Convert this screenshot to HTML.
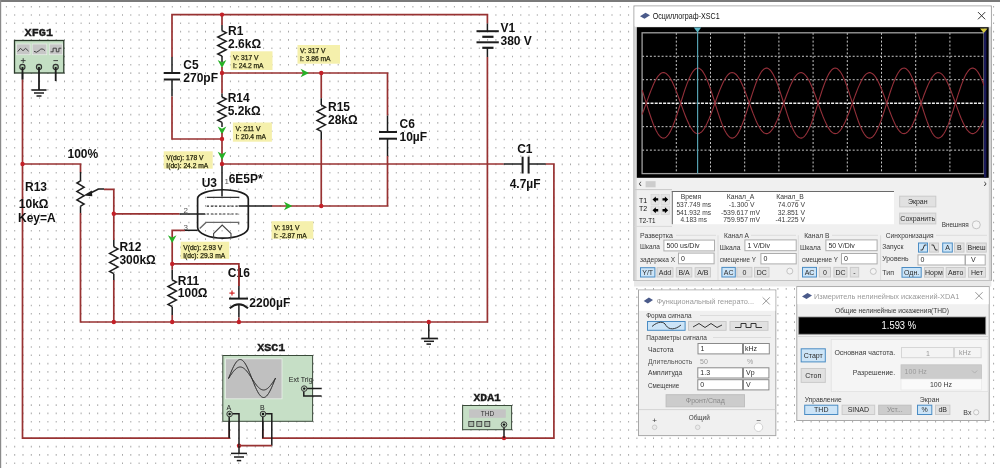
<!DOCTYPE html>
<html><head><meta charset="utf-8"><style>
html,body{margin:0;padding:0;background:#fff;overflow:hidden}
svg{display:block;will-change:transform}
</style></head><body>
<svg width="1000" height="468" viewBox="0 0 1000 468">
<rect x="0" y="0" width="1000" height="468" fill="#ffffff"/>
<path d="M5.9 5.9h1v1.6h-1zM5.9 14.2h1v1.6h-1zM5.9 22.5h1v1.6h-1zM5.9 30.8h1v1.6h-1zM5.9 39.1h1v1.6h-1zM5.9 47.4h1v1.6h-1zM5.9 55.7h1v1.6h-1zM5.9 64.0h1v1.6h-1zM5.9 72.3h1v1.6h-1zM5.9 80.6h1v1.6h-1zM5.9 88.9h1v1.6h-1zM5.9 97.2h1v1.6h-1zM5.9 105.5h1v1.6h-1zM5.9 113.8h1v1.6h-1zM5.9 122.1h1v1.6h-1zM5.9 130.4h1v1.6h-1zM5.9 138.7h1v1.6h-1zM5.9 147.0h1v1.6h-1zM5.9 155.3h1v1.6h-1zM5.9 163.6h1v1.6h-1zM5.9 171.9h1v1.6h-1zM5.9 180.2h1v1.6h-1zM5.9 188.5h1v1.6h-1zM5.9 196.8h1v1.6h-1zM5.9 205.1h1v1.6h-1zM5.9 213.4h1v1.6h-1zM5.9 221.7h1v1.6h-1zM5.9 230.0h1v1.6h-1zM5.9 238.3h1v1.6h-1zM5.9 246.6h1v1.6h-1zM5.9 254.9h1v1.6h-1zM5.9 263.2h1v1.6h-1zM5.9 271.5h1v1.6h-1zM5.9 279.8h1v1.6h-1zM5.9 288.1h1v1.6h-1zM5.9 296.4h1v1.6h-1zM5.9 304.7h1v1.6h-1zM5.9 313.0h1v1.6h-1zM5.9 321.3h1v1.6h-1zM5.9 329.6h1v1.6h-1zM5.9 337.9h1v1.6h-1zM5.9 346.2h1v1.6h-1zM5.9 354.5h1v1.6h-1zM5.9 362.8h1v1.6h-1zM5.9 371.1h1v1.6h-1zM5.9 379.4h1v1.6h-1zM5.9 387.7h1v1.6h-1zM5.9 396.0h1v1.6h-1zM5.9 404.3h1v1.6h-1zM5.9 412.6h1v1.6h-1zM5.9 420.9h1v1.6h-1zM5.9 429.2h1v1.6h-1zM5.9 437.5h1v1.6h-1zM5.9 445.8h1v1.6h-1zM5.9 454.1h1v1.6h-1zM5.9 462.4h1v1.6h-1zM14.2 5.9h1v1.6h-1zM14.2 14.2h1v1.6h-1zM14.2 22.5h1v1.6h-1zM14.2 30.8h1v1.6h-1zM14.2 39.1h1v1.6h-1zM14.2 47.4h1v1.6h-1zM14.2 55.7h1v1.6h-1zM14.2 64.0h1v1.6h-1zM14.2 72.3h1v1.6h-1zM14.2 80.6h1v1.6h-1zM14.2 88.9h1v1.6h-1zM14.2 97.2h1v1.6h-1zM14.2 105.5h1v1.6h-1zM14.2 113.8h1v1.6h-1zM14.2 122.1h1v1.6h-1zM14.2 130.4h1v1.6h-1zM14.2 138.7h1v1.6h-1zM14.2 147.0h1v1.6h-1zM14.2 155.3h1v1.6h-1zM14.2 163.6h1v1.6h-1zM14.2 171.9h1v1.6h-1zM14.2 180.2h1v1.6h-1zM14.2 188.5h1v1.6h-1zM14.2 196.8h1v1.6h-1zM14.2 205.1h1v1.6h-1zM14.2 213.4h1v1.6h-1zM14.2 221.7h1v1.6h-1zM14.2 230.0h1v1.6h-1zM14.2 238.3h1v1.6h-1zM14.2 246.6h1v1.6h-1zM14.2 254.9h1v1.6h-1zM14.2 263.2h1v1.6h-1zM14.2 271.5h1v1.6h-1zM14.2 279.8h1v1.6h-1zM14.2 288.1h1v1.6h-1zM14.2 296.4h1v1.6h-1zM14.2 304.7h1v1.6h-1zM14.2 313.0h1v1.6h-1zM14.2 321.3h1v1.6h-1zM14.2 329.6h1v1.6h-1zM14.2 337.9h1v1.6h-1zM14.2 346.2h1v1.6h-1zM14.2 354.5h1v1.6h-1zM14.2 362.8h1v1.6h-1zM14.2 371.1h1v1.6h-1zM14.2 379.4h1v1.6h-1zM14.2 387.7h1v1.6h-1zM14.2 396.0h1v1.6h-1zM14.2 404.3h1v1.6h-1zM14.2 412.6h1v1.6h-1zM14.2 420.9h1v1.6h-1zM14.2 429.2h1v1.6h-1zM14.2 437.5h1v1.6h-1zM14.2 445.8h1v1.6h-1zM14.2 454.1h1v1.6h-1zM14.2 462.4h1v1.6h-1zM22.5 5.9h1v1.6h-1zM22.5 14.2h1v1.6h-1zM22.5 22.5h1v1.6h-1zM22.5 30.8h1v1.6h-1zM22.5 39.1h1v1.6h-1zM22.5 47.4h1v1.6h-1zM22.5 55.7h1v1.6h-1zM22.5 64.0h1v1.6h-1zM22.5 72.3h1v1.6h-1zM22.5 80.6h1v1.6h-1zM22.5 88.9h1v1.6h-1zM22.5 97.2h1v1.6h-1zM22.5 105.5h1v1.6h-1zM22.5 113.8h1v1.6h-1zM22.5 122.1h1v1.6h-1zM22.5 130.4h1v1.6h-1zM22.5 138.7h1v1.6h-1zM22.5 147.0h1v1.6h-1zM22.5 155.3h1v1.6h-1zM22.5 163.6h1v1.6h-1zM22.5 171.9h1v1.6h-1zM22.5 180.2h1v1.6h-1zM22.5 188.5h1v1.6h-1zM22.5 196.8h1v1.6h-1zM22.5 205.1h1v1.6h-1zM22.5 213.4h1v1.6h-1zM22.5 221.7h1v1.6h-1zM22.5 230.0h1v1.6h-1zM22.5 238.3h1v1.6h-1zM22.5 246.6h1v1.6h-1zM22.5 254.9h1v1.6h-1zM22.5 263.2h1v1.6h-1zM22.5 271.5h1v1.6h-1zM22.5 279.8h1v1.6h-1zM22.5 288.1h1v1.6h-1zM22.5 296.4h1v1.6h-1zM22.5 304.7h1v1.6h-1zM22.5 313.0h1v1.6h-1zM22.5 321.3h1v1.6h-1zM22.5 329.6h1v1.6h-1zM22.5 337.9h1v1.6h-1zM22.5 346.2h1v1.6h-1zM22.5 354.5h1v1.6h-1zM22.5 362.8h1v1.6h-1zM22.5 371.1h1v1.6h-1zM22.5 379.4h1v1.6h-1zM22.5 387.7h1v1.6h-1zM22.5 396.0h1v1.6h-1zM22.5 404.3h1v1.6h-1zM22.5 412.6h1v1.6h-1zM22.5 420.9h1v1.6h-1zM22.5 429.2h1v1.6h-1zM22.5 437.5h1v1.6h-1zM22.5 445.8h1v1.6h-1zM22.5 454.1h1v1.6h-1zM22.5 462.4h1v1.6h-1zM30.8 5.9h1v1.6h-1zM30.8 14.2h1v1.6h-1zM30.8 22.5h1v1.6h-1zM30.8 30.8h1v1.6h-1zM30.8 39.1h1v1.6h-1zM30.8 47.4h1v1.6h-1zM30.8 55.7h1v1.6h-1zM30.8 64.0h1v1.6h-1zM30.8 72.3h1v1.6h-1zM30.8 80.6h1v1.6h-1zM30.8 88.9h1v1.6h-1zM30.8 97.2h1v1.6h-1zM30.8 105.5h1v1.6h-1zM30.8 113.8h1v1.6h-1zM30.8 122.1h1v1.6h-1zM30.8 130.4h1v1.6h-1zM30.8 138.7h1v1.6h-1zM30.8 147.0h1v1.6h-1zM30.8 155.3h1v1.6h-1zM30.8 163.6h1v1.6h-1zM30.8 171.9h1v1.6h-1zM30.8 180.2h1v1.6h-1zM30.8 188.5h1v1.6h-1zM30.8 196.8h1v1.6h-1zM30.8 205.1h1v1.6h-1zM30.8 213.4h1v1.6h-1zM30.8 221.7h1v1.6h-1zM30.8 230.0h1v1.6h-1zM30.8 238.3h1v1.6h-1zM30.8 246.6h1v1.6h-1zM30.8 254.9h1v1.6h-1zM30.8 263.2h1v1.6h-1zM30.8 271.5h1v1.6h-1zM30.8 279.8h1v1.6h-1zM30.8 288.1h1v1.6h-1zM30.8 296.4h1v1.6h-1zM30.8 304.7h1v1.6h-1zM30.8 313.0h1v1.6h-1zM30.8 321.3h1v1.6h-1zM30.8 329.6h1v1.6h-1zM30.8 337.9h1v1.6h-1zM30.8 346.2h1v1.6h-1zM30.8 354.5h1v1.6h-1zM30.8 362.8h1v1.6h-1zM30.8 371.1h1v1.6h-1zM30.8 379.4h1v1.6h-1zM30.8 387.7h1v1.6h-1zM30.8 396.0h1v1.6h-1zM30.8 404.3h1v1.6h-1zM30.8 412.6h1v1.6h-1zM30.8 420.9h1v1.6h-1zM30.8 429.2h1v1.6h-1zM30.8 437.5h1v1.6h-1zM30.8 445.8h1v1.6h-1zM30.8 454.1h1v1.6h-1zM30.8 462.4h1v1.6h-1zM39.1 5.9h1v1.6h-1zM39.1 14.2h1v1.6h-1zM39.1 22.5h1v1.6h-1zM39.1 30.8h1v1.6h-1zM39.1 39.1h1v1.6h-1zM39.1 47.4h1v1.6h-1zM39.1 55.7h1v1.6h-1zM39.1 64.0h1v1.6h-1zM39.1 72.3h1v1.6h-1zM39.1 80.6h1v1.6h-1zM39.1 88.9h1v1.6h-1zM39.1 97.2h1v1.6h-1zM39.1 105.5h1v1.6h-1zM39.1 113.8h1v1.6h-1zM39.1 122.1h1v1.6h-1zM39.1 130.4h1v1.6h-1zM39.1 138.7h1v1.6h-1zM39.1 147.0h1v1.6h-1zM39.1 155.3h1v1.6h-1zM39.1 163.6h1v1.6h-1zM39.1 171.9h1v1.6h-1zM39.1 180.2h1v1.6h-1zM39.1 188.5h1v1.6h-1zM39.1 196.8h1v1.6h-1zM39.1 205.1h1v1.6h-1zM39.1 213.4h1v1.6h-1zM39.1 221.7h1v1.6h-1zM39.1 230.0h1v1.6h-1zM39.1 238.3h1v1.6h-1zM39.1 246.6h1v1.6h-1zM39.1 254.9h1v1.6h-1zM39.1 263.2h1v1.6h-1zM39.1 271.5h1v1.6h-1zM39.1 279.8h1v1.6h-1zM39.1 288.1h1v1.6h-1zM39.1 296.4h1v1.6h-1zM39.1 304.7h1v1.6h-1zM39.1 313.0h1v1.6h-1zM39.1 321.3h1v1.6h-1zM39.1 329.6h1v1.6h-1zM39.1 337.9h1v1.6h-1zM39.1 346.2h1v1.6h-1zM39.1 354.5h1v1.6h-1zM39.1 362.8h1v1.6h-1zM39.1 371.1h1v1.6h-1zM39.1 379.4h1v1.6h-1zM39.1 387.7h1v1.6h-1zM39.1 396.0h1v1.6h-1zM39.1 404.3h1v1.6h-1zM39.1 412.6h1v1.6h-1zM39.1 420.9h1v1.6h-1zM39.1 429.2h1v1.6h-1zM39.1 437.5h1v1.6h-1zM39.1 445.8h1v1.6h-1zM39.1 454.1h1v1.6h-1zM39.1 462.4h1v1.6h-1zM47.4 5.9h1v1.6h-1zM47.4 14.2h1v1.6h-1zM47.4 22.5h1v1.6h-1zM47.4 30.8h1v1.6h-1zM47.4 39.1h1v1.6h-1zM47.4 47.4h1v1.6h-1zM47.4 55.7h1v1.6h-1zM47.4 64.0h1v1.6h-1zM47.4 72.3h1v1.6h-1zM47.4 80.6h1v1.6h-1zM47.4 88.9h1v1.6h-1zM47.4 97.2h1v1.6h-1zM47.4 105.5h1v1.6h-1zM47.4 113.8h1v1.6h-1zM47.4 122.1h1v1.6h-1zM47.4 130.4h1v1.6h-1zM47.4 138.7h1v1.6h-1zM47.4 147.0h1v1.6h-1zM47.4 155.3h1v1.6h-1zM47.4 163.6h1v1.6h-1zM47.4 171.9h1v1.6h-1zM47.4 180.2h1v1.6h-1zM47.4 188.5h1v1.6h-1zM47.4 196.8h1v1.6h-1zM47.4 205.1h1v1.6h-1zM47.4 213.4h1v1.6h-1zM47.4 221.7h1v1.6h-1zM47.4 230.0h1v1.6h-1zM47.4 238.3h1v1.6h-1zM47.4 246.6h1v1.6h-1zM47.4 254.9h1v1.6h-1zM47.4 263.2h1v1.6h-1zM47.4 271.5h1v1.6h-1zM47.4 279.8h1v1.6h-1zM47.4 288.1h1v1.6h-1zM47.4 296.4h1v1.6h-1zM47.4 304.7h1v1.6h-1zM47.4 313.0h1v1.6h-1zM47.4 321.3h1v1.6h-1zM47.4 329.6h1v1.6h-1zM47.4 337.9h1v1.6h-1zM47.4 346.2h1v1.6h-1zM47.4 354.5h1v1.6h-1zM47.4 362.8h1v1.6h-1zM47.4 371.1h1v1.6h-1zM47.4 379.4h1v1.6h-1zM47.4 387.7h1v1.6h-1zM47.4 396.0h1v1.6h-1zM47.4 404.3h1v1.6h-1zM47.4 412.6h1v1.6h-1zM47.4 420.9h1v1.6h-1zM47.4 429.2h1v1.6h-1zM47.4 437.5h1v1.6h-1zM47.4 445.8h1v1.6h-1zM47.4 454.1h1v1.6h-1zM47.4 462.4h1v1.6h-1zM55.7 5.9h1v1.6h-1zM55.7 14.2h1v1.6h-1zM55.7 22.5h1v1.6h-1zM55.7 30.8h1v1.6h-1zM55.7 39.1h1v1.6h-1zM55.7 47.4h1v1.6h-1zM55.7 55.7h1v1.6h-1zM55.7 64.0h1v1.6h-1zM55.7 72.3h1v1.6h-1zM55.7 80.6h1v1.6h-1zM55.7 88.9h1v1.6h-1zM55.7 97.2h1v1.6h-1zM55.7 105.5h1v1.6h-1zM55.7 113.8h1v1.6h-1zM55.7 122.1h1v1.6h-1zM55.7 130.4h1v1.6h-1zM55.7 138.7h1v1.6h-1zM55.7 147.0h1v1.6h-1zM55.7 155.3h1v1.6h-1zM55.7 163.6h1v1.6h-1zM55.7 171.9h1v1.6h-1zM55.7 180.2h1v1.6h-1zM55.7 188.5h1v1.6h-1zM55.7 196.8h1v1.6h-1zM55.7 205.1h1v1.6h-1zM55.7 213.4h1v1.6h-1zM55.7 221.7h1v1.6h-1zM55.7 230.0h1v1.6h-1zM55.7 238.3h1v1.6h-1zM55.7 246.6h1v1.6h-1zM55.7 254.9h1v1.6h-1zM55.7 263.2h1v1.6h-1zM55.7 271.5h1v1.6h-1zM55.7 279.8h1v1.6h-1zM55.7 288.1h1v1.6h-1zM55.7 296.4h1v1.6h-1zM55.7 304.7h1v1.6h-1zM55.7 313.0h1v1.6h-1zM55.7 321.3h1v1.6h-1zM55.7 329.6h1v1.6h-1zM55.7 337.9h1v1.6h-1zM55.7 346.2h1v1.6h-1zM55.7 354.5h1v1.6h-1zM55.7 362.8h1v1.6h-1zM55.7 371.1h1v1.6h-1zM55.7 379.4h1v1.6h-1zM55.7 387.7h1v1.6h-1zM55.7 396.0h1v1.6h-1zM55.7 404.3h1v1.6h-1zM55.7 412.6h1v1.6h-1zM55.7 420.9h1v1.6h-1zM55.7 429.2h1v1.6h-1zM55.7 437.5h1v1.6h-1zM55.7 445.8h1v1.6h-1zM55.7 454.1h1v1.6h-1zM55.7 462.4h1v1.6h-1zM64.0 5.9h1v1.6h-1zM64.0 14.2h1v1.6h-1zM64.0 22.5h1v1.6h-1zM64.0 30.8h1v1.6h-1zM64.0 39.1h1v1.6h-1zM64.0 47.4h1v1.6h-1zM64.0 55.7h1v1.6h-1zM64.0 64.0h1v1.6h-1zM64.0 72.3h1v1.6h-1zM64.0 80.6h1v1.6h-1zM64.0 88.9h1v1.6h-1zM64.0 97.2h1v1.6h-1zM64.0 105.5h1v1.6h-1zM64.0 113.8h1v1.6h-1zM64.0 122.1h1v1.6h-1zM64.0 130.4h1v1.6h-1zM64.0 138.7h1v1.6h-1zM64.0 147.0h1v1.6h-1zM64.0 155.3h1v1.6h-1zM64.0 163.6h1v1.6h-1zM64.0 171.9h1v1.6h-1zM64.0 180.2h1v1.6h-1zM64.0 188.5h1v1.6h-1zM64.0 196.8h1v1.6h-1zM64.0 205.1h1v1.6h-1zM64.0 213.4h1v1.6h-1zM64.0 221.7h1v1.6h-1zM64.0 230.0h1v1.6h-1zM64.0 238.3h1v1.6h-1zM64.0 246.6h1v1.6h-1zM64.0 254.9h1v1.6h-1zM64.0 263.2h1v1.6h-1zM64.0 271.5h1v1.6h-1zM64.0 279.8h1v1.6h-1zM64.0 288.1h1v1.6h-1zM64.0 296.4h1v1.6h-1zM64.0 304.7h1v1.6h-1zM64.0 313.0h1v1.6h-1zM64.0 321.3h1v1.6h-1zM64.0 329.6h1v1.6h-1zM64.0 337.9h1v1.6h-1zM64.0 346.2h1v1.6h-1zM64.0 354.5h1v1.6h-1zM64.0 362.8h1v1.6h-1zM64.0 371.1h1v1.6h-1zM64.0 379.4h1v1.6h-1zM64.0 387.7h1v1.6h-1zM64.0 396.0h1v1.6h-1zM64.0 404.3h1v1.6h-1zM64.0 412.6h1v1.6h-1zM64.0 420.9h1v1.6h-1zM64.0 429.2h1v1.6h-1zM64.0 437.5h1v1.6h-1zM64.0 445.8h1v1.6h-1zM64.0 454.1h1v1.6h-1zM64.0 462.4h1v1.6h-1zM72.3 5.9h1v1.6h-1zM72.3 14.2h1v1.6h-1zM72.3 22.5h1v1.6h-1zM72.3 30.8h1v1.6h-1zM72.3 39.1h1v1.6h-1zM72.3 47.4h1v1.6h-1zM72.3 55.7h1v1.6h-1zM72.3 64.0h1v1.6h-1zM72.3 72.3h1v1.6h-1zM72.3 80.6h1v1.6h-1zM72.3 88.9h1v1.6h-1zM72.3 97.2h1v1.6h-1zM72.3 105.5h1v1.6h-1zM72.3 113.8h1v1.6h-1zM72.3 122.1h1v1.6h-1zM72.3 130.4h1v1.6h-1zM72.3 138.7h1v1.6h-1zM72.3 147.0h1v1.6h-1zM72.3 155.3h1v1.6h-1zM72.3 163.6h1v1.6h-1zM72.3 171.9h1v1.6h-1zM72.3 180.2h1v1.6h-1zM72.3 188.5h1v1.6h-1zM72.3 196.8h1v1.6h-1zM72.3 205.1h1v1.6h-1zM72.3 213.4h1v1.6h-1zM72.3 221.7h1v1.6h-1zM72.3 230.0h1v1.6h-1zM72.3 238.3h1v1.6h-1zM72.3 246.6h1v1.6h-1zM72.3 254.9h1v1.6h-1zM72.3 263.2h1v1.6h-1zM72.3 271.5h1v1.6h-1zM72.3 279.8h1v1.6h-1zM72.3 288.1h1v1.6h-1zM72.3 296.4h1v1.6h-1zM72.3 304.7h1v1.6h-1zM72.3 313.0h1v1.6h-1zM72.3 321.3h1v1.6h-1zM72.3 329.6h1v1.6h-1zM72.3 337.9h1v1.6h-1zM72.3 346.2h1v1.6h-1zM72.3 354.5h1v1.6h-1zM72.3 362.8h1v1.6h-1zM72.3 371.1h1v1.6h-1zM72.3 379.4h1v1.6h-1zM72.3 387.7h1v1.6h-1zM72.3 396.0h1v1.6h-1zM72.3 404.3h1v1.6h-1zM72.3 412.6h1v1.6h-1zM72.3 420.9h1v1.6h-1zM72.3 429.2h1v1.6h-1zM72.3 437.5h1v1.6h-1zM72.3 445.8h1v1.6h-1zM72.3 454.1h1v1.6h-1zM72.3 462.4h1v1.6h-1zM80.6 5.9h1v1.6h-1zM80.6 14.2h1v1.6h-1zM80.6 22.5h1v1.6h-1zM80.6 30.8h1v1.6h-1zM80.6 39.1h1v1.6h-1zM80.6 47.4h1v1.6h-1zM80.6 55.7h1v1.6h-1zM80.6 64.0h1v1.6h-1zM80.6 72.3h1v1.6h-1zM80.6 80.6h1v1.6h-1zM80.6 88.9h1v1.6h-1zM80.6 97.2h1v1.6h-1zM80.6 105.5h1v1.6h-1zM80.6 113.8h1v1.6h-1zM80.6 122.1h1v1.6h-1zM80.6 130.4h1v1.6h-1zM80.6 138.7h1v1.6h-1zM80.6 147.0h1v1.6h-1zM80.6 155.3h1v1.6h-1zM80.6 163.6h1v1.6h-1zM80.6 171.9h1v1.6h-1zM80.6 180.2h1v1.6h-1zM80.6 188.5h1v1.6h-1zM80.6 196.8h1v1.6h-1zM80.6 205.1h1v1.6h-1zM80.6 213.4h1v1.6h-1zM80.6 221.7h1v1.6h-1zM80.6 230.0h1v1.6h-1zM80.6 238.3h1v1.6h-1zM80.6 246.6h1v1.6h-1zM80.6 254.9h1v1.6h-1zM80.6 263.2h1v1.6h-1zM80.6 271.5h1v1.6h-1zM80.6 279.8h1v1.6h-1zM80.6 288.1h1v1.6h-1zM80.6 296.4h1v1.6h-1zM80.6 304.7h1v1.6h-1zM80.6 313.0h1v1.6h-1zM80.6 321.3h1v1.6h-1zM80.6 329.6h1v1.6h-1zM80.6 337.9h1v1.6h-1zM80.6 346.2h1v1.6h-1zM80.6 354.5h1v1.6h-1zM80.6 362.8h1v1.6h-1zM80.6 371.1h1v1.6h-1zM80.6 379.4h1v1.6h-1zM80.6 387.7h1v1.6h-1zM80.6 396.0h1v1.6h-1zM80.6 404.3h1v1.6h-1zM80.6 412.6h1v1.6h-1zM80.6 420.9h1v1.6h-1zM80.6 429.2h1v1.6h-1zM80.6 437.5h1v1.6h-1zM80.6 445.8h1v1.6h-1zM80.6 454.1h1v1.6h-1zM80.6 462.4h1v1.6h-1zM88.9 5.9h1v1.6h-1zM88.9 14.2h1v1.6h-1zM88.9 22.5h1v1.6h-1zM88.9 30.8h1v1.6h-1zM88.9 39.1h1v1.6h-1zM88.9 47.4h1v1.6h-1zM88.9 55.7h1v1.6h-1zM88.9 64.0h1v1.6h-1zM88.9 72.3h1v1.6h-1zM88.9 80.6h1v1.6h-1zM88.9 88.9h1v1.6h-1zM88.9 97.2h1v1.6h-1zM88.9 105.5h1v1.6h-1zM88.9 113.8h1v1.6h-1zM88.9 122.1h1v1.6h-1zM88.9 130.4h1v1.6h-1zM88.9 138.7h1v1.6h-1zM88.9 147.0h1v1.6h-1zM88.9 155.3h1v1.6h-1zM88.9 163.6h1v1.6h-1zM88.9 171.9h1v1.6h-1zM88.9 180.2h1v1.6h-1zM88.9 188.5h1v1.6h-1zM88.9 196.8h1v1.6h-1zM88.9 205.1h1v1.6h-1zM88.9 213.4h1v1.6h-1zM88.9 221.7h1v1.6h-1zM88.9 230.0h1v1.6h-1zM88.9 238.3h1v1.6h-1zM88.9 246.6h1v1.6h-1zM88.9 254.9h1v1.6h-1zM88.9 263.2h1v1.6h-1zM88.9 271.5h1v1.6h-1zM88.9 279.8h1v1.6h-1zM88.9 288.1h1v1.6h-1zM88.9 296.4h1v1.6h-1zM88.9 304.7h1v1.6h-1zM88.9 313.0h1v1.6h-1zM88.9 321.3h1v1.6h-1zM88.9 329.6h1v1.6h-1zM88.9 337.9h1v1.6h-1zM88.9 346.2h1v1.6h-1zM88.9 354.5h1v1.6h-1zM88.9 362.8h1v1.6h-1zM88.9 371.1h1v1.6h-1zM88.9 379.4h1v1.6h-1zM88.9 387.7h1v1.6h-1zM88.9 396.0h1v1.6h-1zM88.9 404.3h1v1.6h-1zM88.9 412.6h1v1.6h-1zM88.9 420.9h1v1.6h-1zM88.9 429.2h1v1.6h-1zM88.9 437.5h1v1.6h-1zM88.9 445.8h1v1.6h-1zM88.9 454.1h1v1.6h-1zM88.9 462.4h1v1.6h-1zM97.2 5.9h1v1.6h-1zM97.2 14.2h1v1.6h-1zM97.2 22.5h1v1.6h-1zM97.2 30.8h1v1.6h-1zM97.2 39.1h1v1.6h-1zM97.2 47.4h1v1.6h-1zM97.2 55.7h1v1.6h-1zM97.2 64.0h1v1.6h-1zM97.2 72.3h1v1.6h-1zM97.2 80.6h1v1.6h-1zM97.2 88.9h1v1.6h-1zM97.2 97.2h1v1.6h-1zM97.2 105.5h1v1.6h-1zM97.2 113.8h1v1.6h-1zM97.2 122.1h1v1.6h-1zM97.2 130.4h1v1.6h-1zM97.2 138.7h1v1.6h-1zM97.2 147.0h1v1.6h-1zM97.2 155.3h1v1.6h-1zM97.2 163.6h1v1.6h-1zM97.2 171.9h1v1.6h-1zM97.2 180.2h1v1.6h-1zM97.2 188.5h1v1.6h-1zM97.2 196.8h1v1.6h-1zM97.2 205.1h1v1.6h-1zM97.2 213.4h1v1.6h-1zM97.2 221.7h1v1.6h-1zM97.2 230.0h1v1.6h-1zM97.2 238.3h1v1.6h-1zM97.2 246.6h1v1.6h-1zM97.2 254.9h1v1.6h-1zM97.2 263.2h1v1.6h-1zM97.2 271.5h1v1.6h-1zM97.2 279.8h1v1.6h-1zM97.2 288.1h1v1.6h-1zM97.2 296.4h1v1.6h-1zM97.2 304.7h1v1.6h-1zM97.2 313.0h1v1.6h-1zM97.2 321.3h1v1.6h-1zM97.2 329.6h1v1.6h-1zM97.2 337.9h1v1.6h-1zM97.2 346.2h1v1.6h-1zM97.2 354.5h1v1.6h-1zM97.2 362.8h1v1.6h-1zM97.2 371.1h1v1.6h-1zM97.2 379.4h1v1.6h-1zM97.2 387.7h1v1.6h-1zM97.2 396.0h1v1.6h-1zM97.2 404.3h1v1.6h-1zM97.2 412.6h1v1.6h-1zM97.2 420.9h1v1.6h-1zM97.2 429.2h1v1.6h-1zM97.2 437.5h1v1.6h-1zM97.2 445.8h1v1.6h-1zM97.2 454.1h1v1.6h-1zM97.2 462.4h1v1.6h-1zM105.5 5.9h1v1.6h-1zM105.5 14.2h1v1.6h-1zM105.5 22.5h1v1.6h-1zM105.5 30.8h1v1.6h-1zM105.5 39.1h1v1.6h-1zM105.5 47.4h1v1.6h-1zM105.5 55.7h1v1.6h-1zM105.5 64.0h1v1.6h-1zM105.5 72.3h1v1.6h-1zM105.5 80.6h1v1.6h-1zM105.5 88.9h1v1.6h-1zM105.5 97.2h1v1.6h-1zM105.5 105.5h1v1.6h-1zM105.5 113.8h1v1.6h-1zM105.5 122.1h1v1.6h-1zM105.5 130.4h1v1.6h-1zM105.5 138.7h1v1.6h-1zM105.5 147.0h1v1.6h-1zM105.5 155.3h1v1.6h-1zM105.5 163.6h1v1.6h-1zM105.5 171.9h1v1.6h-1zM105.5 180.2h1v1.6h-1zM105.5 188.5h1v1.6h-1zM105.5 196.8h1v1.6h-1zM105.5 205.1h1v1.6h-1zM105.5 213.4h1v1.6h-1zM105.5 221.7h1v1.6h-1zM105.5 230.0h1v1.6h-1zM105.5 238.3h1v1.6h-1zM105.5 246.6h1v1.6h-1zM105.5 254.9h1v1.6h-1zM105.5 263.2h1v1.6h-1zM105.5 271.5h1v1.6h-1zM105.5 279.8h1v1.6h-1zM105.5 288.1h1v1.6h-1zM105.5 296.4h1v1.6h-1zM105.5 304.7h1v1.6h-1zM105.5 313.0h1v1.6h-1zM105.5 321.3h1v1.6h-1zM105.5 329.6h1v1.6h-1zM105.5 337.9h1v1.6h-1zM105.5 346.2h1v1.6h-1zM105.5 354.5h1v1.6h-1zM105.5 362.8h1v1.6h-1zM105.5 371.1h1v1.6h-1zM105.5 379.4h1v1.6h-1zM105.5 387.7h1v1.6h-1zM105.5 396.0h1v1.6h-1zM105.5 404.3h1v1.6h-1zM105.5 412.6h1v1.6h-1zM105.5 420.9h1v1.6h-1zM105.5 429.2h1v1.6h-1zM105.5 437.5h1v1.6h-1zM105.5 445.8h1v1.6h-1zM105.5 454.1h1v1.6h-1zM105.5 462.4h1v1.6h-1zM113.7 5.9h1v1.6h-1zM113.7 14.2h1v1.6h-1zM113.7 22.5h1v1.6h-1zM113.7 30.8h1v1.6h-1zM113.7 39.1h1v1.6h-1zM113.7 47.4h1v1.6h-1zM113.7 55.7h1v1.6h-1zM113.7 64.0h1v1.6h-1zM113.7 72.3h1v1.6h-1zM113.7 80.6h1v1.6h-1zM113.7 88.9h1v1.6h-1zM113.7 97.2h1v1.6h-1zM113.7 105.5h1v1.6h-1zM113.7 113.8h1v1.6h-1zM113.7 122.1h1v1.6h-1zM113.7 130.4h1v1.6h-1zM113.7 138.7h1v1.6h-1zM113.7 147.0h1v1.6h-1zM113.7 155.3h1v1.6h-1zM113.7 163.6h1v1.6h-1zM113.7 171.9h1v1.6h-1zM113.7 180.2h1v1.6h-1zM113.7 188.5h1v1.6h-1zM113.7 196.8h1v1.6h-1zM113.7 205.1h1v1.6h-1zM113.7 213.4h1v1.6h-1zM113.7 221.7h1v1.6h-1zM113.7 230.0h1v1.6h-1zM113.7 238.3h1v1.6h-1zM113.7 246.6h1v1.6h-1zM113.7 254.9h1v1.6h-1zM113.7 263.2h1v1.6h-1zM113.7 271.5h1v1.6h-1zM113.7 279.8h1v1.6h-1zM113.7 288.1h1v1.6h-1zM113.7 296.4h1v1.6h-1zM113.7 304.7h1v1.6h-1zM113.7 313.0h1v1.6h-1zM113.7 321.3h1v1.6h-1zM113.7 329.6h1v1.6h-1zM113.7 337.9h1v1.6h-1zM113.7 346.2h1v1.6h-1zM113.7 354.5h1v1.6h-1zM113.7 362.8h1v1.6h-1zM113.7 371.1h1v1.6h-1zM113.7 379.4h1v1.6h-1zM113.7 387.7h1v1.6h-1zM113.7 396.0h1v1.6h-1zM113.7 404.3h1v1.6h-1zM113.7 412.6h1v1.6h-1zM113.7 420.9h1v1.6h-1zM113.7 429.2h1v1.6h-1zM113.7 437.5h1v1.6h-1zM113.7 445.8h1v1.6h-1zM113.7 454.1h1v1.6h-1zM113.7 462.4h1v1.6h-1zM122.0 5.9h1v1.6h-1zM122.0 14.2h1v1.6h-1zM122.0 22.5h1v1.6h-1zM122.0 30.8h1v1.6h-1zM122.0 39.1h1v1.6h-1zM122.0 47.4h1v1.6h-1zM122.0 55.7h1v1.6h-1zM122.0 64.0h1v1.6h-1zM122.0 72.3h1v1.6h-1zM122.0 80.6h1v1.6h-1zM122.0 88.9h1v1.6h-1zM122.0 97.2h1v1.6h-1zM122.0 105.5h1v1.6h-1zM122.0 113.8h1v1.6h-1zM122.0 122.1h1v1.6h-1zM122.0 130.4h1v1.6h-1zM122.0 138.7h1v1.6h-1zM122.0 147.0h1v1.6h-1zM122.0 155.3h1v1.6h-1zM122.0 163.6h1v1.6h-1zM122.0 171.9h1v1.6h-1zM122.0 180.2h1v1.6h-1zM122.0 188.5h1v1.6h-1zM122.0 196.8h1v1.6h-1zM122.0 205.1h1v1.6h-1zM122.0 213.4h1v1.6h-1zM122.0 221.7h1v1.6h-1zM122.0 230.0h1v1.6h-1zM122.0 238.3h1v1.6h-1zM122.0 246.6h1v1.6h-1zM122.0 254.9h1v1.6h-1zM122.0 263.2h1v1.6h-1zM122.0 271.5h1v1.6h-1zM122.0 279.8h1v1.6h-1zM122.0 288.1h1v1.6h-1zM122.0 296.4h1v1.6h-1zM122.0 304.7h1v1.6h-1zM122.0 313.0h1v1.6h-1zM122.0 321.3h1v1.6h-1zM122.0 329.6h1v1.6h-1zM122.0 337.9h1v1.6h-1zM122.0 346.2h1v1.6h-1zM122.0 354.5h1v1.6h-1zM122.0 362.8h1v1.6h-1zM122.0 371.1h1v1.6h-1zM122.0 379.4h1v1.6h-1zM122.0 387.7h1v1.6h-1zM122.0 396.0h1v1.6h-1zM122.0 404.3h1v1.6h-1zM122.0 412.6h1v1.6h-1zM122.0 420.9h1v1.6h-1zM122.0 429.2h1v1.6h-1zM122.0 437.5h1v1.6h-1zM122.0 445.8h1v1.6h-1zM122.0 454.1h1v1.6h-1zM122.0 462.4h1v1.6h-1zM130.3 5.9h1v1.6h-1zM130.3 14.2h1v1.6h-1zM130.3 22.5h1v1.6h-1zM130.3 30.8h1v1.6h-1zM130.3 39.1h1v1.6h-1zM130.3 47.4h1v1.6h-1zM130.3 55.7h1v1.6h-1zM130.3 64.0h1v1.6h-1zM130.3 72.3h1v1.6h-1zM130.3 80.6h1v1.6h-1zM130.3 88.9h1v1.6h-1zM130.3 97.2h1v1.6h-1zM130.3 105.5h1v1.6h-1zM130.3 113.8h1v1.6h-1zM130.3 122.1h1v1.6h-1zM130.3 130.4h1v1.6h-1zM130.3 138.7h1v1.6h-1zM130.3 147.0h1v1.6h-1zM130.3 155.3h1v1.6h-1zM130.3 163.6h1v1.6h-1zM130.3 171.9h1v1.6h-1zM130.3 180.2h1v1.6h-1zM130.3 188.5h1v1.6h-1zM130.3 196.8h1v1.6h-1zM130.3 205.1h1v1.6h-1zM130.3 213.4h1v1.6h-1zM130.3 221.7h1v1.6h-1zM130.3 230.0h1v1.6h-1zM130.3 238.3h1v1.6h-1zM130.3 246.6h1v1.6h-1zM130.3 254.9h1v1.6h-1zM130.3 263.2h1v1.6h-1zM130.3 271.5h1v1.6h-1zM130.3 279.8h1v1.6h-1zM130.3 288.1h1v1.6h-1zM130.3 296.4h1v1.6h-1zM130.3 304.7h1v1.6h-1zM130.3 313.0h1v1.6h-1zM130.3 321.3h1v1.6h-1zM130.3 329.6h1v1.6h-1zM130.3 337.9h1v1.6h-1zM130.3 346.2h1v1.6h-1zM130.3 354.5h1v1.6h-1zM130.3 362.8h1v1.6h-1zM130.3 371.1h1v1.6h-1zM130.3 379.4h1v1.6h-1zM130.3 387.7h1v1.6h-1zM130.3 396.0h1v1.6h-1zM130.3 404.3h1v1.6h-1zM130.3 412.6h1v1.6h-1zM130.3 420.9h1v1.6h-1zM130.3 429.2h1v1.6h-1zM130.3 437.5h1v1.6h-1zM130.3 445.8h1v1.6h-1zM130.3 454.1h1v1.6h-1zM130.3 462.4h1v1.6h-1zM138.6 5.9h1v1.6h-1zM138.6 14.2h1v1.6h-1zM138.6 22.5h1v1.6h-1zM138.6 30.8h1v1.6h-1zM138.6 39.1h1v1.6h-1zM138.6 47.4h1v1.6h-1zM138.6 55.7h1v1.6h-1zM138.6 64.0h1v1.6h-1zM138.6 72.3h1v1.6h-1zM138.6 80.6h1v1.6h-1zM138.6 88.9h1v1.6h-1zM138.6 97.2h1v1.6h-1zM138.6 105.5h1v1.6h-1zM138.6 113.8h1v1.6h-1zM138.6 122.1h1v1.6h-1zM138.6 130.4h1v1.6h-1zM138.6 138.7h1v1.6h-1zM138.6 147.0h1v1.6h-1zM138.6 155.3h1v1.6h-1zM138.6 163.6h1v1.6h-1zM138.6 171.9h1v1.6h-1zM138.6 180.2h1v1.6h-1zM138.6 188.5h1v1.6h-1zM138.6 196.8h1v1.6h-1zM138.6 205.1h1v1.6h-1zM138.6 213.4h1v1.6h-1zM138.6 221.7h1v1.6h-1zM138.6 230.0h1v1.6h-1zM138.6 238.3h1v1.6h-1zM138.6 246.6h1v1.6h-1zM138.6 254.9h1v1.6h-1zM138.6 263.2h1v1.6h-1zM138.6 271.5h1v1.6h-1zM138.6 279.8h1v1.6h-1zM138.6 288.1h1v1.6h-1zM138.6 296.4h1v1.6h-1zM138.6 304.7h1v1.6h-1zM138.6 313.0h1v1.6h-1zM138.6 321.3h1v1.6h-1zM138.6 329.6h1v1.6h-1zM138.6 337.9h1v1.6h-1zM138.6 346.2h1v1.6h-1zM138.6 354.5h1v1.6h-1zM138.6 362.8h1v1.6h-1zM138.6 371.1h1v1.6h-1zM138.6 379.4h1v1.6h-1zM138.6 387.7h1v1.6h-1zM138.6 396.0h1v1.6h-1zM138.6 404.3h1v1.6h-1zM138.6 412.6h1v1.6h-1zM138.6 420.9h1v1.6h-1zM138.6 429.2h1v1.6h-1zM138.6 437.5h1v1.6h-1zM138.6 445.8h1v1.6h-1zM138.6 454.1h1v1.6h-1zM138.6 462.4h1v1.6h-1zM146.9 5.9h1v1.6h-1zM146.9 14.2h1v1.6h-1zM146.9 22.5h1v1.6h-1zM146.9 30.8h1v1.6h-1zM146.9 39.1h1v1.6h-1zM146.9 47.4h1v1.6h-1zM146.9 55.7h1v1.6h-1zM146.9 64.0h1v1.6h-1zM146.9 72.3h1v1.6h-1zM146.9 80.6h1v1.6h-1zM146.9 88.9h1v1.6h-1zM146.9 97.2h1v1.6h-1zM146.9 105.5h1v1.6h-1zM146.9 113.8h1v1.6h-1zM146.9 122.1h1v1.6h-1zM146.9 130.4h1v1.6h-1zM146.9 138.7h1v1.6h-1zM146.9 147.0h1v1.6h-1zM146.9 155.3h1v1.6h-1zM146.9 163.6h1v1.6h-1zM146.9 171.9h1v1.6h-1zM146.9 180.2h1v1.6h-1zM146.9 188.5h1v1.6h-1zM146.9 196.8h1v1.6h-1zM146.9 205.1h1v1.6h-1zM146.9 213.4h1v1.6h-1zM146.9 221.7h1v1.6h-1zM146.9 230.0h1v1.6h-1zM146.9 238.3h1v1.6h-1zM146.9 246.6h1v1.6h-1zM146.9 254.9h1v1.6h-1zM146.9 263.2h1v1.6h-1zM146.9 271.5h1v1.6h-1zM146.9 279.8h1v1.6h-1zM146.9 288.1h1v1.6h-1zM146.9 296.4h1v1.6h-1zM146.9 304.7h1v1.6h-1zM146.9 313.0h1v1.6h-1zM146.9 321.3h1v1.6h-1zM146.9 329.6h1v1.6h-1zM146.9 337.9h1v1.6h-1zM146.9 346.2h1v1.6h-1zM146.9 354.5h1v1.6h-1zM146.9 362.8h1v1.6h-1zM146.9 371.1h1v1.6h-1zM146.9 379.4h1v1.6h-1zM146.9 387.7h1v1.6h-1zM146.9 396.0h1v1.6h-1zM146.9 404.3h1v1.6h-1zM146.9 412.6h1v1.6h-1zM146.9 420.9h1v1.6h-1zM146.9 429.2h1v1.6h-1zM146.9 437.5h1v1.6h-1zM146.9 445.8h1v1.6h-1zM146.9 454.1h1v1.6h-1zM146.9 462.4h1v1.6h-1zM155.2 5.9h1v1.6h-1zM155.2 14.2h1v1.6h-1zM155.2 22.5h1v1.6h-1zM155.2 30.8h1v1.6h-1zM155.2 39.1h1v1.6h-1zM155.2 47.4h1v1.6h-1zM155.2 55.7h1v1.6h-1zM155.2 64.0h1v1.6h-1zM155.2 72.3h1v1.6h-1zM155.2 80.6h1v1.6h-1zM155.2 88.9h1v1.6h-1zM155.2 97.2h1v1.6h-1zM155.2 105.5h1v1.6h-1zM155.2 113.8h1v1.6h-1zM155.2 122.1h1v1.6h-1zM155.2 130.4h1v1.6h-1zM155.2 138.7h1v1.6h-1zM155.2 147.0h1v1.6h-1zM155.2 155.3h1v1.6h-1zM155.2 163.6h1v1.6h-1zM155.2 171.9h1v1.6h-1zM155.2 180.2h1v1.6h-1zM155.2 188.5h1v1.6h-1zM155.2 196.8h1v1.6h-1zM155.2 205.1h1v1.6h-1zM155.2 213.4h1v1.6h-1zM155.2 221.7h1v1.6h-1zM155.2 230.0h1v1.6h-1zM155.2 238.3h1v1.6h-1zM155.2 246.6h1v1.6h-1zM155.2 254.9h1v1.6h-1zM155.2 263.2h1v1.6h-1zM155.2 271.5h1v1.6h-1zM155.2 279.8h1v1.6h-1zM155.2 288.1h1v1.6h-1zM155.2 296.4h1v1.6h-1zM155.2 304.7h1v1.6h-1zM155.2 313.0h1v1.6h-1zM155.2 321.3h1v1.6h-1zM155.2 329.6h1v1.6h-1zM155.2 337.9h1v1.6h-1zM155.2 346.2h1v1.6h-1zM155.2 354.5h1v1.6h-1zM155.2 362.8h1v1.6h-1zM155.2 371.1h1v1.6h-1zM155.2 379.4h1v1.6h-1zM155.2 387.7h1v1.6h-1zM155.2 396.0h1v1.6h-1zM155.2 404.3h1v1.6h-1zM155.2 412.6h1v1.6h-1zM155.2 420.9h1v1.6h-1zM155.2 429.2h1v1.6h-1zM155.2 437.5h1v1.6h-1zM155.2 445.8h1v1.6h-1zM155.2 454.1h1v1.6h-1zM155.2 462.4h1v1.6h-1zM163.5 5.9h1v1.6h-1zM163.5 14.2h1v1.6h-1zM163.5 22.5h1v1.6h-1zM163.5 30.8h1v1.6h-1zM163.5 39.1h1v1.6h-1zM163.5 47.4h1v1.6h-1zM163.5 55.7h1v1.6h-1zM163.5 64.0h1v1.6h-1zM163.5 72.3h1v1.6h-1zM163.5 80.6h1v1.6h-1zM163.5 88.9h1v1.6h-1zM163.5 97.2h1v1.6h-1zM163.5 105.5h1v1.6h-1zM163.5 113.8h1v1.6h-1zM163.5 122.1h1v1.6h-1zM163.5 130.4h1v1.6h-1zM163.5 138.7h1v1.6h-1zM163.5 147.0h1v1.6h-1zM163.5 155.3h1v1.6h-1zM163.5 163.6h1v1.6h-1zM163.5 171.9h1v1.6h-1zM163.5 180.2h1v1.6h-1zM163.5 188.5h1v1.6h-1zM163.5 196.8h1v1.6h-1zM163.5 205.1h1v1.6h-1zM163.5 213.4h1v1.6h-1zM163.5 221.7h1v1.6h-1zM163.5 230.0h1v1.6h-1zM163.5 238.3h1v1.6h-1zM163.5 246.6h1v1.6h-1zM163.5 254.9h1v1.6h-1zM163.5 263.2h1v1.6h-1zM163.5 271.5h1v1.6h-1zM163.5 279.8h1v1.6h-1zM163.5 288.1h1v1.6h-1zM163.5 296.4h1v1.6h-1zM163.5 304.7h1v1.6h-1zM163.5 313.0h1v1.6h-1zM163.5 321.3h1v1.6h-1zM163.5 329.6h1v1.6h-1zM163.5 337.9h1v1.6h-1zM163.5 346.2h1v1.6h-1zM163.5 354.5h1v1.6h-1zM163.5 362.8h1v1.6h-1zM163.5 371.1h1v1.6h-1zM163.5 379.4h1v1.6h-1zM163.5 387.7h1v1.6h-1zM163.5 396.0h1v1.6h-1zM163.5 404.3h1v1.6h-1zM163.5 412.6h1v1.6h-1zM163.5 420.9h1v1.6h-1zM163.5 429.2h1v1.6h-1zM163.5 437.5h1v1.6h-1zM163.5 445.8h1v1.6h-1zM163.5 454.1h1v1.6h-1zM163.5 462.4h1v1.6h-1zM171.8 5.9h1v1.6h-1zM171.8 14.2h1v1.6h-1zM171.8 22.5h1v1.6h-1zM171.8 30.8h1v1.6h-1zM171.8 39.1h1v1.6h-1zM171.8 47.4h1v1.6h-1zM171.8 55.7h1v1.6h-1zM171.8 64.0h1v1.6h-1zM171.8 72.3h1v1.6h-1zM171.8 80.6h1v1.6h-1zM171.8 88.9h1v1.6h-1zM171.8 97.2h1v1.6h-1zM171.8 105.5h1v1.6h-1zM171.8 113.8h1v1.6h-1zM171.8 122.1h1v1.6h-1zM171.8 130.4h1v1.6h-1zM171.8 138.7h1v1.6h-1zM171.8 147.0h1v1.6h-1zM171.8 155.3h1v1.6h-1zM171.8 163.6h1v1.6h-1zM171.8 171.9h1v1.6h-1zM171.8 180.2h1v1.6h-1zM171.8 188.5h1v1.6h-1zM171.8 196.8h1v1.6h-1zM171.8 205.1h1v1.6h-1zM171.8 213.4h1v1.6h-1zM171.8 221.7h1v1.6h-1zM171.8 230.0h1v1.6h-1zM171.8 238.3h1v1.6h-1zM171.8 246.6h1v1.6h-1zM171.8 254.9h1v1.6h-1zM171.8 263.2h1v1.6h-1zM171.8 271.5h1v1.6h-1zM171.8 279.8h1v1.6h-1zM171.8 288.1h1v1.6h-1zM171.8 296.4h1v1.6h-1zM171.8 304.7h1v1.6h-1zM171.8 313.0h1v1.6h-1zM171.8 321.3h1v1.6h-1zM171.8 329.6h1v1.6h-1zM171.8 337.9h1v1.6h-1zM171.8 346.2h1v1.6h-1zM171.8 354.5h1v1.6h-1zM171.8 362.8h1v1.6h-1zM171.8 371.1h1v1.6h-1zM171.8 379.4h1v1.6h-1zM171.8 387.7h1v1.6h-1zM171.8 396.0h1v1.6h-1zM171.8 404.3h1v1.6h-1zM171.8 412.6h1v1.6h-1zM171.8 420.9h1v1.6h-1zM171.8 429.2h1v1.6h-1zM171.8 437.5h1v1.6h-1zM171.8 445.8h1v1.6h-1zM171.8 454.1h1v1.6h-1zM171.8 462.4h1v1.6h-1zM180.1 5.9h1v1.6h-1zM180.1 14.2h1v1.6h-1zM180.1 22.5h1v1.6h-1zM180.1 30.8h1v1.6h-1zM180.1 39.1h1v1.6h-1zM180.1 47.4h1v1.6h-1zM180.1 55.7h1v1.6h-1zM180.1 64.0h1v1.6h-1zM180.1 72.3h1v1.6h-1zM180.1 80.6h1v1.6h-1zM180.1 88.9h1v1.6h-1zM180.1 97.2h1v1.6h-1zM180.1 105.5h1v1.6h-1zM180.1 113.8h1v1.6h-1zM180.1 122.1h1v1.6h-1zM180.1 130.4h1v1.6h-1zM180.1 138.7h1v1.6h-1zM180.1 147.0h1v1.6h-1zM180.1 155.3h1v1.6h-1zM180.1 163.6h1v1.6h-1zM180.1 171.9h1v1.6h-1zM180.1 180.2h1v1.6h-1zM180.1 188.5h1v1.6h-1zM180.1 196.8h1v1.6h-1zM180.1 205.1h1v1.6h-1zM180.1 213.4h1v1.6h-1zM180.1 221.7h1v1.6h-1zM180.1 230.0h1v1.6h-1zM180.1 238.3h1v1.6h-1zM180.1 246.6h1v1.6h-1zM180.1 254.9h1v1.6h-1zM180.1 263.2h1v1.6h-1zM180.1 271.5h1v1.6h-1zM180.1 279.8h1v1.6h-1zM180.1 288.1h1v1.6h-1zM180.1 296.4h1v1.6h-1zM180.1 304.7h1v1.6h-1zM180.1 313.0h1v1.6h-1zM180.1 321.3h1v1.6h-1zM180.1 329.6h1v1.6h-1zM180.1 337.9h1v1.6h-1zM180.1 346.2h1v1.6h-1zM180.1 354.5h1v1.6h-1zM180.1 362.8h1v1.6h-1zM180.1 371.1h1v1.6h-1zM180.1 379.4h1v1.6h-1zM180.1 387.7h1v1.6h-1zM180.1 396.0h1v1.6h-1zM180.1 404.3h1v1.6h-1zM180.1 412.6h1v1.6h-1zM180.1 420.9h1v1.6h-1zM180.1 429.2h1v1.6h-1zM180.1 437.5h1v1.6h-1zM180.1 445.8h1v1.6h-1zM180.1 454.1h1v1.6h-1zM180.1 462.4h1v1.6h-1zM188.4 5.9h1v1.6h-1zM188.4 14.2h1v1.6h-1zM188.4 22.5h1v1.6h-1zM188.4 30.8h1v1.6h-1zM188.4 39.1h1v1.6h-1zM188.4 47.4h1v1.6h-1zM188.4 55.7h1v1.6h-1zM188.4 64.0h1v1.6h-1zM188.4 72.3h1v1.6h-1zM188.4 80.6h1v1.6h-1zM188.4 88.9h1v1.6h-1zM188.4 97.2h1v1.6h-1zM188.4 105.5h1v1.6h-1zM188.4 113.8h1v1.6h-1zM188.4 122.1h1v1.6h-1zM188.4 130.4h1v1.6h-1zM188.4 138.7h1v1.6h-1zM188.4 147.0h1v1.6h-1zM188.4 155.3h1v1.6h-1zM188.4 163.6h1v1.6h-1zM188.4 171.9h1v1.6h-1zM188.4 180.2h1v1.6h-1zM188.4 188.5h1v1.6h-1zM188.4 196.8h1v1.6h-1zM188.4 205.1h1v1.6h-1zM188.4 213.4h1v1.6h-1zM188.4 221.7h1v1.6h-1zM188.4 230.0h1v1.6h-1zM188.4 238.3h1v1.6h-1zM188.4 246.6h1v1.6h-1zM188.4 254.9h1v1.6h-1zM188.4 263.2h1v1.6h-1zM188.4 271.5h1v1.6h-1zM188.4 279.8h1v1.6h-1zM188.4 288.1h1v1.6h-1zM188.4 296.4h1v1.6h-1zM188.4 304.7h1v1.6h-1zM188.4 313.0h1v1.6h-1zM188.4 321.3h1v1.6h-1zM188.4 329.6h1v1.6h-1zM188.4 337.9h1v1.6h-1zM188.4 346.2h1v1.6h-1zM188.4 354.5h1v1.6h-1zM188.4 362.8h1v1.6h-1zM188.4 371.1h1v1.6h-1zM188.4 379.4h1v1.6h-1zM188.4 387.7h1v1.6h-1zM188.4 396.0h1v1.6h-1zM188.4 404.3h1v1.6h-1zM188.4 412.6h1v1.6h-1zM188.4 420.9h1v1.6h-1zM188.4 429.2h1v1.6h-1zM188.4 437.5h1v1.6h-1zM188.4 445.8h1v1.6h-1zM188.4 454.1h1v1.6h-1zM188.4 462.4h1v1.6h-1zM196.7 5.9h1v1.6h-1zM196.7 14.2h1v1.6h-1zM196.7 22.5h1v1.6h-1zM196.7 30.8h1v1.6h-1zM196.7 39.1h1v1.6h-1zM196.7 47.4h1v1.6h-1zM196.7 55.7h1v1.6h-1zM196.7 64.0h1v1.6h-1zM196.7 72.3h1v1.6h-1zM196.7 80.6h1v1.6h-1zM196.7 88.9h1v1.6h-1zM196.7 97.2h1v1.6h-1zM196.7 105.5h1v1.6h-1zM196.7 113.8h1v1.6h-1zM196.7 122.1h1v1.6h-1zM196.7 130.4h1v1.6h-1zM196.7 138.7h1v1.6h-1zM196.7 147.0h1v1.6h-1zM196.7 155.3h1v1.6h-1zM196.7 163.6h1v1.6h-1zM196.7 171.9h1v1.6h-1zM196.7 180.2h1v1.6h-1zM196.7 188.5h1v1.6h-1zM196.7 196.8h1v1.6h-1zM196.7 205.1h1v1.6h-1zM196.7 213.4h1v1.6h-1zM196.7 221.7h1v1.6h-1zM196.7 230.0h1v1.6h-1zM196.7 238.3h1v1.6h-1zM196.7 246.6h1v1.6h-1zM196.7 254.9h1v1.6h-1zM196.7 263.2h1v1.6h-1zM196.7 271.5h1v1.6h-1zM196.7 279.8h1v1.6h-1zM196.7 288.1h1v1.6h-1zM196.7 296.4h1v1.6h-1zM196.7 304.7h1v1.6h-1zM196.7 313.0h1v1.6h-1zM196.7 321.3h1v1.6h-1zM196.7 329.6h1v1.6h-1zM196.7 337.9h1v1.6h-1zM196.7 346.2h1v1.6h-1zM196.7 354.5h1v1.6h-1zM196.7 362.8h1v1.6h-1zM196.7 371.1h1v1.6h-1zM196.7 379.4h1v1.6h-1zM196.7 387.7h1v1.6h-1zM196.7 396.0h1v1.6h-1zM196.7 404.3h1v1.6h-1zM196.7 412.6h1v1.6h-1zM196.7 420.9h1v1.6h-1zM196.7 429.2h1v1.6h-1zM196.7 437.5h1v1.6h-1zM196.7 445.8h1v1.6h-1zM196.7 454.1h1v1.6h-1zM196.7 462.4h1v1.6h-1zM205.0 5.9h1v1.6h-1zM205.0 14.2h1v1.6h-1zM205.0 22.5h1v1.6h-1zM205.0 30.8h1v1.6h-1zM205.0 39.1h1v1.6h-1zM205.0 47.4h1v1.6h-1zM205.0 55.7h1v1.6h-1zM205.0 64.0h1v1.6h-1zM205.0 72.3h1v1.6h-1zM205.0 80.6h1v1.6h-1zM205.0 88.9h1v1.6h-1zM205.0 97.2h1v1.6h-1zM205.0 105.5h1v1.6h-1zM205.0 113.8h1v1.6h-1zM205.0 122.1h1v1.6h-1zM205.0 130.4h1v1.6h-1zM205.0 138.7h1v1.6h-1zM205.0 147.0h1v1.6h-1zM205.0 155.3h1v1.6h-1zM205.0 163.6h1v1.6h-1zM205.0 171.9h1v1.6h-1zM205.0 180.2h1v1.6h-1zM205.0 188.5h1v1.6h-1zM205.0 196.8h1v1.6h-1zM205.0 205.1h1v1.6h-1zM205.0 213.4h1v1.6h-1zM205.0 221.7h1v1.6h-1zM205.0 230.0h1v1.6h-1zM205.0 238.3h1v1.6h-1zM205.0 246.6h1v1.6h-1zM205.0 254.9h1v1.6h-1zM205.0 263.2h1v1.6h-1zM205.0 271.5h1v1.6h-1zM205.0 279.8h1v1.6h-1zM205.0 288.1h1v1.6h-1zM205.0 296.4h1v1.6h-1zM205.0 304.7h1v1.6h-1zM205.0 313.0h1v1.6h-1zM205.0 321.3h1v1.6h-1zM205.0 329.6h1v1.6h-1zM205.0 337.9h1v1.6h-1zM205.0 346.2h1v1.6h-1zM205.0 354.5h1v1.6h-1zM205.0 362.8h1v1.6h-1zM205.0 371.1h1v1.6h-1zM205.0 379.4h1v1.6h-1zM205.0 387.7h1v1.6h-1zM205.0 396.0h1v1.6h-1zM205.0 404.3h1v1.6h-1zM205.0 412.6h1v1.6h-1zM205.0 420.9h1v1.6h-1zM205.0 429.2h1v1.6h-1zM205.0 437.5h1v1.6h-1zM205.0 445.8h1v1.6h-1zM205.0 454.1h1v1.6h-1zM205.0 462.4h1v1.6h-1zM213.3 5.9h1v1.6h-1zM213.3 14.2h1v1.6h-1zM213.3 22.5h1v1.6h-1zM213.3 30.8h1v1.6h-1zM213.3 39.1h1v1.6h-1zM213.3 47.4h1v1.6h-1zM213.3 55.7h1v1.6h-1zM213.3 64.0h1v1.6h-1zM213.3 72.3h1v1.6h-1zM213.3 80.6h1v1.6h-1zM213.3 88.9h1v1.6h-1zM213.3 97.2h1v1.6h-1zM213.3 105.5h1v1.6h-1zM213.3 113.8h1v1.6h-1zM213.3 122.1h1v1.6h-1zM213.3 130.4h1v1.6h-1zM213.3 138.7h1v1.6h-1zM213.3 147.0h1v1.6h-1zM213.3 155.3h1v1.6h-1zM213.3 163.6h1v1.6h-1zM213.3 171.9h1v1.6h-1zM213.3 180.2h1v1.6h-1zM213.3 188.5h1v1.6h-1zM213.3 196.8h1v1.6h-1zM213.3 205.1h1v1.6h-1zM213.3 213.4h1v1.6h-1zM213.3 221.7h1v1.6h-1zM213.3 230.0h1v1.6h-1zM213.3 238.3h1v1.6h-1zM213.3 246.6h1v1.6h-1zM213.3 254.9h1v1.6h-1zM213.3 263.2h1v1.6h-1zM213.3 271.5h1v1.6h-1zM213.3 279.8h1v1.6h-1zM213.3 288.1h1v1.6h-1zM213.3 296.4h1v1.6h-1zM213.3 304.7h1v1.6h-1zM213.3 313.0h1v1.6h-1zM213.3 321.3h1v1.6h-1zM213.3 329.6h1v1.6h-1zM213.3 337.9h1v1.6h-1zM213.3 346.2h1v1.6h-1zM213.3 354.5h1v1.6h-1zM213.3 362.8h1v1.6h-1zM213.3 371.1h1v1.6h-1zM213.3 379.4h1v1.6h-1zM213.3 387.7h1v1.6h-1zM213.3 396.0h1v1.6h-1zM213.3 404.3h1v1.6h-1zM213.3 412.6h1v1.6h-1zM213.3 420.9h1v1.6h-1zM213.3 429.2h1v1.6h-1zM213.3 437.5h1v1.6h-1zM213.3 445.8h1v1.6h-1zM213.3 454.1h1v1.6h-1zM213.3 462.4h1v1.6h-1zM221.6 5.9h1v1.6h-1zM221.6 14.2h1v1.6h-1zM221.6 22.5h1v1.6h-1zM221.6 30.8h1v1.6h-1zM221.6 39.1h1v1.6h-1zM221.6 47.4h1v1.6h-1zM221.6 55.7h1v1.6h-1zM221.6 64.0h1v1.6h-1zM221.6 72.3h1v1.6h-1zM221.6 80.6h1v1.6h-1zM221.6 88.9h1v1.6h-1zM221.6 97.2h1v1.6h-1zM221.6 105.5h1v1.6h-1zM221.6 113.8h1v1.6h-1zM221.6 122.1h1v1.6h-1zM221.6 130.4h1v1.6h-1zM221.6 138.7h1v1.6h-1zM221.6 147.0h1v1.6h-1zM221.6 155.3h1v1.6h-1zM221.6 163.6h1v1.6h-1zM221.6 171.9h1v1.6h-1zM221.6 180.2h1v1.6h-1zM221.6 188.5h1v1.6h-1zM221.6 196.8h1v1.6h-1zM221.6 205.1h1v1.6h-1zM221.6 213.4h1v1.6h-1zM221.6 221.7h1v1.6h-1zM221.6 230.0h1v1.6h-1zM221.6 238.3h1v1.6h-1zM221.6 246.6h1v1.6h-1zM221.6 254.9h1v1.6h-1zM221.6 263.2h1v1.6h-1zM221.6 271.5h1v1.6h-1zM221.6 279.8h1v1.6h-1zM221.6 288.1h1v1.6h-1zM221.6 296.4h1v1.6h-1zM221.6 304.7h1v1.6h-1zM221.6 313.0h1v1.6h-1zM221.6 321.3h1v1.6h-1zM221.6 329.6h1v1.6h-1zM221.6 337.9h1v1.6h-1zM221.6 346.2h1v1.6h-1zM221.6 354.5h1v1.6h-1zM221.6 362.8h1v1.6h-1zM221.6 371.1h1v1.6h-1zM221.6 379.4h1v1.6h-1zM221.6 387.7h1v1.6h-1zM221.6 396.0h1v1.6h-1zM221.6 404.3h1v1.6h-1zM221.6 412.6h1v1.6h-1zM221.6 420.9h1v1.6h-1zM221.6 429.2h1v1.6h-1zM221.6 437.5h1v1.6h-1zM221.6 445.8h1v1.6h-1zM221.6 454.1h1v1.6h-1zM221.6 462.4h1v1.6h-1zM229.9 5.9h1v1.6h-1zM229.9 14.2h1v1.6h-1zM229.9 22.5h1v1.6h-1zM229.9 30.8h1v1.6h-1zM229.9 39.1h1v1.6h-1zM229.9 47.4h1v1.6h-1zM229.9 55.7h1v1.6h-1zM229.9 64.0h1v1.6h-1zM229.9 72.3h1v1.6h-1zM229.9 80.6h1v1.6h-1zM229.9 88.9h1v1.6h-1zM229.9 97.2h1v1.6h-1zM229.9 105.5h1v1.6h-1zM229.9 113.8h1v1.6h-1zM229.9 122.1h1v1.6h-1zM229.9 130.4h1v1.6h-1zM229.9 138.7h1v1.6h-1zM229.9 147.0h1v1.6h-1zM229.9 155.3h1v1.6h-1zM229.9 163.6h1v1.6h-1zM229.9 171.9h1v1.6h-1zM229.9 180.2h1v1.6h-1zM229.9 188.5h1v1.6h-1zM229.9 196.8h1v1.6h-1zM229.9 205.1h1v1.6h-1zM229.9 213.4h1v1.6h-1zM229.9 221.7h1v1.6h-1zM229.9 230.0h1v1.6h-1zM229.9 238.3h1v1.6h-1zM229.9 246.6h1v1.6h-1zM229.9 254.9h1v1.6h-1zM229.9 263.2h1v1.6h-1zM229.9 271.5h1v1.6h-1zM229.9 279.8h1v1.6h-1zM229.9 288.1h1v1.6h-1zM229.9 296.4h1v1.6h-1zM229.9 304.7h1v1.6h-1zM229.9 313.0h1v1.6h-1zM229.9 321.3h1v1.6h-1zM229.9 329.6h1v1.6h-1zM229.9 337.9h1v1.6h-1zM229.9 346.2h1v1.6h-1zM229.9 354.5h1v1.6h-1zM229.9 362.8h1v1.6h-1zM229.9 371.1h1v1.6h-1zM229.9 379.4h1v1.6h-1zM229.9 387.7h1v1.6h-1zM229.9 396.0h1v1.6h-1zM229.9 404.3h1v1.6h-1zM229.9 412.6h1v1.6h-1zM229.9 420.9h1v1.6h-1zM229.9 429.2h1v1.6h-1zM229.9 437.5h1v1.6h-1zM229.9 445.8h1v1.6h-1zM229.9 454.1h1v1.6h-1zM229.9 462.4h1v1.6h-1zM238.2 5.9h1v1.6h-1zM238.2 14.2h1v1.6h-1zM238.2 22.5h1v1.6h-1zM238.2 30.8h1v1.6h-1zM238.2 39.1h1v1.6h-1zM238.2 47.4h1v1.6h-1zM238.2 55.7h1v1.6h-1zM238.2 64.0h1v1.6h-1zM238.2 72.3h1v1.6h-1zM238.2 80.6h1v1.6h-1zM238.2 88.9h1v1.6h-1zM238.2 97.2h1v1.6h-1zM238.2 105.5h1v1.6h-1zM238.2 113.8h1v1.6h-1zM238.2 122.1h1v1.6h-1zM238.2 130.4h1v1.6h-1zM238.2 138.7h1v1.6h-1zM238.2 147.0h1v1.6h-1zM238.2 155.3h1v1.6h-1zM238.2 163.6h1v1.6h-1zM238.2 171.9h1v1.6h-1zM238.2 180.2h1v1.6h-1zM238.2 188.5h1v1.6h-1zM238.2 196.8h1v1.6h-1zM238.2 205.1h1v1.6h-1zM238.2 213.4h1v1.6h-1zM238.2 221.7h1v1.6h-1zM238.2 230.0h1v1.6h-1zM238.2 238.3h1v1.6h-1zM238.2 246.6h1v1.6h-1zM238.2 254.9h1v1.6h-1zM238.2 263.2h1v1.6h-1zM238.2 271.5h1v1.6h-1zM238.2 279.8h1v1.6h-1zM238.2 288.1h1v1.6h-1zM238.2 296.4h1v1.6h-1zM238.2 304.7h1v1.6h-1zM238.2 313.0h1v1.6h-1zM238.2 321.3h1v1.6h-1zM238.2 329.6h1v1.6h-1zM238.2 337.9h1v1.6h-1zM238.2 346.2h1v1.6h-1zM238.2 354.5h1v1.6h-1zM238.2 362.8h1v1.6h-1zM238.2 371.1h1v1.6h-1zM238.2 379.4h1v1.6h-1zM238.2 387.7h1v1.6h-1zM238.2 396.0h1v1.6h-1zM238.2 404.3h1v1.6h-1zM238.2 412.6h1v1.6h-1zM238.2 420.9h1v1.6h-1zM238.2 429.2h1v1.6h-1zM238.2 437.5h1v1.6h-1zM238.2 445.8h1v1.6h-1zM238.2 454.1h1v1.6h-1zM238.2 462.4h1v1.6h-1zM246.5 5.9h1v1.6h-1zM246.5 14.2h1v1.6h-1zM246.5 22.5h1v1.6h-1zM246.5 30.8h1v1.6h-1zM246.5 39.1h1v1.6h-1zM246.5 47.4h1v1.6h-1zM246.5 55.7h1v1.6h-1zM246.5 64.0h1v1.6h-1zM246.5 72.3h1v1.6h-1zM246.5 80.6h1v1.6h-1zM246.5 88.9h1v1.6h-1zM246.5 97.2h1v1.6h-1zM246.5 105.5h1v1.6h-1zM246.5 113.8h1v1.6h-1zM246.5 122.1h1v1.6h-1zM246.5 130.4h1v1.6h-1zM246.5 138.7h1v1.6h-1zM246.5 147.0h1v1.6h-1zM246.5 155.3h1v1.6h-1zM246.5 163.6h1v1.6h-1zM246.5 171.9h1v1.6h-1zM246.5 180.2h1v1.6h-1zM246.5 188.5h1v1.6h-1zM246.5 196.8h1v1.6h-1zM246.5 205.1h1v1.6h-1zM246.5 213.4h1v1.6h-1zM246.5 221.7h1v1.6h-1zM246.5 230.0h1v1.6h-1zM246.5 238.3h1v1.6h-1zM246.5 246.6h1v1.6h-1zM246.5 254.9h1v1.6h-1zM246.5 263.2h1v1.6h-1zM246.5 271.5h1v1.6h-1zM246.5 279.8h1v1.6h-1zM246.5 288.1h1v1.6h-1zM246.5 296.4h1v1.6h-1zM246.5 304.7h1v1.6h-1zM246.5 313.0h1v1.6h-1zM246.5 321.3h1v1.6h-1zM246.5 329.6h1v1.6h-1zM246.5 337.9h1v1.6h-1zM246.5 346.2h1v1.6h-1zM246.5 354.5h1v1.6h-1zM246.5 362.8h1v1.6h-1zM246.5 371.1h1v1.6h-1zM246.5 379.4h1v1.6h-1zM246.5 387.7h1v1.6h-1zM246.5 396.0h1v1.6h-1zM246.5 404.3h1v1.6h-1zM246.5 412.6h1v1.6h-1zM246.5 420.9h1v1.6h-1zM246.5 429.2h1v1.6h-1zM246.5 437.5h1v1.6h-1zM246.5 445.8h1v1.6h-1zM246.5 454.1h1v1.6h-1zM246.5 462.4h1v1.6h-1zM254.8 5.9h1v1.6h-1zM254.8 14.2h1v1.6h-1zM254.8 22.5h1v1.6h-1zM254.8 30.8h1v1.6h-1zM254.8 39.1h1v1.6h-1zM254.8 47.4h1v1.6h-1zM254.8 55.7h1v1.6h-1zM254.8 64.0h1v1.6h-1zM254.8 72.3h1v1.6h-1zM254.8 80.6h1v1.6h-1zM254.8 88.9h1v1.6h-1zM254.8 97.2h1v1.6h-1zM254.8 105.5h1v1.6h-1zM254.8 113.8h1v1.6h-1zM254.8 122.1h1v1.6h-1zM254.8 130.4h1v1.6h-1zM254.8 138.7h1v1.6h-1zM254.8 147.0h1v1.6h-1zM254.8 155.3h1v1.6h-1zM254.8 163.6h1v1.6h-1zM254.8 171.9h1v1.6h-1zM254.8 180.2h1v1.6h-1zM254.8 188.5h1v1.6h-1zM254.8 196.8h1v1.6h-1zM254.8 205.1h1v1.6h-1zM254.8 213.4h1v1.6h-1zM254.8 221.7h1v1.6h-1zM254.8 230.0h1v1.6h-1zM254.8 238.3h1v1.6h-1zM254.8 246.6h1v1.6h-1zM254.8 254.9h1v1.6h-1zM254.8 263.2h1v1.6h-1zM254.8 271.5h1v1.6h-1zM254.8 279.8h1v1.6h-1zM254.8 288.1h1v1.6h-1zM254.8 296.4h1v1.6h-1zM254.8 304.7h1v1.6h-1zM254.8 313.0h1v1.6h-1zM254.8 321.3h1v1.6h-1zM254.8 329.6h1v1.6h-1zM254.8 337.9h1v1.6h-1zM254.8 346.2h1v1.6h-1zM254.8 354.5h1v1.6h-1zM254.8 362.8h1v1.6h-1zM254.8 371.1h1v1.6h-1zM254.8 379.4h1v1.6h-1zM254.8 387.7h1v1.6h-1zM254.8 396.0h1v1.6h-1zM254.8 404.3h1v1.6h-1zM254.8 412.6h1v1.6h-1zM254.8 420.9h1v1.6h-1zM254.8 429.2h1v1.6h-1zM254.8 437.5h1v1.6h-1zM254.8 445.8h1v1.6h-1zM254.8 454.1h1v1.6h-1zM254.8 462.4h1v1.6h-1zM263.1 5.9h1v1.6h-1zM263.1 14.2h1v1.6h-1zM263.1 22.5h1v1.6h-1zM263.1 30.8h1v1.6h-1zM263.1 39.1h1v1.6h-1zM263.1 47.4h1v1.6h-1zM263.1 55.7h1v1.6h-1zM263.1 64.0h1v1.6h-1zM263.1 72.3h1v1.6h-1zM263.1 80.6h1v1.6h-1zM263.1 88.9h1v1.6h-1zM263.1 97.2h1v1.6h-1zM263.1 105.5h1v1.6h-1zM263.1 113.8h1v1.6h-1zM263.1 122.1h1v1.6h-1zM263.1 130.4h1v1.6h-1zM263.1 138.7h1v1.6h-1zM263.1 147.0h1v1.6h-1zM263.1 155.3h1v1.6h-1zM263.1 163.6h1v1.6h-1zM263.1 171.9h1v1.6h-1zM263.1 180.2h1v1.6h-1zM263.1 188.5h1v1.6h-1zM263.1 196.8h1v1.6h-1zM263.1 205.1h1v1.6h-1zM263.1 213.4h1v1.6h-1zM263.1 221.7h1v1.6h-1zM263.1 230.0h1v1.6h-1zM263.1 238.3h1v1.6h-1zM263.1 246.6h1v1.6h-1zM263.1 254.9h1v1.6h-1zM263.1 263.2h1v1.6h-1zM263.1 271.5h1v1.6h-1zM263.1 279.8h1v1.6h-1zM263.1 288.1h1v1.6h-1zM263.1 296.4h1v1.6h-1zM263.1 304.7h1v1.6h-1zM263.1 313.0h1v1.6h-1zM263.1 321.3h1v1.6h-1zM263.1 329.6h1v1.6h-1zM263.1 337.9h1v1.6h-1zM263.1 346.2h1v1.6h-1zM263.1 354.5h1v1.6h-1zM263.1 362.8h1v1.6h-1zM263.1 371.1h1v1.6h-1zM263.1 379.4h1v1.6h-1zM263.1 387.7h1v1.6h-1zM263.1 396.0h1v1.6h-1zM263.1 404.3h1v1.6h-1zM263.1 412.6h1v1.6h-1zM263.1 420.9h1v1.6h-1zM263.1 429.2h1v1.6h-1zM263.1 437.5h1v1.6h-1zM263.1 445.8h1v1.6h-1zM263.1 454.1h1v1.6h-1zM263.1 462.4h1v1.6h-1zM271.4 5.9h1v1.6h-1zM271.4 14.2h1v1.6h-1zM271.4 22.5h1v1.6h-1zM271.4 30.8h1v1.6h-1zM271.4 39.1h1v1.6h-1zM271.4 47.4h1v1.6h-1zM271.4 55.7h1v1.6h-1zM271.4 64.0h1v1.6h-1zM271.4 72.3h1v1.6h-1zM271.4 80.6h1v1.6h-1zM271.4 88.9h1v1.6h-1zM271.4 97.2h1v1.6h-1zM271.4 105.5h1v1.6h-1zM271.4 113.8h1v1.6h-1zM271.4 122.1h1v1.6h-1zM271.4 130.4h1v1.6h-1zM271.4 138.7h1v1.6h-1zM271.4 147.0h1v1.6h-1zM271.4 155.3h1v1.6h-1zM271.4 163.6h1v1.6h-1zM271.4 171.9h1v1.6h-1zM271.4 180.2h1v1.6h-1zM271.4 188.5h1v1.6h-1zM271.4 196.8h1v1.6h-1zM271.4 205.1h1v1.6h-1zM271.4 213.4h1v1.6h-1zM271.4 221.7h1v1.6h-1zM271.4 230.0h1v1.6h-1zM271.4 238.3h1v1.6h-1zM271.4 246.6h1v1.6h-1zM271.4 254.9h1v1.6h-1zM271.4 263.2h1v1.6h-1zM271.4 271.5h1v1.6h-1zM271.4 279.8h1v1.6h-1zM271.4 288.1h1v1.6h-1zM271.4 296.4h1v1.6h-1zM271.4 304.7h1v1.6h-1zM271.4 313.0h1v1.6h-1zM271.4 321.3h1v1.6h-1zM271.4 329.6h1v1.6h-1zM271.4 337.9h1v1.6h-1zM271.4 346.2h1v1.6h-1zM271.4 354.5h1v1.6h-1zM271.4 362.8h1v1.6h-1zM271.4 371.1h1v1.6h-1zM271.4 379.4h1v1.6h-1zM271.4 387.7h1v1.6h-1zM271.4 396.0h1v1.6h-1zM271.4 404.3h1v1.6h-1zM271.4 412.6h1v1.6h-1zM271.4 420.9h1v1.6h-1zM271.4 429.2h1v1.6h-1zM271.4 437.5h1v1.6h-1zM271.4 445.8h1v1.6h-1zM271.4 454.1h1v1.6h-1zM271.4 462.4h1v1.6h-1zM279.7 5.9h1v1.6h-1zM279.7 14.2h1v1.6h-1zM279.7 22.5h1v1.6h-1zM279.7 30.8h1v1.6h-1zM279.7 39.1h1v1.6h-1zM279.7 47.4h1v1.6h-1zM279.7 55.7h1v1.6h-1zM279.7 64.0h1v1.6h-1zM279.7 72.3h1v1.6h-1zM279.7 80.6h1v1.6h-1zM279.7 88.9h1v1.6h-1zM279.7 97.2h1v1.6h-1zM279.7 105.5h1v1.6h-1zM279.7 113.8h1v1.6h-1zM279.7 122.1h1v1.6h-1zM279.7 130.4h1v1.6h-1zM279.7 138.7h1v1.6h-1zM279.7 147.0h1v1.6h-1zM279.7 155.3h1v1.6h-1zM279.7 163.6h1v1.6h-1zM279.7 171.9h1v1.6h-1zM279.7 180.2h1v1.6h-1zM279.7 188.5h1v1.6h-1zM279.7 196.8h1v1.6h-1zM279.7 205.1h1v1.6h-1zM279.7 213.4h1v1.6h-1zM279.7 221.7h1v1.6h-1zM279.7 230.0h1v1.6h-1zM279.7 238.3h1v1.6h-1zM279.7 246.6h1v1.6h-1zM279.7 254.9h1v1.6h-1zM279.7 263.2h1v1.6h-1zM279.7 271.5h1v1.6h-1zM279.7 279.8h1v1.6h-1zM279.7 288.1h1v1.6h-1zM279.7 296.4h1v1.6h-1zM279.7 304.7h1v1.6h-1zM279.7 313.0h1v1.6h-1zM279.7 321.3h1v1.6h-1zM279.7 329.6h1v1.6h-1zM279.7 337.9h1v1.6h-1zM279.7 346.2h1v1.6h-1zM279.7 354.5h1v1.6h-1zM279.7 362.8h1v1.6h-1zM279.7 371.1h1v1.6h-1zM279.7 379.4h1v1.6h-1zM279.7 387.7h1v1.6h-1zM279.7 396.0h1v1.6h-1zM279.7 404.3h1v1.6h-1zM279.7 412.6h1v1.6h-1zM279.7 420.9h1v1.6h-1zM279.7 429.2h1v1.6h-1zM279.7 437.5h1v1.6h-1zM279.7 445.8h1v1.6h-1zM279.7 454.1h1v1.6h-1zM279.7 462.4h1v1.6h-1zM288.0 5.9h1v1.6h-1zM288.0 14.2h1v1.6h-1zM288.0 22.5h1v1.6h-1zM288.0 30.8h1v1.6h-1zM288.0 39.1h1v1.6h-1zM288.0 47.4h1v1.6h-1zM288.0 55.7h1v1.6h-1zM288.0 64.0h1v1.6h-1zM288.0 72.3h1v1.6h-1zM288.0 80.6h1v1.6h-1zM288.0 88.9h1v1.6h-1zM288.0 97.2h1v1.6h-1zM288.0 105.5h1v1.6h-1zM288.0 113.8h1v1.6h-1zM288.0 122.1h1v1.6h-1zM288.0 130.4h1v1.6h-1zM288.0 138.7h1v1.6h-1zM288.0 147.0h1v1.6h-1zM288.0 155.3h1v1.6h-1zM288.0 163.6h1v1.6h-1zM288.0 171.9h1v1.6h-1zM288.0 180.2h1v1.6h-1zM288.0 188.5h1v1.6h-1zM288.0 196.8h1v1.6h-1zM288.0 205.1h1v1.6h-1zM288.0 213.4h1v1.6h-1zM288.0 221.7h1v1.6h-1zM288.0 230.0h1v1.6h-1zM288.0 238.3h1v1.6h-1zM288.0 246.6h1v1.6h-1zM288.0 254.9h1v1.6h-1zM288.0 263.2h1v1.6h-1zM288.0 271.5h1v1.6h-1zM288.0 279.8h1v1.6h-1zM288.0 288.1h1v1.6h-1zM288.0 296.4h1v1.6h-1zM288.0 304.7h1v1.6h-1zM288.0 313.0h1v1.6h-1zM288.0 321.3h1v1.6h-1zM288.0 329.6h1v1.6h-1zM288.0 337.9h1v1.6h-1zM288.0 346.2h1v1.6h-1zM288.0 354.5h1v1.6h-1zM288.0 362.8h1v1.6h-1zM288.0 371.1h1v1.6h-1zM288.0 379.4h1v1.6h-1zM288.0 387.7h1v1.6h-1zM288.0 396.0h1v1.6h-1zM288.0 404.3h1v1.6h-1zM288.0 412.6h1v1.6h-1zM288.0 420.9h1v1.6h-1zM288.0 429.2h1v1.6h-1zM288.0 437.5h1v1.6h-1zM288.0 445.8h1v1.6h-1zM288.0 454.1h1v1.6h-1zM288.0 462.4h1v1.6h-1zM296.3 5.9h1v1.6h-1zM296.3 14.2h1v1.6h-1zM296.3 22.5h1v1.6h-1zM296.3 30.8h1v1.6h-1zM296.3 39.1h1v1.6h-1zM296.3 47.4h1v1.6h-1zM296.3 55.7h1v1.6h-1zM296.3 64.0h1v1.6h-1zM296.3 72.3h1v1.6h-1zM296.3 80.6h1v1.6h-1zM296.3 88.9h1v1.6h-1zM296.3 97.2h1v1.6h-1zM296.3 105.5h1v1.6h-1zM296.3 113.8h1v1.6h-1zM296.3 122.1h1v1.6h-1zM296.3 130.4h1v1.6h-1zM296.3 138.7h1v1.6h-1zM296.3 147.0h1v1.6h-1zM296.3 155.3h1v1.6h-1zM296.3 163.6h1v1.6h-1zM296.3 171.9h1v1.6h-1zM296.3 180.2h1v1.6h-1zM296.3 188.5h1v1.6h-1zM296.3 196.8h1v1.6h-1zM296.3 205.1h1v1.6h-1zM296.3 213.4h1v1.6h-1zM296.3 221.7h1v1.6h-1zM296.3 230.0h1v1.6h-1zM296.3 238.3h1v1.6h-1zM296.3 246.6h1v1.6h-1zM296.3 254.9h1v1.6h-1zM296.3 263.2h1v1.6h-1zM296.3 271.5h1v1.6h-1zM296.3 279.8h1v1.6h-1zM296.3 288.1h1v1.6h-1zM296.3 296.4h1v1.6h-1zM296.3 304.7h1v1.6h-1zM296.3 313.0h1v1.6h-1zM296.3 321.3h1v1.6h-1zM296.3 329.6h1v1.6h-1zM296.3 337.9h1v1.6h-1zM296.3 346.2h1v1.6h-1zM296.3 354.5h1v1.6h-1zM296.3 362.8h1v1.6h-1zM296.3 371.1h1v1.6h-1zM296.3 379.4h1v1.6h-1zM296.3 387.7h1v1.6h-1zM296.3 396.0h1v1.6h-1zM296.3 404.3h1v1.6h-1zM296.3 412.6h1v1.6h-1zM296.3 420.9h1v1.6h-1zM296.3 429.2h1v1.6h-1zM296.3 437.5h1v1.6h-1zM296.3 445.8h1v1.6h-1zM296.3 454.1h1v1.6h-1zM296.3 462.4h1v1.6h-1zM304.6 5.9h1v1.6h-1zM304.6 14.2h1v1.6h-1zM304.6 22.5h1v1.6h-1zM304.6 30.8h1v1.6h-1zM304.6 39.1h1v1.6h-1zM304.6 47.4h1v1.6h-1zM304.6 55.7h1v1.6h-1zM304.6 64.0h1v1.6h-1zM304.6 72.3h1v1.6h-1zM304.6 80.6h1v1.6h-1zM304.6 88.9h1v1.6h-1zM304.6 97.2h1v1.6h-1zM304.6 105.5h1v1.6h-1zM304.6 113.8h1v1.6h-1zM304.6 122.1h1v1.6h-1zM304.6 130.4h1v1.6h-1zM304.6 138.7h1v1.6h-1zM304.6 147.0h1v1.6h-1zM304.6 155.3h1v1.6h-1zM304.6 163.6h1v1.6h-1zM304.6 171.9h1v1.6h-1zM304.6 180.2h1v1.6h-1zM304.6 188.5h1v1.6h-1zM304.6 196.8h1v1.6h-1zM304.6 205.1h1v1.6h-1zM304.6 213.4h1v1.6h-1zM304.6 221.7h1v1.6h-1zM304.6 230.0h1v1.6h-1zM304.6 238.3h1v1.6h-1zM304.6 246.6h1v1.6h-1zM304.6 254.9h1v1.6h-1zM304.6 263.2h1v1.6h-1zM304.6 271.5h1v1.6h-1zM304.6 279.8h1v1.6h-1zM304.6 288.1h1v1.6h-1zM304.6 296.4h1v1.6h-1zM304.6 304.7h1v1.6h-1zM304.6 313.0h1v1.6h-1zM304.6 321.3h1v1.6h-1zM304.6 329.6h1v1.6h-1zM304.6 337.9h1v1.6h-1zM304.6 346.2h1v1.6h-1zM304.6 354.5h1v1.6h-1zM304.6 362.8h1v1.6h-1zM304.6 371.1h1v1.6h-1zM304.6 379.4h1v1.6h-1zM304.6 387.7h1v1.6h-1zM304.6 396.0h1v1.6h-1zM304.6 404.3h1v1.6h-1zM304.6 412.6h1v1.6h-1zM304.6 420.9h1v1.6h-1zM304.6 429.2h1v1.6h-1zM304.6 437.5h1v1.6h-1zM304.6 445.8h1v1.6h-1zM304.6 454.1h1v1.6h-1zM304.6 462.4h1v1.6h-1zM312.9 5.9h1v1.6h-1zM312.9 14.2h1v1.6h-1zM312.9 22.5h1v1.6h-1zM312.9 30.8h1v1.6h-1zM312.9 39.1h1v1.6h-1zM312.9 47.4h1v1.6h-1zM312.9 55.7h1v1.6h-1zM312.9 64.0h1v1.6h-1zM312.9 72.3h1v1.6h-1zM312.9 80.6h1v1.6h-1zM312.9 88.9h1v1.6h-1zM312.9 97.2h1v1.6h-1zM312.9 105.5h1v1.6h-1zM312.9 113.8h1v1.6h-1zM312.9 122.1h1v1.6h-1zM312.9 130.4h1v1.6h-1zM312.9 138.7h1v1.6h-1zM312.9 147.0h1v1.6h-1zM312.9 155.3h1v1.6h-1zM312.9 163.6h1v1.6h-1zM312.9 171.9h1v1.6h-1zM312.9 180.2h1v1.6h-1zM312.9 188.5h1v1.6h-1zM312.9 196.8h1v1.6h-1zM312.9 205.1h1v1.6h-1zM312.9 213.4h1v1.6h-1zM312.9 221.7h1v1.6h-1zM312.9 230.0h1v1.6h-1zM312.9 238.3h1v1.6h-1zM312.9 246.6h1v1.6h-1zM312.9 254.9h1v1.6h-1zM312.9 263.2h1v1.6h-1zM312.9 271.5h1v1.6h-1zM312.9 279.8h1v1.6h-1zM312.9 288.1h1v1.6h-1zM312.9 296.4h1v1.6h-1zM312.9 304.7h1v1.6h-1zM312.9 313.0h1v1.6h-1zM312.9 321.3h1v1.6h-1zM312.9 329.6h1v1.6h-1zM312.9 337.9h1v1.6h-1zM312.9 346.2h1v1.6h-1zM312.9 354.5h1v1.6h-1zM312.9 362.8h1v1.6h-1zM312.9 371.1h1v1.6h-1zM312.9 379.4h1v1.6h-1zM312.9 387.7h1v1.6h-1zM312.9 396.0h1v1.6h-1zM312.9 404.3h1v1.6h-1zM312.9 412.6h1v1.6h-1zM312.9 420.9h1v1.6h-1zM312.9 429.2h1v1.6h-1zM312.9 437.5h1v1.6h-1zM312.9 445.8h1v1.6h-1zM312.9 454.1h1v1.6h-1zM312.9 462.4h1v1.6h-1zM321.1 5.9h1v1.6h-1zM321.1 14.2h1v1.6h-1zM321.1 22.5h1v1.6h-1zM321.1 30.8h1v1.6h-1zM321.1 39.1h1v1.6h-1zM321.1 47.4h1v1.6h-1zM321.1 55.7h1v1.6h-1zM321.1 64.0h1v1.6h-1zM321.1 72.3h1v1.6h-1zM321.1 80.6h1v1.6h-1zM321.1 88.9h1v1.6h-1zM321.1 97.2h1v1.6h-1zM321.1 105.5h1v1.6h-1zM321.1 113.8h1v1.6h-1zM321.1 122.1h1v1.6h-1zM321.1 130.4h1v1.6h-1zM321.1 138.7h1v1.6h-1zM321.1 147.0h1v1.6h-1zM321.1 155.3h1v1.6h-1zM321.1 163.6h1v1.6h-1zM321.1 171.9h1v1.6h-1zM321.1 180.2h1v1.6h-1zM321.1 188.5h1v1.6h-1zM321.1 196.8h1v1.6h-1zM321.1 205.1h1v1.6h-1zM321.1 213.4h1v1.6h-1zM321.1 221.7h1v1.6h-1zM321.1 230.0h1v1.6h-1zM321.1 238.3h1v1.6h-1zM321.1 246.6h1v1.6h-1zM321.1 254.9h1v1.6h-1zM321.1 263.2h1v1.6h-1zM321.1 271.5h1v1.6h-1zM321.1 279.8h1v1.6h-1zM321.1 288.1h1v1.6h-1zM321.1 296.4h1v1.6h-1zM321.1 304.7h1v1.6h-1zM321.1 313.0h1v1.6h-1zM321.1 321.3h1v1.6h-1zM321.1 329.6h1v1.6h-1zM321.1 337.9h1v1.6h-1zM321.1 346.2h1v1.6h-1zM321.1 354.5h1v1.6h-1zM321.1 362.8h1v1.6h-1zM321.1 371.1h1v1.6h-1zM321.1 379.4h1v1.6h-1zM321.1 387.7h1v1.6h-1zM321.1 396.0h1v1.6h-1zM321.1 404.3h1v1.6h-1zM321.1 412.6h1v1.6h-1zM321.1 420.9h1v1.6h-1zM321.1 429.2h1v1.6h-1zM321.1 437.5h1v1.6h-1zM321.1 445.8h1v1.6h-1zM321.1 454.1h1v1.6h-1zM321.1 462.4h1v1.6h-1zM329.4 5.9h1v1.6h-1zM329.4 14.2h1v1.6h-1zM329.4 22.5h1v1.6h-1zM329.4 30.8h1v1.6h-1zM329.4 39.1h1v1.6h-1zM329.4 47.4h1v1.6h-1zM329.4 55.7h1v1.6h-1zM329.4 64.0h1v1.6h-1zM329.4 72.3h1v1.6h-1zM329.4 80.6h1v1.6h-1zM329.4 88.9h1v1.6h-1zM329.4 97.2h1v1.6h-1zM329.4 105.5h1v1.6h-1zM329.4 113.8h1v1.6h-1zM329.4 122.1h1v1.6h-1zM329.4 130.4h1v1.6h-1zM329.4 138.7h1v1.6h-1zM329.4 147.0h1v1.6h-1zM329.4 155.3h1v1.6h-1zM329.4 163.6h1v1.6h-1zM329.4 171.9h1v1.6h-1zM329.4 180.2h1v1.6h-1zM329.4 188.5h1v1.6h-1zM329.4 196.8h1v1.6h-1zM329.4 205.1h1v1.6h-1zM329.4 213.4h1v1.6h-1zM329.4 221.7h1v1.6h-1zM329.4 230.0h1v1.6h-1zM329.4 238.3h1v1.6h-1zM329.4 246.6h1v1.6h-1zM329.4 254.9h1v1.6h-1zM329.4 263.2h1v1.6h-1zM329.4 271.5h1v1.6h-1zM329.4 279.8h1v1.6h-1zM329.4 288.1h1v1.6h-1zM329.4 296.4h1v1.6h-1zM329.4 304.7h1v1.6h-1zM329.4 313.0h1v1.6h-1zM329.4 321.3h1v1.6h-1zM329.4 329.6h1v1.6h-1zM329.4 337.9h1v1.6h-1zM329.4 346.2h1v1.6h-1zM329.4 354.5h1v1.6h-1zM329.4 362.8h1v1.6h-1zM329.4 371.1h1v1.6h-1zM329.4 379.4h1v1.6h-1zM329.4 387.7h1v1.6h-1zM329.4 396.0h1v1.6h-1zM329.4 404.3h1v1.6h-1zM329.4 412.6h1v1.6h-1zM329.4 420.9h1v1.6h-1zM329.4 429.2h1v1.6h-1zM329.4 437.5h1v1.6h-1zM329.4 445.8h1v1.6h-1zM329.4 454.1h1v1.6h-1zM329.4 462.4h1v1.6h-1zM337.7 5.9h1v1.6h-1zM337.7 14.2h1v1.6h-1zM337.7 22.5h1v1.6h-1zM337.7 30.8h1v1.6h-1zM337.7 39.1h1v1.6h-1zM337.7 47.4h1v1.6h-1zM337.7 55.7h1v1.6h-1zM337.7 64.0h1v1.6h-1zM337.7 72.3h1v1.6h-1zM337.7 80.6h1v1.6h-1zM337.7 88.9h1v1.6h-1zM337.7 97.2h1v1.6h-1zM337.7 105.5h1v1.6h-1zM337.7 113.8h1v1.6h-1zM337.7 122.1h1v1.6h-1zM337.7 130.4h1v1.6h-1zM337.7 138.7h1v1.6h-1zM337.7 147.0h1v1.6h-1zM337.7 155.3h1v1.6h-1zM337.7 163.6h1v1.6h-1zM337.7 171.9h1v1.6h-1zM337.7 180.2h1v1.6h-1zM337.7 188.5h1v1.6h-1zM337.7 196.8h1v1.6h-1zM337.7 205.1h1v1.6h-1zM337.7 213.4h1v1.6h-1zM337.7 221.7h1v1.6h-1zM337.7 230.0h1v1.6h-1zM337.7 238.3h1v1.6h-1zM337.7 246.6h1v1.6h-1zM337.7 254.9h1v1.6h-1zM337.7 263.2h1v1.6h-1zM337.7 271.5h1v1.6h-1zM337.7 279.8h1v1.6h-1zM337.7 288.1h1v1.6h-1zM337.7 296.4h1v1.6h-1zM337.7 304.7h1v1.6h-1zM337.7 313.0h1v1.6h-1zM337.7 321.3h1v1.6h-1zM337.7 329.6h1v1.6h-1zM337.7 337.9h1v1.6h-1zM337.7 346.2h1v1.6h-1zM337.7 354.5h1v1.6h-1zM337.7 362.8h1v1.6h-1zM337.7 371.1h1v1.6h-1zM337.7 379.4h1v1.6h-1zM337.7 387.7h1v1.6h-1zM337.7 396.0h1v1.6h-1zM337.7 404.3h1v1.6h-1zM337.7 412.6h1v1.6h-1zM337.7 420.9h1v1.6h-1zM337.7 429.2h1v1.6h-1zM337.7 437.5h1v1.6h-1zM337.7 445.8h1v1.6h-1zM337.7 454.1h1v1.6h-1zM337.7 462.4h1v1.6h-1zM346.0 5.9h1v1.6h-1zM346.0 14.2h1v1.6h-1zM346.0 22.5h1v1.6h-1zM346.0 30.8h1v1.6h-1zM346.0 39.1h1v1.6h-1zM346.0 47.4h1v1.6h-1zM346.0 55.7h1v1.6h-1zM346.0 64.0h1v1.6h-1zM346.0 72.3h1v1.6h-1zM346.0 80.6h1v1.6h-1zM346.0 88.9h1v1.6h-1zM346.0 97.2h1v1.6h-1zM346.0 105.5h1v1.6h-1zM346.0 113.8h1v1.6h-1zM346.0 122.1h1v1.6h-1zM346.0 130.4h1v1.6h-1zM346.0 138.7h1v1.6h-1zM346.0 147.0h1v1.6h-1zM346.0 155.3h1v1.6h-1zM346.0 163.6h1v1.6h-1zM346.0 171.9h1v1.6h-1zM346.0 180.2h1v1.6h-1zM346.0 188.5h1v1.6h-1zM346.0 196.8h1v1.6h-1zM346.0 205.1h1v1.6h-1zM346.0 213.4h1v1.6h-1zM346.0 221.7h1v1.6h-1zM346.0 230.0h1v1.6h-1zM346.0 238.3h1v1.6h-1zM346.0 246.6h1v1.6h-1zM346.0 254.9h1v1.6h-1zM346.0 263.2h1v1.6h-1zM346.0 271.5h1v1.6h-1zM346.0 279.8h1v1.6h-1zM346.0 288.1h1v1.6h-1zM346.0 296.4h1v1.6h-1zM346.0 304.7h1v1.6h-1zM346.0 313.0h1v1.6h-1zM346.0 321.3h1v1.6h-1zM346.0 329.6h1v1.6h-1zM346.0 337.9h1v1.6h-1zM346.0 346.2h1v1.6h-1zM346.0 354.5h1v1.6h-1zM346.0 362.8h1v1.6h-1zM346.0 371.1h1v1.6h-1zM346.0 379.4h1v1.6h-1zM346.0 387.7h1v1.6h-1zM346.0 396.0h1v1.6h-1zM346.0 404.3h1v1.6h-1zM346.0 412.6h1v1.6h-1zM346.0 420.9h1v1.6h-1zM346.0 429.2h1v1.6h-1zM346.0 437.5h1v1.6h-1zM346.0 445.8h1v1.6h-1zM346.0 454.1h1v1.6h-1zM346.0 462.4h1v1.6h-1zM354.3 5.9h1v1.6h-1zM354.3 14.2h1v1.6h-1zM354.3 22.5h1v1.6h-1zM354.3 30.8h1v1.6h-1zM354.3 39.1h1v1.6h-1zM354.3 47.4h1v1.6h-1zM354.3 55.7h1v1.6h-1zM354.3 64.0h1v1.6h-1zM354.3 72.3h1v1.6h-1zM354.3 80.6h1v1.6h-1zM354.3 88.9h1v1.6h-1zM354.3 97.2h1v1.6h-1zM354.3 105.5h1v1.6h-1zM354.3 113.8h1v1.6h-1zM354.3 122.1h1v1.6h-1zM354.3 130.4h1v1.6h-1zM354.3 138.7h1v1.6h-1zM354.3 147.0h1v1.6h-1zM354.3 155.3h1v1.6h-1zM354.3 163.6h1v1.6h-1zM354.3 171.9h1v1.6h-1zM354.3 180.2h1v1.6h-1zM354.3 188.5h1v1.6h-1zM354.3 196.8h1v1.6h-1zM354.3 205.1h1v1.6h-1zM354.3 213.4h1v1.6h-1zM354.3 221.7h1v1.6h-1zM354.3 230.0h1v1.6h-1zM354.3 238.3h1v1.6h-1zM354.3 246.6h1v1.6h-1zM354.3 254.9h1v1.6h-1zM354.3 263.2h1v1.6h-1zM354.3 271.5h1v1.6h-1zM354.3 279.8h1v1.6h-1zM354.3 288.1h1v1.6h-1zM354.3 296.4h1v1.6h-1zM354.3 304.7h1v1.6h-1zM354.3 313.0h1v1.6h-1zM354.3 321.3h1v1.6h-1zM354.3 329.6h1v1.6h-1zM354.3 337.9h1v1.6h-1zM354.3 346.2h1v1.6h-1zM354.3 354.5h1v1.6h-1zM354.3 362.8h1v1.6h-1zM354.3 371.1h1v1.6h-1zM354.3 379.4h1v1.6h-1zM354.3 387.7h1v1.6h-1zM354.3 396.0h1v1.6h-1zM354.3 404.3h1v1.6h-1zM354.3 412.6h1v1.6h-1zM354.3 420.9h1v1.6h-1zM354.3 429.2h1v1.6h-1zM354.3 437.5h1v1.6h-1zM354.3 445.8h1v1.6h-1zM354.3 454.1h1v1.6h-1zM354.3 462.4h1v1.6h-1zM362.6 5.9h1v1.6h-1zM362.6 14.2h1v1.6h-1zM362.6 22.5h1v1.6h-1zM362.6 30.8h1v1.6h-1zM362.6 39.1h1v1.6h-1zM362.6 47.4h1v1.6h-1zM362.6 55.7h1v1.6h-1zM362.6 64.0h1v1.6h-1zM362.6 72.3h1v1.6h-1zM362.6 80.6h1v1.6h-1zM362.6 88.9h1v1.6h-1zM362.6 97.2h1v1.6h-1zM362.6 105.5h1v1.6h-1zM362.6 113.8h1v1.6h-1zM362.6 122.1h1v1.6h-1zM362.6 130.4h1v1.6h-1zM362.6 138.7h1v1.6h-1zM362.6 147.0h1v1.6h-1zM362.6 155.3h1v1.6h-1zM362.6 163.6h1v1.6h-1zM362.6 171.9h1v1.6h-1zM362.6 180.2h1v1.6h-1zM362.6 188.5h1v1.6h-1zM362.6 196.8h1v1.6h-1zM362.6 205.1h1v1.6h-1zM362.6 213.4h1v1.6h-1zM362.6 221.7h1v1.6h-1zM362.6 230.0h1v1.6h-1zM362.6 238.3h1v1.6h-1zM362.6 246.6h1v1.6h-1zM362.6 254.9h1v1.6h-1zM362.6 263.2h1v1.6h-1zM362.6 271.5h1v1.6h-1zM362.6 279.8h1v1.6h-1zM362.6 288.1h1v1.6h-1zM362.6 296.4h1v1.6h-1zM362.6 304.7h1v1.6h-1zM362.6 313.0h1v1.6h-1zM362.6 321.3h1v1.6h-1zM362.6 329.6h1v1.6h-1zM362.6 337.9h1v1.6h-1zM362.6 346.2h1v1.6h-1zM362.6 354.5h1v1.6h-1zM362.6 362.8h1v1.6h-1zM362.6 371.1h1v1.6h-1zM362.6 379.4h1v1.6h-1zM362.6 387.7h1v1.6h-1zM362.6 396.0h1v1.6h-1zM362.6 404.3h1v1.6h-1zM362.6 412.6h1v1.6h-1zM362.6 420.9h1v1.6h-1zM362.6 429.2h1v1.6h-1zM362.6 437.5h1v1.6h-1zM362.6 445.8h1v1.6h-1zM362.6 454.1h1v1.6h-1zM362.6 462.4h1v1.6h-1zM370.9 5.9h1v1.6h-1zM370.9 14.2h1v1.6h-1zM370.9 22.5h1v1.6h-1zM370.9 30.8h1v1.6h-1zM370.9 39.1h1v1.6h-1zM370.9 47.4h1v1.6h-1zM370.9 55.7h1v1.6h-1zM370.9 64.0h1v1.6h-1zM370.9 72.3h1v1.6h-1zM370.9 80.6h1v1.6h-1zM370.9 88.9h1v1.6h-1zM370.9 97.2h1v1.6h-1zM370.9 105.5h1v1.6h-1zM370.9 113.8h1v1.6h-1zM370.9 122.1h1v1.6h-1zM370.9 130.4h1v1.6h-1zM370.9 138.7h1v1.6h-1zM370.9 147.0h1v1.6h-1zM370.9 155.3h1v1.6h-1zM370.9 163.6h1v1.6h-1zM370.9 171.9h1v1.6h-1zM370.9 180.2h1v1.6h-1zM370.9 188.5h1v1.6h-1zM370.9 196.8h1v1.6h-1zM370.9 205.1h1v1.6h-1zM370.9 213.4h1v1.6h-1zM370.9 221.7h1v1.6h-1zM370.9 230.0h1v1.6h-1zM370.9 238.3h1v1.6h-1zM370.9 246.6h1v1.6h-1zM370.9 254.9h1v1.6h-1zM370.9 263.2h1v1.6h-1zM370.9 271.5h1v1.6h-1zM370.9 279.8h1v1.6h-1zM370.9 288.1h1v1.6h-1zM370.9 296.4h1v1.6h-1zM370.9 304.7h1v1.6h-1zM370.9 313.0h1v1.6h-1zM370.9 321.3h1v1.6h-1zM370.9 329.6h1v1.6h-1zM370.9 337.9h1v1.6h-1zM370.9 346.2h1v1.6h-1zM370.9 354.5h1v1.6h-1zM370.9 362.8h1v1.6h-1zM370.9 371.1h1v1.6h-1zM370.9 379.4h1v1.6h-1zM370.9 387.7h1v1.6h-1zM370.9 396.0h1v1.6h-1zM370.9 404.3h1v1.6h-1zM370.9 412.6h1v1.6h-1zM370.9 420.9h1v1.6h-1zM370.9 429.2h1v1.6h-1zM370.9 437.5h1v1.6h-1zM370.9 445.8h1v1.6h-1zM370.9 454.1h1v1.6h-1zM370.9 462.4h1v1.6h-1zM379.2 5.9h1v1.6h-1zM379.2 14.2h1v1.6h-1zM379.2 22.5h1v1.6h-1zM379.2 30.8h1v1.6h-1zM379.2 39.1h1v1.6h-1zM379.2 47.4h1v1.6h-1zM379.2 55.7h1v1.6h-1zM379.2 64.0h1v1.6h-1zM379.2 72.3h1v1.6h-1zM379.2 80.6h1v1.6h-1zM379.2 88.9h1v1.6h-1zM379.2 97.2h1v1.6h-1zM379.2 105.5h1v1.6h-1zM379.2 113.8h1v1.6h-1zM379.2 122.1h1v1.6h-1zM379.2 130.4h1v1.6h-1zM379.2 138.7h1v1.6h-1zM379.2 147.0h1v1.6h-1zM379.2 155.3h1v1.6h-1zM379.2 163.6h1v1.6h-1zM379.2 171.9h1v1.6h-1zM379.2 180.2h1v1.6h-1zM379.2 188.5h1v1.6h-1zM379.2 196.8h1v1.6h-1zM379.2 205.1h1v1.6h-1zM379.2 213.4h1v1.6h-1zM379.2 221.7h1v1.6h-1zM379.2 230.0h1v1.6h-1zM379.2 238.3h1v1.6h-1zM379.2 246.6h1v1.6h-1zM379.2 254.9h1v1.6h-1zM379.2 263.2h1v1.6h-1zM379.2 271.5h1v1.6h-1zM379.2 279.8h1v1.6h-1zM379.2 288.1h1v1.6h-1zM379.2 296.4h1v1.6h-1zM379.2 304.7h1v1.6h-1zM379.2 313.0h1v1.6h-1zM379.2 321.3h1v1.6h-1zM379.2 329.6h1v1.6h-1zM379.2 337.9h1v1.6h-1zM379.2 346.2h1v1.6h-1zM379.2 354.5h1v1.6h-1zM379.2 362.8h1v1.6h-1zM379.2 371.1h1v1.6h-1zM379.2 379.4h1v1.6h-1zM379.2 387.7h1v1.6h-1zM379.2 396.0h1v1.6h-1zM379.2 404.3h1v1.6h-1zM379.2 412.6h1v1.6h-1zM379.2 420.9h1v1.6h-1zM379.2 429.2h1v1.6h-1zM379.2 437.5h1v1.6h-1zM379.2 445.8h1v1.6h-1zM379.2 454.1h1v1.6h-1zM379.2 462.4h1v1.6h-1zM387.5 5.9h1v1.6h-1zM387.5 14.2h1v1.6h-1zM387.5 22.5h1v1.6h-1zM387.5 30.8h1v1.6h-1zM387.5 39.1h1v1.6h-1zM387.5 47.4h1v1.6h-1zM387.5 55.7h1v1.6h-1zM387.5 64.0h1v1.6h-1zM387.5 72.3h1v1.6h-1zM387.5 80.6h1v1.6h-1zM387.5 88.9h1v1.6h-1zM387.5 97.2h1v1.6h-1zM387.5 105.5h1v1.6h-1zM387.5 113.8h1v1.6h-1zM387.5 122.1h1v1.6h-1zM387.5 130.4h1v1.6h-1zM387.5 138.7h1v1.6h-1zM387.5 147.0h1v1.6h-1zM387.5 155.3h1v1.6h-1zM387.5 163.6h1v1.6h-1zM387.5 171.9h1v1.6h-1zM387.5 180.2h1v1.6h-1zM387.5 188.5h1v1.6h-1zM387.5 196.8h1v1.6h-1zM387.5 205.1h1v1.6h-1zM387.5 213.4h1v1.6h-1zM387.5 221.7h1v1.6h-1zM387.5 230.0h1v1.6h-1zM387.5 238.3h1v1.6h-1zM387.5 246.6h1v1.6h-1zM387.5 254.9h1v1.6h-1zM387.5 263.2h1v1.6h-1zM387.5 271.5h1v1.6h-1zM387.5 279.8h1v1.6h-1zM387.5 288.1h1v1.6h-1zM387.5 296.4h1v1.6h-1zM387.5 304.7h1v1.6h-1zM387.5 313.0h1v1.6h-1zM387.5 321.3h1v1.6h-1zM387.5 329.6h1v1.6h-1zM387.5 337.9h1v1.6h-1zM387.5 346.2h1v1.6h-1zM387.5 354.5h1v1.6h-1zM387.5 362.8h1v1.6h-1zM387.5 371.1h1v1.6h-1zM387.5 379.4h1v1.6h-1zM387.5 387.7h1v1.6h-1zM387.5 396.0h1v1.6h-1zM387.5 404.3h1v1.6h-1zM387.5 412.6h1v1.6h-1zM387.5 420.9h1v1.6h-1zM387.5 429.2h1v1.6h-1zM387.5 437.5h1v1.6h-1zM387.5 445.8h1v1.6h-1zM387.5 454.1h1v1.6h-1zM387.5 462.4h1v1.6h-1zM395.8 5.9h1v1.6h-1zM395.8 14.2h1v1.6h-1zM395.8 22.5h1v1.6h-1zM395.8 30.8h1v1.6h-1zM395.8 39.1h1v1.6h-1zM395.8 47.4h1v1.6h-1zM395.8 55.7h1v1.6h-1zM395.8 64.0h1v1.6h-1zM395.8 72.3h1v1.6h-1zM395.8 80.6h1v1.6h-1zM395.8 88.9h1v1.6h-1zM395.8 97.2h1v1.6h-1zM395.8 105.5h1v1.6h-1zM395.8 113.8h1v1.6h-1zM395.8 122.1h1v1.6h-1zM395.8 130.4h1v1.6h-1zM395.8 138.7h1v1.6h-1zM395.8 147.0h1v1.6h-1zM395.8 155.3h1v1.6h-1zM395.8 163.6h1v1.6h-1zM395.8 171.9h1v1.6h-1zM395.8 180.2h1v1.6h-1zM395.8 188.5h1v1.6h-1zM395.8 196.8h1v1.6h-1zM395.8 205.1h1v1.6h-1zM395.8 213.4h1v1.6h-1zM395.8 221.7h1v1.6h-1zM395.8 230.0h1v1.6h-1zM395.8 238.3h1v1.6h-1zM395.8 246.6h1v1.6h-1zM395.8 254.9h1v1.6h-1zM395.8 263.2h1v1.6h-1zM395.8 271.5h1v1.6h-1zM395.8 279.8h1v1.6h-1zM395.8 288.1h1v1.6h-1zM395.8 296.4h1v1.6h-1zM395.8 304.7h1v1.6h-1zM395.8 313.0h1v1.6h-1zM395.8 321.3h1v1.6h-1zM395.8 329.6h1v1.6h-1zM395.8 337.9h1v1.6h-1zM395.8 346.2h1v1.6h-1zM395.8 354.5h1v1.6h-1zM395.8 362.8h1v1.6h-1zM395.8 371.1h1v1.6h-1zM395.8 379.4h1v1.6h-1zM395.8 387.7h1v1.6h-1zM395.8 396.0h1v1.6h-1zM395.8 404.3h1v1.6h-1zM395.8 412.6h1v1.6h-1zM395.8 420.9h1v1.6h-1zM395.8 429.2h1v1.6h-1zM395.8 437.5h1v1.6h-1zM395.8 445.8h1v1.6h-1zM395.8 454.1h1v1.6h-1zM395.8 462.4h1v1.6h-1zM404.1 5.9h1v1.6h-1zM404.1 14.2h1v1.6h-1zM404.1 22.5h1v1.6h-1zM404.1 30.8h1v1.6h-1zM404.1 39.1h1v1.6h-1zM404.1 47.4h1v1.6h-1zM404.1 55.7h1v1.6h-1zM404.1 64.0h1v1.6h-1zM404.1 72.3h1v1.6h-1zM404.1 80.6h1v1.6h-1zM404.1 88.9h1v1.6h-1zM404.1 97.2h1v1.6h-1zM404.1 105.5h1v1.6h-1zM404.1 113.8h1v1.6h-1zM404.1 122.1h1v1.6h-1zM404.1 130.4h1v1.6h-1zM404.1 138.7h1v1.6h-1zM404.1 147.0h1v1.6h-1zM404.1 155.3h1v1.6h-1zM404.1 163.6h1v1.6h-1zM404.1 171.9h1v1.6h-1zM404.1 180.2h1v1.6h-1zM404.1 188.5h1v1.6h-1zM404.1 196.8h1v1.6h-1zM404.1 205.1h1v1.6h-1zM404.1 213.4h1v1.6h-1zM404.1 221.7h1v1.6h-1zM404.1 230.0h1v1.6h-1zM404.1 238.3h1v1.6h-1zM404.1 246.6h1v1.6h-1zM404.1 254.9h1v1.6h-1zM404.1 263.2h1v1.6h-1zM404.1 271.5h1v1.6h-1zM404.1 279.8h1v1.6h-1zM404.1 288.1h1v1.6h-1zM404.1 296.4h1v1.6h-1zM404.1 304.7h1v1.6h-1zM404.1 313.0h1v1.6h-1zM404.1 321.3h1v1.6h-1zM404.1 329.6h1v1.6h-1zM404.1 337.9h1v1.6h-1zM404.1 346.2h1v1.6h-1zM404.1 354.5h1v1.6h-1zM404.1 362.8h1v1.6h-1zM404.1 371.1h1v1.6h-1zM404.1 379.4h1v1.6h-1zM404.1 387.7h1v1.6h-1zM404.1 396.0h1v1.6h-1zM404.1 404.3h1v1.6h-1zM404.1 412.6h1v1.6h-1zM404.1 420.9h1v1.6h-1zM404.1 429.2h1v1.6h-1zM404.1 437.5h1v1.6h-1zM404.1 445.8h1v1.6h-1zM404.1 454.1h1v1.6h-1zM404.1 462.4h1v1.6h-1zM412.4 5.9h1v1.6h-1zM412.4 14.2h1v1.6h-1zM412.4 22.5h1v1.6h-1zM412.4 30.8h1v1.6h-1zM412.4 39.1h1v1.6h-1zM412.4 47.4h1v1.6h-1zM412.4 55.7h1v1.6h-1zM412.4 64.0h1v1.6h-1zM412.4 72.3h1v1.6h-1zM412.4 80.6h1v1.6h-1zM412.4 88.9h1v1.6h-1zM412.4 97.2h1v1.6h-1zM412.4 105.5h1v1.6h-1zM412.4 113.8h1v1.6h-1zM412.4 122.1h1v1.6h-1zM412.4 130.4h1v1.6h-1zM412.4 138.7h1v1.6h-1zM412.4 147.0h1v1.6h-1zM412.4 155.3h1v1.6h-1zM412.4 163.6h1v1.6h-1zM412.4 171.9h1v1.6h-1zM412.4 180.2h1v1.6h-1zM412.4 188.5h1v1.6h-1zM412.4 196.8h1v1.6h-1zM412.4 205.1h1v1.6h-1zM412.4 213.4h1v1.6h-1zM412.4 221.7h1v1.6h-1zM412.4 230.0h1v1.6h-1zM412.4 238.3h1v1.6h-1zM412.4 246.6h1v1.6h-1zM412.4 254.9h1v1.6h-1zM412.4 263.2h1v1.6h-1zM412.4 271.5h1v1.6h-1zM412.4 279.8h1v1.6h-1zM412.4 288.1h1v1.6h-1zM412.4 296.4h1v1.6h-1zM412.4 304.7h1v1.6h-1zM412.4 313.0h1v1.6h-1zM412.4 321.3h1v1.6h-1zM412.4 329.6h1v1.6h-1zM412.4 337.9h1v1.6h-1zM412.4 346.2h1v1.6h-1zM412.4 354.5h1v1.6h-1zM412.4 362.8h1v1.6h-1zM412.4 371.1h1v1.6h-1zM412.4 379.4h1v1.6h-1zM412.4 387.7h1v1.6h-1zM412.4 396.0h1v1.6h-1zM412.4 404.3h1v1.6h-1zM412.4 412.6h1v1.6h-1zM412.4 420.9h1v1.6h-1zM412.4 429.2h1v1.6h-1zM412.4 437.5h1v1.6h-1zM412.4 445.8h1v1.6h-1zM412.4 454.1h1v1.6h-1zM412.4 462.4h1v1.6h-1zM420.7 5.9h1v1.6h-1zM420.7 14.2h1v1.6h-1zM420.7 22.5h1v1.6h-1zM420.7 30.8h1v1.6h-1zM420.7 39.1h1v1.6h-1zM420.7 47.4h1v1.6h-1zM420.7 55.7h1v1.6h-1zM420.7 64.0h1v1.6h-1zM420.7 72.3h1v1.6h-1zM420.7 80.6h1v1.6h-1zM420.7 88.9h1v1.6h-1zM420.7 97.2h1v1.6h-1zM420.7 105.5h1v1.6h-1zM420.7 113.8h1v1.6h-1zM420.7 122.1h1v1.6h-1zM420.7 130.4h1v1.6h-1zM420.7 138.7h1v1.6h-1zM420.7 147.0h1v1.6h-1zM420.7 155.3h1v1.6h-1zM420.7 163.6h1v1.6h-1zM420.7 171.9h1v1.6h-1zM420.7 180.2h1v1.6h-1zM420.7 188.5h1v1.6h-1zM420.7 196.8h1v1.6h-1zM420.7 205.1h1v1.6h-1zM420.7 213.4h1v1.6h-1zM420.7 221.7h1v1.6h-1zM420.7 230.0h1v1.6h-1zM420.7 238.3h1v1.6h-1zM420.7 246.6h1v1.6h-1zM420.7 254.9h1v1.6h-1zM420.7 263.2h1v1.6h-1zM420.7 271.5h1v1.6h-1zM420.7 279.8h1v1.6h-1zM420.7 288.1h1v1.6h-1zM420.7 296.4h1v1.6h-1zM420.7 304.7h1v1.6h-1zM420.7 313.0h1v1.6h-1zM420.7 321.3h1v1.6h-1zM420.7 329.6h1v1.6h-1zM420.7 337.9h1v1.6h-1zM420.7 346.2h1v1.6h-1zM420.7 354.5h1v1.6h-1zM420.7 362.8h1v1.6h-1zM420.7 371.1h1v1.6h-1zM420.7 379.4h1v1.6h-1zM420.7 387.7h1v1.6h-1zM420.7 396.0h1v1.6h-1zM420.7 404.3h1v1.6h-1zM420.7 412.6h1v1.6h-1zM420.7 420.9h1v1.6h-1zM420.7 429.2h1v1.6h-1zM420.7 437.5h1v1.6h-1zM420.7 445.8h1v1.6h-1zM420.7 454.1h1v1.6h-1zM420.7 462.4h1v1.6h-1zM429.0 5.9h1v1.6h-1zM429.0 14.2h1v1.6h-1zM429.0 22.5h1v1.6h-1zM429.0 30.8h1v1.6h-1zM429.0 39.1h1v1.6h-1zM429.0 47.4h1v1.6h-1zM429.0 55.7h1v1.6h-1zM429.0 64.0h1v1.6h-1zM429.0 72.3h1v1.6h-1zM429.0 80.6h1v1.6h-1zM429.0 88.9h1v1.6h-1zM429.0 97.2h1v1.6h-1zM429.0 105.5h1v1.6h-1zM429.0 113.8h1v1.6h-1zM429.0 122.1h1v1.6h-1zM429.0 130.4h1v1.6h-1zM429.0 138.7h1v1.6h-1zM429.0 147.0h1v1.6h-1zM429.0 155.3h1v1.6h-1zM429.0 163.6h1v1.6h-1zM429.0 171.9h1v1.6h-1zM429.0 180.2h1v1.6h-1zM429.0 188.5h1v1.6h-1zM429.0 196.8h1v1.6h-1zM429.0 205.1h1v1.6h-1zM429.0 213.4h1v1.6h-1zM429.0 221.7h1v1.6h-1zM429.0 230.0h1v1.6h-1zM429.0 238.3h1v1.6h-1zM429.0 246.6h1v1.6h-1zM429.0 254.9h1v1.6h-1zM429.0 263.2h1v1.6h-1zM429.0 271.5h1v1.6h-1zM429.0 279.8h1v1.6h-1zM429.0 288.1h1v1.6h-1zM429.0 296.4h1v1.6h-1zM429.0 304.7h1v1.6h-1zM429.0 313.0h1v1.6h-1zM429.0 321.3h1v1.6h-1zM429.0 329.6h1v1.6h-1zM429.0 337.9h1v1.6h-1zM429.0 346.2h1v1.6h-1zM429.0 354.5h1v1.6h-1zM429.0 362.8h1v1.6h-1zM429.0 371.1h1v1.6h-1zM429.0 379.4h1v1.6h-1zM429.0 387.7h1v1.6h-1zM429.0 396.0h1v1.6h-1zM429.0 404.3h1v1.6h-1zM429.0 412.6h1v1.6h-1zM429.0 420.9h1v1.6h-1zM429.0 429.2h1v1.6h-1zM429.0 437.5h1v1.6h-1zM429.0 445.8h1v1.6h-1zM429.0 454.1h1v1.6h-1zM429.0 462.4h1v1.6h-1zM437.3 5.9h1v1.6h-1zM437.3 14.2h1v1.6h-1zM437.3 22.5h1v1.6h-1zM437.3 30.8h1v1.6h-1zM437.3 39.1h1v1.6h-1zM437.3 47.4h1v1.6h-1zM437.3 55.7h1v1.6h-1zM437.3 64.0h1v1.6h-1zM437.3 72.3h1v1.6h-1zM437.3 80.6h1v1.6h-1zM437.3 88.9h1v1.6h-1zM437.3 97.2h1v1.6h-1zM437.3 105.5h1v1.6h-1zM437.3 113.8h1v1.6h-1zM437.3 122.1h1v1.6h-1zM437.3 130.4h1v1.6h-1zM437.3 138.7h1v1.6h-1zM437.3 147.0h1v1.6h-1zM437.3 155.3h1v1.6h-1zM437.3 163.6h1v1.6h-1zM437.3 171.9h1v1.6h-1zM437.3 180.2h1v1.6h-1zM437.3 188.5h1v1.6h-1zM437.3 196.8h1v1.6h-1zM437.3 205.1h1v1.6h-1zM437.3 213.4h1v1.6h-1zM437.3 221.7h1v1.6h-1zM437.3 230.0h1v1.6h-1zM437.3 238.3h1v1.6h-1zM437.3 246.6h1v1.6h-1zM437.3 254.9h1v1.6h-1zM437.3 263.2h1v1.6h-1zM437.3 271.5h1v1.6h-1zM437.3 279.8h1v1.6h-1zM437.3 288.1h1v1.6h-1zM437.3 296.4h1v1.6h-1zM437.3 304.7h1v1.6h-1zM437.3 313.0h1v1.6h-1zM437.3 321.3h1v1.6h-1zM437.3 329.6h1v1.6h-1zM437.3 337.9h1v1.6h-1zM437.3 346.2h1v1.6h-1zM437.3 354.5h1v1.6h-1zM437.3 362.8h1v1.6h-1zM437.3 371.1h1v1.6h-1zM437.3 379.4h1v1.6h-1zM437.3 387.7h1v1.6h-1zM437.3 396.0h1v1.6h-1zM437.3 404.3h1v1.6h-1zM437.3 412.6h1v1.6h-1zM437.3 420.9h1v1.6h-1zM437.3 429.2h1v1.6h-1zM437.3 437.5h1v1.6h-1zM437.3 445.8h1v1.6h-1zM437.3 454.1h1v1.6h-1zM437.3 462.4h1v1.6h-1zM445.6 5.9h1v1.6h-1zM445.6 14.2h1v1.6h-1zM445.6 22.5h1v1.6h-1zM445.6 30.8h1v1.6h-1zM445.6 39.1h1v1.6h-1zM445.6 47.4h1v1.6h-1zM445.6 55.7h1v1.6h-1zM445.6 64.0h1v1.6h-1zM445.6 72.3h1v1.6h-1zM445.6 80.6h1v1.6h-1zM445.6 88.9h1v1.6h-1zM445.6 97.2h1v1.6h-1zM445.6 105.5h1v1.6h-1zM445.6 113.8h1v1.6h-1zM445.6 122.1h1v1.6h-1zM445.6 130.4h1v1.6h-1zM445.6 138.7h1v1.6h-1zM445.6 147.0h1v1.6h-1zM445.6 155.3h1v1.6h-1zM445.6 163.6h1v1.6h-1zM445.6 171.9h1v1.6h-1zM445.6 180.2h1v1.6h-1zM445.6 188.5h1v1.6h-1zM445.6 196.8h1v1.6h-1zM445.6 205.1h1v1.6h-1zM445.6 213.4h1v1.6h-1zM445.6 221.7h1v1.6h-1zM445.6 230.0h1v1.6h-1zM445.6 238.3h1v1.6h-1zM445.6 246.6h1v1.6h-1zM445.6 254.9h1v1.6h-1zM445.6 263.2h1v1.6h-1zM445.6 271.5h1v1.6h-1zM445.6 279.8h1v1.6h-1zM445.6 288.1h1v1.6h-1zM445.6 296.4h1v1.6h-1zM445.6 304.7h1v1.6h-1zM445.6 313.0h1v1.6h-1zM445.6 321.3h1v1.6h-1zM445.6 329.6h1v1.6h-1zM445.6 337.9h1v1.6h-1zM445.6 346.2h1v1.6h-1zM445.6 354.5h1v1.6h-1zM445.6 362.8h1v1.6h-1zM445.6 371.1h1v1.6h-1zM445.6 379.4h1v1.6h-1zM445.6 387.7h1v1.6h-1zM445.6 396.0h1v1.6h-1zM445.6 404.3h1v1.6h-1zM445.6 412.6h1v1.6h-1zM445.6 420.9h1v1.6h-1zM445.6 429.2h1v1.6h-1zM445.6 437.5h1v1.6h-1zM445.6 445.8h1v1.6h-1zM445.6 454.1h1v1.6h-1zM445.6 462.4h1v1.6h-1zM453.9 5.9h1v1.6h-1zM453.9 14.2h1v1.6h-1zM453.9 22.5h1v1.6h-1zM453.9 30.8h1v1.6h-1zM453.9 39.1h1v1.6h-1zM453.9 47.4h1v1.6h-1zM453.9 55.7h1v1.6h-1zM453.9 64.0h1v1.6h-1zM453.9 72.3h1v1.6h-1zM453.9 80.6h1v1.6h-1zM453.9 88.9h1v1.6h-1zM453.9 97.2h1v1.6h-1zM453.9 105.5h1v1.6h-1zM453.9 113.8h1v1.6h-1zM453.9 122.1h1v1.6h-1zM453.9 130.4h1v1.6h-1zM453.9 138.7h1v1.6h-1zM453.9 147.0h1v1.6h-1zM453.9 155.3h1v1.6h-1zM453.9 163.6h1v1.6h-1zM453.9 171.9h1v1.6h-1zM453.9 180.2h1v1.6h-1zM453.9 188.5h1v1.6h-1zM453.9 196.8h1v1.6h-1zM453.9 205.1h1v1.6h-1zM453.9 213.4h1v1.6h-1zM453.9 221.7h1v1.6h-1zM453.9 230.0h1v1.6h-1zM453.9 238.3h1v1.6h-1zM453.9 246.6h1v1.6h-1zM453.9 254.9h1v1.6h-1zM453.9 263.2h1v1.6h-1zM453.9 271.5h1v1.6h-1zM453.9 279.8h1v1.6h-1zM453.9 288.1h1v1.6h-1zM453.9 296.4h1v1.6h-1zM453.9 304.7h1v1.6h-1zM453.9 313.0h1v1.6h-1zM453.9 321.3h1v1.6h-1zM453.9 329.6h1v1.6h-1zM453.9 337.9h1v1.6h-1zM453.9 346.2h1v1.6h-1zM453.9 354.5h1v1.6h-1zM453.9 362.8h1v1.6h-1zM453.9 371.1h1v1.6h-1zM453.9 379.4h1v1.6h-1zM453.9 387.7h1v1.6h-1zM453.9 396.0h1v1.6h-1zM453.9 404.3h1v1.6h-1zM453.9 412.6h1v1.6h-1zM453.9 420.9h1v1.6h-1zM453.9 429.2h1v1.6h-1zM453.9 437.5h1v1.6h-1zM453.9 445.8h1v1.6h-1zM453.9 454.1h1v1.6h-1zM453.9 462.4h1v1.6h-1zM462.2 5.9h1v1.6h-1zM462.2 14.2h1v1.6h-1zM462.2 22.5h1v1.6h-1zM462.2 30.8h1v1.6h-1zM462.2 39.1h1v1.6h-1zM462.2 47.4h1v1.6h-1zM462.2 55.7h1v1.6h-1zM462.2 64.0h1v1.6h-1zM462.2 72.3h1v1.6h-1zM462.2 80.6h1v1.6h-1zM462.2 88.9h1v1.6h-1zM462.2 97.2h1v1.6h-1zM462.2 105.5h1v1.6h-1zM462.2 113.8h1v1.6h-1zM462.2 122.1h1v1.6h-1zM462.2 130.4h1v1.6h-1zM462.2 138.7h1v1.6h-1zM462.2 147.0h1v1.6h-1zM462.2 155.3h1v1.6h-1zM462.2 163.6h1v1.6h-1zM462.2 171.9h1v1.6h-1zM462.2 180.2h1v1.6h-1zM462.2 188.5h1v1.6h-1zM462.2 196.8h1v1.6h-1zM462.2 205.1h1v1.6h-1zM462.2 213.4h1v1.6h-1zM462.2 221.7h1v1.6h-1zM462.2 230.0h1v1.6h-1zM462.2 238.3h1v1.6h-1zM462.2 246.6h1v1.6h-1zM462.2 254.9h1v1.6h-1zM462.2 263.2h1v1.6h-1zM462.2 271.5h1v1.6h-1zM462.2 279.8h1v1.6h-1zM462.2 288.1h1v1.6h-1zM462.2 296.4h1v1.6h-1zM462.2 304.7h1v1.6h-1zM462.2 313.0h1v1.6h-1zM462.2 321.3h1v1.6h-1zM462.2 329.6h1v1.6h-1zM462.2 337.9h1v1.6h-1zM462.2 346.2h1v1.6h-1zM462.2 354.5h1v1.6h-1zM462.2 362.8h1v1.6h-1zM462.2 371.1h1v1.6h-1zM462.2 379.4h1v1.6h-1zM462.2 387.7h1v1.6h-1zM462.2 396.0h1v1.6h-1zM462.2 404.3h1v1.6h-1zM462.2 412.6h1v1.6h-1zM462.2 420.9h1v1.6h-1zM462.2 429.2h1v1.6h-1zM462.2 437.5h1v1.6h-1zM462.2 445.8h1v1.6h-1zM462.2 454.1h1v1.6h-1zM462.2 462.4h1v1.6h-1zM470.5 5.9h1v1.6h-1zM470.5 14.2h1v1.6h-1zM470.5 22.5h1v1.6h-1zM470.5 30.8h1v1.6h-1zM470.5 39.1h1v1.6h-1zM470.5 47.4h1v1.6h-1zM470.5 55.7h1v1.6h-1zM470.5 64.0h1v1.6h-1zM470.5 72.3h1v1.6h-1zM470.5 80.6h1v1.6h-1zM470.5 88.9h1v1.6h-1zM470.5 97.2h1v1.6h-1zM470.5 105.5h1v1.6h-1zM470.5 113.8h1v1.6h-1zM470.5 122.1h1v1.6h-1zM470.5 130.4h1v1.6h-1zM470.5 138.7h1v1.6h-1zM470.5 147.0h1v1.6h-1zM470.5 155.3h1v1.6h-1zM470.5 163.6h1v1.6h-1zM470.5 171.9h1v1.6h-1zM470.5 180.2h1v1.6h-1zM470.5 188.5h1v1.6h-1zM470.5 196.8h1v1.6h-1zM470.5 205.1h1v1.6h-1zM470.5 213.4h1v1.6h-1zM470.5 221.7h1v1.6h-1zM470.5 230.0h1v1.6h-1zM470.5 238.3h1v1.6h-1zM470.5 246.6h1v1.6h-1zM470.5 254.9h1v1.6h-1zM470.5 263.2h1v1.6h-1zM470.5 271.5h1v1.6h-1zM470.5 279.8h1v1.6h-1zM470.5 288.1h1v1.6h-1zM470.5 296.4h1v1.6h-1zM470.5 304.7h1v1.6h-1zM470.5 313.0h1v1.6h-1zM470.5 321.3h1v1.6h-1zM470.5 329.6h1v1.6h-1zM470.5 337.9h1v1.6h-1zM470.5 346.2h1v1.6h-1zM470.5 354.5h1v1.6h-1zM470.5 362.8h1v1.6h-1zM470.5 371.1h1v1.6h-1zM470.5 379.4h1v1.6h-1zM470.5 387.7h1v1.6h-1zM470.5 396.0h1v1.6h-1zM470.5 404.3h1v1.6h-1zM470.5 412.6h1v1.6h-1zM470.5 420.9h1v1.6h-1zM470.5 429.2h1v1.6h-1zM470.5 437.5h1v1.6h-1zM470.5 445.8h1v1.6h-1zM470.5 454.1h1v1.6h-1zM470.5 462.4h1v1.6h-1zM478.8 5.9h1v1.6h-1zM478.8 14.2h1v1.6h-1zM478.8 22.5h1v1.6h-1zM478.8 30.8h1v1.6h-1zM478.8 39.1h1v1.6h-1zM478.8 47.4h1v1.6h-1zM478.8 55.7h1v1.6h-1zM478.8 64.0h1v1.6h-1zM478.8 72.3h1v1.6h-1zM478.8 80.6h1v1.6h-1zM478.8 88.9h1v1.6h-1zM478.8 97.2h1v1.6h-1zM478.8 105.5h1v1.6h-1zM478.8 113.8h1v1.6h-1zM478.8 122.1h1v1.6h-1zM478.8 130.4h1v1.6h-1zM478.8 138.7h1v1.6h-1zM478.8 147.0h1v1.6h-1zM478.8 155.3h1v1.6h-1zM478.8 163.6h1v1.6h-1zM478.8 171.9h1v1.6h-1zM478.8 180.2h1v1.6h-1zM478.8 188.5h1v1.6h-1zM478.8 196.8h1v1.6h-1zM478.8 205.1h1v1.6h-1zM478.8 213.4h1v1.6h-1zM478.8 221.7h1v1.6h-1zM478.8 230.0h1v1.6h-1zM478.8 238.3h1v1.6h-1zM478.8 246.6h1v1.6h-1zM478.8 254.9h1v1.6h-1zM478.8 263.2h1v1.6h-1zM478.8 271.5h1v1.6h-1zM478.8 279.8h1v1.6h-1zM478.8 288.1h1v1.6h-1zM478.8 296.4h1v1.6h-1zM478.8 304.7h1v1.6h-1zM478.8 313.0h1v1.6h-1zM478.8 321.3h1v1.6h-1zM478.8 329.6h1v1.6h-1zM478.8 337.9h1v1.6h-1zM478.8 346.2h1v1.6h-1zM478.8 354.5h1v1.6h-1zM478.8 362.8h1v1.6h-1zM478.8 371.1h1v1.6h-1zM478.8 379.4h1v1.6h-1zM478.8 387.7h1v1.6h-1zM478.8 396.0h1v1.6h-1zM478.8 404.3h1v1.6h-1zM478.8 412.6h1v1.6h-1zM478.8 420.9h1v1.6h-1zM478.8 429.2h1v1.6h-1zM478.8 437.5h1v1.6h-1zM478.8 445.8h1v1.6h-1zM478.8 454.1h1v1.6h-1zM478.8 462.4h1v1.6h-1zM487.1 5.9h1v1.6h-1zM487.1 14.2h1v1.6h-1zM487.1 22.5h1v1.6h-1zM487.1 30.8h1v1.6h-1zM487.1 39.1h1v1.6h-1zM487.1 47.4h1v1.6h-1zM487.1 55.7h1v1.6h-1zM487.1 64.0h1v1.6h-1zM487.1 72.3h1v1.6h-1zM487.1 80.6h1v1.6h-1zM487.1 88.9h1v1.6h-1zM487.1 97.2h1v1.6h-1zM487.1 105.5h1v1.6h-1zM487.1 113.8h1v1.6h-1zM487.1 122.1h1v1.6h-1zM487.1 130.4h1v1.6h-1zM487.1 138.7h1v1.6h-1zM487.1 147.0h1v1.6h-1zM487.1 155.3h1v1.6h-1zM487.1 163.6h1v1.6h-1zM487.1 171.9h1v1.6h-1zM487.1 180.2h1v1.6h-1zM487.1 188.5h1v1.6h-1zM487.1 196.8h1v1.6h-1zM487.1 205.1h1v1.6h-1zM487.1 213.4h1v1.6h-1zM487.1 221.7h1v1.6h-1zM487.1 230.0h1v1.6h-1zM487.1 238.3h1v1.6h-1zM487.1 246.6h1v1.6h-1zM487.1 254.9h1v1.6h-1zM487.1 263.2h1v1.6h-1zM487.1 271.5h1v1.6h-1zM487.1 279.8h1v1.6h-1zM487.1 288.1h1v1.6h-1zM487.1 296.4h1v1.6h-1zM487.1 304.7h1v1.6h-1zM487.1 313.0h1v1.6h-1zM487.1 321.3h1v1.6h-1zM487.1 329.6h1v1.6h-1zM487.1 337.9h1v1.6h-1zM487.1 346.2h1v1.6h-1zM487.1 354.5h1v1.6h-1zM487.1 362.8h1v1.6h-1zM487.1 371.1h1v1.6h-1zM487.1 379.4h1v1.6h-1zM487.1 387.7h1v1.6h-1zM487.1 396.0h1v1.6h-1zM487.1 404.3h1v1.6h-1zM487.1 412.6h1v1.6h-1zM487.1 420.9h1v1.6h-1zM487.1 429.2h1v1.6h-1zM487.1 437.5h1v1.6h-1zM487.1 445.8h1v1.6h-1zM487.1 454.1h1v1.6h-1zM487.1 462.4h1v1.6h-1zM495.4 5.9h1v1.6h-1zM495.4 14.2h1v1.6h-1zM495.4 22.5h1v1.6h-1zM495.4 30.8h1v1.6h-1zM495.4 39.1h1v1.6h-1zM495.4 47.4h1v1.6h-1zM495.4 55.7h1v1.6h-1zM495.4 64.0h1v1.6h-1zM495.4 72.3h1v1.6h-1zM495.4 80.6h1v1.6h-1zM495.4 88.9h1v1.6h-1zM495.4 97.2h1v1.6h-1zM495.4 105.5h1v1.6h-1zM495.4 113.8h1v1.6h-1zM495.4 122.1h1v1.6h-1zM495.4 130.4h1v1.6h-1zM495.4 138.7h1v1.6h-1zM495.4 147.0h1v1.6h-1zM495.4 155.3h1v1.6h-1zM495.4 163.6h1v1.6h-1zM495.4 171.9h1v1.6h-1zM495.4 180.2h1v1.6h-1zM495.4 188.5h1v1.6h-1zM495.4 196.8h1v1.6h-1zM495.4 205.1h1v1.6h-1zM495.4 213.4h1v1.6h-1zM495.4 221.7h1v1.6h-1zM495.4 230.0h1v1.6h-1zM495.4 238.3h1v1.6h-1zM495.4 246.6h1v1.6h-1zM495.4 254.9h1v1.6h-1zM495.4 263.2h1v1.6h-1zM495.4 271.5h1v1.6h-1zM495.4 279.8h1v1.6h-1zM495.4 288.1h1v1.6h-1zM495.4 296.4h1v1.6h-1zM495.4 304.7h1v1.6h-1zM495.4 313.0h1v1.6h-1zM495.4 321.3h1v1.6h-1zM495.4 329.6h1v1.6h-1zM495.4 337.9h1v1.6h-1zM495.4 346.2h1v1.6h-1zM495.4 354.5h1v1.6h-1zM495.4 362.8h1v1.6h-1zM495.4 371.1h1v1.6h-1zM495.4 379.4h1v1.6h-1zM495.4 387.7h1v1.6h-1zM495.4 396.0h1v1.6h-1zM495.4 404.3h1v1.6h-1zM495.4 412.6h1v1.6h-1zM495.4 420.9h1v1.6h-1zM495.4 429.2h1v1.6h-1zM495.4 437.5h1v1.6h-1zM495.4 445.8h1v1.6h-1zM495.4 454.1h1v1.6h-1zM495.4 462.4h1v1.6h-1zM503.7 5.9h1v1.6h-1zM503.7 14.2h1v1.6h-1zM503.7 22.5h1v1.6h-1zM503.7 30.8h1v1.6h-1zM503.7 39.1h1v1.6h-1zM503.7 47.4h1v1.6h-1zM503.7 55.7h1v1.6h-1zM503.7 64.0h1v1.6h-1zM503.7 72.3h1v1.6h-1zM503.7 80.6h1v1.6h-1zM503.7 88.9h1v1.6h-1zM503.7 97.2h1v1.6h-1zM503.7 105.5h1v1.6h-1zM503.7 113.8h1v1.6h-1zM503.7 122.1h1v1.6h-1zM503.7 130.4h1v1.6h-1zM503.7 138.7h1v1.6h-1zM503.7 147.0h1v1.6h-1zM503.7 155.3h1v1.6h-1zM503.7 163.6h1v1.6h-1zM503.7 171.9h1v1.6h-1zM503.7 180.2h1v1.6h-1zM503.7 188.5h1v1.6h-1zM503.7 196.8h1v1.6h-1zM503.7 205.1h1v1.6h-1zM503.7 213.4h1v1.6h-1zM503.7 221.7h1v1.6h-1zM503.7 230.0h1v1.6h-1zM503.7 238.3h1v1.6h-1zM503.7 246.6h1v1.6h-1zM503.7 254.9h1v1.6h-1zM503.7 263.2h1v1.6h-1zM503.7 271.5h1v1.6h-1zM503.7 279.8h1v1.6h-1zM503.7 288.1h1v1.6h-1zM503.7 296.4h1v1.6h-1zM503.7 304.7h1v1.6h-1zM503.7 313.0h1v1.6h-1zM503.7 321.3h1v1.6h-1zM503.7 329.6h1v1.6h-1zM503.7 337.9h1v1.6h-1zM503.7 346.2h1v1.6h-1zM503.7 354.5h1v1.6h-1zM503.7 362.8h1v1.6h-1zM503.7 371.1h1v1.6h-1zM503.7 379.4h1v1.6h-1zM503.7 387.7h1v1.6h-1zM503.7 396.0h1v1.6h-1zM503.7 404.3h1v1.6h-1zM503.7 412.6h1v1.6h-1zM503.7 420.9h1v1.6h-1zM503.7 429.2h1v1.6h-1zM503.7 437.5h1v1.6h-1zM503.7 445.8h1v1.6h-1zM503.7 454.1h1v1.6h-1zM503.7 462.4h1v1.6h-1zM512.0 5.9h1v1.6h-1zM512.0 14.2h1v1.6h-1zM512.0 22.5h1v1.6h-1zM512.0 30.8h1v1.6h-1zM512.0 39.1h1v1.6h-1zM512.0 47.4h1v1.6h-1zM512.0 55.7h1v1.6h-1zM512.0 64.0h1v1.6h-1zM512.0 72.3h1v1.6h-1zM512.0 80.6h1v1.6h-1zM512.0 88.9h1v1.6h-1zM512.0 97.2h1v1.6h-1zM512.0 105.5h1v1.6h-1zM512.0 113.8h1v1.6h-1zM512.0 122.1h1v1.6h-1zM512.0 130.4h1v1.6h-1zM512.0 138.7h1v1.6h-1zM512.0 147.0h1v1.6h-1zM512.0 155.3h1v1.6h-1zM512.0 163.6h1v1.6h-1zM512.0 171.9h1v1.6h-1zM512.0 180.2h1v1.6h-1zM512.0 188.5h1v1.6h-1zM512.0 196.8h1v1.6h-1zM512.0 205.1h1v1.6h-1zM512.0 213.4h1v1.6h-1zM512.0 221.7h1v1.6h-1zM512.0 230.0h1v1.6h-1zM512.0 238.3h1v1.6h-1zM512.0 246.6h1v1.6h-1zM512.0 254.9h1v1.6h-1zM512.0 263.2h1v1.6h-1zM512.0 271.5h1v1.6h-1zM512.0 279.8h1v1.6h-1zM512.0 288.1h1v1.6h-1zM512.0 296.4h1v1.6h-1zM512.0 304.7h1v1.6h-1zM512.0 313.0h1v1.6h-1zM512.0 321.3h1v1.6h-1zM512.0 329.6h1v1.6h-1zM512.0 337.9h1v1.6h-1zM512.0 346.2h1v1.6h-1zM512.0 354.5h1v1.6h-1zM512.0 362.8h1v1.6h-1zM512.0 371.1h1v1.6h-1zM512.0 379.4h1v1.6h-1zM512.0 387.7h1v1.6h-1zM512.0 396.0h1v1.6h-1zM512.0 404.3h1v1.6h-1zM512.0 412.6h1v1.6h-1zM512.0 420.9h1v1.6h-1zM512.0 429.2h1v1.6h-1zM512.0 437.5h1v1.6h-1zM512.0 445.8h1v1.6h-1zM512.0 454.1h1v1.6h-1zM512.0 462.4h1v1.6h-1zM520.3 5.9h1v1.6h-1zM520.3 14.2h1v1.6h-1zM520.3 22.5h1v1.6h-1zM520.3 30.8h1v1.6h-1zM520.3 39.1h1v1.6h-1zM520.3 47.4h1v1.6h-1zM520.3 55.7h1v1.6h-1zM520.3 64.0h1v1.6h-1zM520.3 72.3h1v1.6h-1zM520.3 80.6h1v1.6h-1zM520.3 88.9h1v1.6h-1zM520.3 97.2h1v1.6h-1zM520.3 105.5h1v1.6h-1zM520.3 113.8h1v1.6h-1zM520.3 122.1h1v1.6h-1zM520.3 130.4h1v1.6h-1zM520.3 138.7h1v1.6h-1zM520.3 147.0h1v1.6h-1zM520.3 155.3h1v1.6h-1zM520.3 163.6h1v1.6h-1zM520.3 171.9h1v1.6h-1zM520.3 180.2h1v1.6h-1zM520.3 188.5h1v1.6h-1zM520.3 196.8h1v1.6h-1zM520.3 205.1h1v1.6h-1zM520.3 213.4h1v1.6h-1zM520.3 221.7h1v1.6h-1zM520.3 230.0h1v1.6h-1zM520.3 238.3h1v1.6h-1zM520.3 246.6h1v1.6h-1zM520.3 254.9h1v1.6h-1zM520.3 263.2h1v1.6h-1zM520.3 271.5h1v1.6h-1zM520.3 279.8h1v1.6h-1zM520.3 288.1h1v1.6h-1zM520.3 296.4h1v1.6h-1zM520.3 304.7h1v1.6h-1zM520.3 313.0h1v1.6h-1zM520.3 321.3h1v1.6h-1zM520.3 329.6h1v1.6h-1zM520.3 337.9h1v1.6h-1zM520.3 346.2h1v1.6h-1zM520.3 354.5h1v1.6h-1zM520.3 362.8h1v1.6h-1zM520.3 371.1h1v1.6h-1zM520.3 379.4h1v1.6h-1zM520.3 387.7h1v1.6h-1zM520.3 396.0h1v1.6h-1zM520.3 404.3h1v1.6h-1zM520.3 412.6h1v1.6h-1zM520.3 420.9h1v1.6h-1zM520.3 429.2h1v1.6h-1zM520.3 437.5h1v1.6h-1zM520.3 445.8h1v1.6h-1zM520.3 454.1h1v1.6h-1zM520.3 462.4h1v1.6h-1zM528.5 5.9h1v1.6h-1zM528.5 14.2h1v1.6h-1zM528.5 22.5h1v1.6h-1zM528.5 30.8h1v1.6h-1zM528.5 39.1h1v1.6h-1zM528.5 47.4h1v1.6h-1zM528.5 55.7h1v1.6h-1zM528.5 64.0h1v1.6h-1zM528.5 72.3h1v1.6h-1zM528.5 80.6h1v1.6h-1zM528.5 88.9h1v1.6h-1zM528.5 97.2h1v1.6h-1zM528.5 105.5h1v1.6h-1zM528.5 113.8h1v1.6h-1zM528.5 122.1h1v1.6h-1zM528.5 130.4h1v1.6h-1zM528.5 138.7h1v1.6h-1zM528.5 147.0h1v1.6h-1zM528.5 155.3h1v1.6h-1zM528.5 163.6h1v1.6h-1zM528.5 171.9h1v1.6h-1zM528.5 180.2h1v1.6h-1zM528.5 188.5h1v1.6h-1zM528.5 196.8h1v1.6h-1zM528.5 205.1h1v1.6h-1zM528.5 213.4h1v1.6h-1zM528.5 221.7h1v1.6h-1zM528.5 230.0h1v1.6h-1zM528.5 238.3h1v1.6h-1zM528.5 246.6h1v1.6h-1zM528.5 254.9h1v1.6h-1zM528.5 263.2h1v1.6h-1zM528.5 271.5h1v1.6h-1zM528.5 279.8h1v1.6h-1zM528.5 288.1h1v1.6h-1zM528.5 296.4h1v1.6h-1zM528.5 304.7h1v1.6h-1zM528.5 313.0h1v1.6h-1zM528.5 321.3h1v1.6h-1zM528.5 329.6h1v1.6h-1zM528.5 337.9h1v1.6h-1zM528.5 346.2h1v1.6h-1zM528.5 354.5h1v1.6h-1zM528.5 362.8h1v1.6h-1zM528.5 371.1h1v1.6h-1zM528.5 379.4h1v1.6h-1zM528.5 387.7h1v1.6h-1zM528.5 396.0h1v1.6h-1zM528.5 404.3h1v1.6h-1zM528.5 412.6h1v1.6h-1zM528.5 420.9h1v1.6h-1zM528.5 429.2h1v1.6h-1zM528.5 437.5h1v1.6h-1zM528.5 445.8h1v1.6h-1zM528.5 454.1h1v1.6h-1zM528.5 462.4h1v1.6h-1zM536.8 5.9h1v1.6h-1zM536.8 14.2h1v1.6h-1zM536.8 22.5h1v1.6h-1zM536.8 30.8h1v1.6h-1zM536.8 39.1h1v1.6h-1zM536.8 47.4h1v1.6h-1zM536.8 55.7h1v1.6h-1zM536.8 64.0h1v1.6h-1zM536.8 72.3h1v1.6h-1zM536.8 80.6h1v1.6h-1zM536.8 88.9h1v1.6h-1zM536.8 97.2h1v1.6h-1zM536.8 105.5h1v1.6h-1zM536.8 113.8h1v1.6h-1zM536.8 122.1h1v1.6h-1zM536.8 130.4h1v1.6h-1zM536.8 138.7h1v1.6h-1zM536.8 147.0h1v1.6h-1zM536.8 155.3h1v1.6h-1zM536.8 163.6h1v1.6h-1zM536.8 171.9h1v1.6h-1zM536.8 180.2h1v1.6h-1zM536.8 188.5h1v1.6h-1zM536.8 196.8h1v1.6h-1zM536.8 205.1h1v1.6h-1zM536.8 213.4h1v1.6h-1zM536.8 221.7h1v1.6h-1zM536.8 230.0h1v1.6h-1zM536.8 238.3h1v1.6h-1zM536.8 246.6h1v1.6h-1zM536.8 254.9h1v1.6h-1zM536.8 263.2h1v1.6h-1zM536.8 271.5h1v1.6h-1zM536.8 279.8h1v1.6h-1zM536.8 288.1h1v1.6h-1zM536.8 296.4h1v1.6h-1zM536.8 304.7h1v1.6h-1zM536.8 313.0h1v1.6h-1zM536.8 321.3h1v1.6h-1zM536.8 329.6h1v1.6h-1zM536.8 337.9h1v1.6h-1zM536.8 346.2h1v1.6h-1zM536.8 354.5h1v1.6h-1zM536.8 362.8h1v1.6h-1zM536.8 371.1h1v1.6h-1zM536.8 379.4h1v1.6h-1zM536.8 387.7h1v1.6h-1zM536.8 396.0h1v1.6h-1zM536.8 404.3h1v1.6h-1zM536.8 412.6h1v1.6h-1zM536.8 420.9h1v1.6h-1zM536.8 429.2h1v1.6h-1zM536.8 437.5h1v1.6h-1zM536.8 445.8h1v1.6h-1zM536.8 454.1h1v1.6h-1zM536.8 462.4h1v1.6h-1zM545.1 5.9h1v1.6h-1zM545.1 14.2h1v1.6h-1zM545.1 22.5h1v1.6h-1zM545.1 30.8h1v1.6h-1zM545.1 39.1h1v1.6h-1zM545.1 47.4h1v1.6h-1zM545.1 55.7h1v1.6h-1zM545.1 64.0h1v1.6h-1zM545.1 72.3h1v1.6h-1zM545.1 80.6h1v1.6h-1zM545.1 88.9h1v1.6h-1zM545.1 97.2h1v1.6h-1zM545.1 105.5h1v1.6h-1zM545.1 113.8h1v1.6h-1zM545.1 122.1h1v1.6h-1zM545.1 130.4h1v1.6h-1zM545.1 138.7h1v1.6h-1zM545.1 147.0h1v1.6h-1zM545.1 155.3h1v1.6h-1zM545.1 163.6h1v1.6h-1zM545.1 171.9h1v1.6h-1zM545.1 180.2h1v1.6h-1zM545.1 188.5h1v1.6h-1zM545.1 196.8h1v1.6h-1zM545.1 205.1h1v1.6h-1zM545.1 213.4h1v1.6h-1zM545.1 221.7h1v1.6h-1zM545.1 230.0h1v1.6h-1zM545.1 238.3h1v1.6h-1zM545.1 246.6h1v1.6h-1zM545.1 254.9h1v1.6h-1zM545.1 263.2h1v1.6h-1zM545.1 271.5h1v1.6h-1zM545.1 279.8h1v1.6h-1zM545.1 288.1h1v1.6h-1zM545.1 296.4h1v1.6h-1zM545.1 304.7h1v1.6h-1zM545.1 313.0h1v1.6h-1zM545.1 321.3h1v1.6h-1zM545.1 329.6h1v1.6h-1zM545.1 337.9h1v1.6h-1zM545.1 346.2h1v1.6h-1zM545.1 354.5h1v1.6h-1zM545.1 362.8h1v1.6h-1zM545.1 371.1h1v1.6h-1zM545.1 379.4h1v1.6h-1zM545.1 387.7h1v1.6h-1zM545.1 396.0h1v1.6h-1zM545.1 404.3h1v1.6h-1zM545.1 412.6h1v1.6h-1zM545.1 420.9h1v1.6h-1zM545.1 429.2h1v1.6h-1zM545.1 437.5h1v1.6h-1zM545.1 445.8h1v1.6h-1zM545.1 454.1h1v1.6h-1zM545.1 462.4h1v1.6h-1zM553.4 5.9h1v1.6h-1zM553.4 14.2h1v1.6h-1zM553.4 22.5h1v1.6h-1zM553.4 30.8h1v1.6h-1zM553.4 39.1h1v1.6h-1zM553.4 47.4h1v1.6h-1zM553.4 55.7h1v1.6h-1zM553.4 64.0h1v1.6h-1zM553.4 72.3h1v1.6h-1zM553.4 80.6h1v1.6h-1zM553.4 88.9h1v1.6h-1zM553.4 97.2h1v1.6h-1zM553.4 105.5h1v1.6h-1zM553.4 113.8h1v1.6h-1zM553.4 122.1h1v1.6h-1zM553.4 130.4h1v1.6h-1zM553.4 138.7h1v1.6h-1zM553.4 147.0h1v1.6h-1zM553.4 155.3h1v1.6h-1zM553.4 163.6h1v1.6h-1zM553.4 171.9h1v1.6h-1zM553.4 180.2h1v1.6h-1zM553.4 188.5h1v1.6h-1zM553.4 196.8h1v1.6h-1zM553.4 205.1h1v1.6h-1zM553.4 213.4h1v1.6h-1zM553.4 221.7h1v1.6h-1zM553.4 230.0h1v1.6h-1zM553.4 238.3h1v1.6h-1zM553.4 246.6h1v1.6h-1zM553.4 254.9h1v1.6h-1zM553.4 263.2h1v1.6h-1zM553.4 271.5h1v1.6h-1zM553.4 279.8h1v1.6h-1zM553.4 288.1h1v1.6h-1zM553.4 296.4h1v1.6h-1zM553.4 304.7h1v1.6h-1zM553.4 313.0h1v1.6h-1zM553.4 321.3h1v1.6h-1zM553.4 329.6h1v1.6h-1zM553.4 337.9h1v1.6h-1zM553.4 346.2h1v1.6h-1zM553.4 354.5h1v1.6h-1zM553.4 362.8h1v1.6h-1zM553.4 371.1h1v1.6h-1zM553.4 379.4h1v1.6h-1zM553.4 387.7h1v1.6h-1zM553.4 396.0h1v1.6h-1zM553.4 404.3h1v1.6h-1zM553.4 412.6h1v1.6h-1zM553.4 420.9h1v1.6h-1zM553.4 429.2h1v1.6h-1zM553.4 437.5h1v1.6h-1zM553.4 445.8h1v1.6h-1zM553.4 454.1h1v1.6h-1zM553.4 462.4h1v1.6h-1zM561.7 5.9h1v1.6h-1zM561.7 14.2h1v1.6h-1zM561.7 22.5h1v1.6h-1zM561.7 30.8h1v1.6h-1zM561.7 39.1h1v1.6h-1zM561.7 47.4h1v1.6h-1zM561.7 55.7h1v1.6h-1zM561.7 64.0h1v1.6h-1zM561.7 72.3h1v1.6h-1zM561.7 80.6h1v1.6h-1zM561.7 88.9h1v1.6h-1zM561.7 97.2h1v1.6h-1zM561.7 105.5h1v1.6h-1zM561.7 113.8h1v1.6h-1zM561.7 122.1h1v1.6h-1zM561.7 130.4h1v1.6h-1zM561.7 138.7h1v1.6h-1zM561.7 147.0h1v1.6h-1zM561.7 155.3h1v1.6h-1zM561.7 163.6h1v1.6h-1zM561.7 171.9h1v1.6h-1zM561.7 180.2h1v1.6h-1zM561.7 188.5h1v1.6h-1zM561.7 196.8h1v1.6h-1zM561.7 205.1h1v1.6h-1zM561.7 213.4h1v1.6h-1zM561.7 221.7h1v1.6h-1zM561.7 230.0h1v1.6h-1zM561.7 238.3h1v1.6h-1zM561.7 246.6h1v1.6h-1zM561.7 254.9h1v1.6h-1zM561.7 263.2h1v1.6h-1zM561.7 271.5h1v1.6h-1zM561.7 279.8h1v1.6h-1zM561.7 288.1h1v1.6h-1zM561.7 296.4h1v1.6h-1zM561.7 304.7h1v1.6h-1zM561.7 313.0h1v1.6h-1zM561.7 321.3h1v1.6h-1zM561.7 329.6h1v1.6h-1zM561.7 337.9h1v1.6h-1zM561.7 346.2h1v1.6h-1zM561.7 354.5h1v1.6h-1zM561.7 362.8h1v1.6h-1zM561.7 371.1h1v1.6h-1zM561.7 379.4h1v1.6h-1zM561.7 387.7h1v1.6h-1zM561.7 396.0h1v1.6h-1zM561.7 404.3h1v1.6h-1zM561.7 412.6h1v1.6h-1zM561.7 420.9h1v1.6h-1zM561.7 429.2h1v1.6h-1zM561.7 437.5h1v1.6h-1zM561.7 445.8h1v1.6h-1zM561.7 454.1h1v1.6h-1zM561.7 462.4h1v1.6h-1zM570.0 5.9h1v1.6h-1zM570.0 14.2h1v1.6h-1zM570.0 22.5h1v1.6h-1zM570.0 30.8h1v1.6h-1zM570.0 39.1h1v1.6h-1zM570.0 47.4h1v1.6h-1zM570.0 55.7h1v1.6h-1zM570.0 64.0h1v1.6h-1zM570.0 72.3h1v1.6h-1zM570.0 80.6h1v1.6h-1zM570.0 88.9h1v1.6h-1zM570.0 97.2h1v1.6h-1zM570.0 105.5h1v1.6h-1zM570.0 113.8h1v1.6h-1zM570.0 122.1h1v1.6h-1zM570.0 130.4h1v1.6h-1zM570.0 138.7h1v1.6h-1zM570.0 147.0h1v1.6h-1zM570.0 155.3h1v1.6h-1zM570.0 163.6h1v1.6h-1zM570.0 171.9h1v1.6h-1zM570.0 180.2h1v1.6h-1zM570.0 188.5h1v1.6h-1zM570.0 196.8h1v1.6h-1zM570.0 205.1h1v1.6h-1zM570.0 213.4h1v1.6h-1zM570.0 221.7h1v1.6h-1zM570.0 230.0h1v1.6h-1zM570.0 238.3h1v1.6h-1zM570.0 246.6h1v1.6h-1zM570.0 254.9h1v1.6h-1zM570.0 263.2h1v1.6h-1zM570.0 271.5h1v1.6h-1zM570.0 279.8h1v1.6h-1zM570.0 288.1h1v1.6h-1zM570.0 296.4h1v1.6h-1zM570.0 304.7h1v1.6h-1zM570.0 313.0h1v1.6h-1zM570.0 321.3h1v1.6h-1zM570.0 329.6h1v1.6h-1zM570.0 337.9h1v1.6h-1zM570.0 346.2h1v1.6h-1zM570.0 354.5h1v1.6h-1zM570.0 362.8h1v1.6h-1zM570.0 371.1h1v1.6h-1zM570.0 379.4h1v1.6h-1zM570.0 387.7h1v1.6h-1zM570.0 396.0h1v1.6h-1zM570.0 404.3h1v1.6h-1zM570.0 412.6h1v1.6h-1zM570.0 420.9h1v1.6h-1zM570.0 429.2h1v1.6h-1zM570.0 437.5h1v1.6h-1zM570.0 445.8h1v1.6h-1zM570.0 454.1h1v1.6h-1zM570.0 462.4h1v1.6h-1zM578.3 5.9h1v1.6h-1zM578.3 14.2h1v1.6h-1zM578.3 22.5h1v1.6h-1zM578.3 30.8h1v1.6h-1zM578.3 39.1h1v1.6h-1zM578.3 47.4h1v1.6h-1zM578.3 55.7h1v1.6h-1zM578.3 64.0h1v1.6h-1zM578.3 72.3h1v1.6h-1zM578.3 80.6h1v1.6h-1zM578.3 88.9h1v1.6h-1zM578.3 97.2h1v1.6h-1zM578.3 105.5h1v1.6h-1zM578.3 113.8h1v1.6h-1zM578.3 122.1h1v1.6h-1zM578.3 130.4h1v1.6h-1zM578.3 138.7h1v1.6h-1zM578.3 147.0h1v1.6h-1zM578.3 155.3h1v1.6h-1zM578.3 163.6h1v1.6h-1zM578.3 171.9h1v1.6h-1zM578.3 180.2h1v1.6h-1zM578.3 188.5h1v1.6h-1zM578.3 196.8h1v1.6h-1zM578.3 205.1h1v1.6h-1zM578.3 213.4h1v1.6h-1zM578.3 221.7h1v1.6h-1zM578.3 230.0h1v1.6h-1zM578.3 238.3h1v1.6h-1zM578.3 246.6h1v1.6h-1zM578.3 254.9h1v1.6h-1zM578.3 263.2h1v1.6h-1zM578.3 271.5h1v1.6h-1zM578.3 279.8h1v1.6h-1zM578.3 288.1h1v1.6h-1zM578.3 296.4h1v1.6h-1zM578.3 304.7h1v1.6h-1zM578.3 313.0h1v1.6h-1zM578.3 321.3h1v1.6h-1zM578.3 329.6h1v1.6h-1zM578.3 337.9h1v1.6h-1zM578.3 346.2h1v1.6h-1zM578.3 354.5h1v1.6h-1zM578.3 362.8h1v1.6h-1zM578.3 371.1h1v1.6h-1zM578.3 379.4h1v1.6h-1zM578.3 387.7h1v1.6h-1zM578.3 396.0h1v1.6h-1zM578.3 404.3h1v1.6h-1zM578.3 412.6h1v1.6h-1zM578.3 420.9h1v1.6h-1zM578.3 429.2h1v1.6h-1zM578.3 437.5h1v1.6h-1zM578.3 445.8h1v1.6h-1zM578.3 454.1h1v1.6h-1zM578.3 462.4h1v1.6h-1zM586.6 5.9h1v1.6h-1zM586.6 14.2h1v1.6h-1zM586.6 22.5h1v1.6h-1zM586.6 30.8h1v1.6h-1zM586.6 39.1h1v1.6h-1zM586.6 47.4h1v1.6h-1zM586.6 55.7h1v1.6h-1zM586.6 64.0h1v1.6h-1zM586.6 72.3h1v1.6h-1zM586.6 80.6h1v1.6h-1zM586.6 88.9h1v1.6h-1zM586.6 97.2h1v1.6h-1zM586.6 105.5h1v1.6h-1zM586.6 113.8h1v1.6h-1zM586.6 122.1h1v1.6h-1zM586.6 130.4h1v1.6h-1zM586.6 138.7h1v1.6h-1zM586.6 147.0h1v1.6h-1zM586.6 155.3h1v1.6h-1zM586.6 163.6h1v1.6h-1zM586.6 171.9h1v1.6h-1zM586.6 180.2h1v1.6h-1zM586.6 188.5h1v1.6h-1zM586.6 196.8h1v1.6h-1zM586.6 205.1h1v1.6h-1zM586.6 213.4h1v1.6h-1zM586.6 221.7h1v1.6h-1zM586.6 230.0h1v1.6h-1zM586.6 238.3h1v1.6h-1zM586.6 246.6h1v1.6h-1zM586.6 254.9h1v1.6h-1zM586.6 263.2h1v1.6h-1zM586.6 271.5h1v1.6h-1zM586.6 279.8h1v1.6h-1zM586.6 288.1h1v1.6h-1zM586.6 296.4h1v1.6h-1zM586.6 304.7h1v1.6h-1zM586.6 313.0h1v1.6h-1zM586.6 321.3h1v1.6h-1zM586.6 329.6h1v1.6h-1zM586.6 337.9h1v1.6h-1zM586.6 346.2h1v1.6h-1zM586.6 354.5h1v1.6h-1zM586.6 362.8h1v1.6h-1zM586.6 371.1h1v1.6h-1zM586.6 379.4h1v1.6h-1zM586.6 387.7h1v1.6h-1zM586.6 396.0h1v1.6h-1zM586.6 404.3h1v1.6h-1zM586.6 412.6h1v1.6h-1zM586.6 420.9h1v1.6h-1zM586.6 429.2h1v1.6h-1zM586.6 437.5h1v1.6h-1zM586.6 445.8h1v1.6h-1zM586.6 454.1h1v1.6h-1zM586.6 462.4h1v1.6h-1zM594.9 5.9h1v1.6h-1zM594.9 14.2h1v1.6h-1zM594.9 22.5h1v1.6h-1zM594.9 30.8h1v1.6h-1zM594.9 39.1h1v1.6h-1zM594.9 47.4h1v1.6h-1zM594.9 55.7h1v1.6h-1zM594.9 64.0h1v1.6h-1zM594.9 72.3h1v1.6h-1zM594.9 80.6h1v1.6h-1zM594.9 88.9h1v1.6h-1zM594.9 97.2h1v1.6h-1zM594.9 105.5h1v1.6h-1zM594.9 113.8h1v1.6h-1zM594.9 122.1h1v1.6h-1zM594.9 130.4h1v1.6h-1zM594.9 138.7h1v1.6h-1zM594.9 147.0h1v1.6h-1zM594.9 155.3h1v1.6h-1zM594.9 163.6h1v1.6h-1zM594.9 171.9h1v1.6h-1zM594.9 180.2h1v1.6h-1zM594.9 188.5h1v1.6h-1zM594.9 196.8h1v1.6h-1zM594.9 205.1h1v1.6h-1zM594.9 213.4h1v1.6h-1zM594.9 221.7h1v1.6h-1zM594.9 230.0h1v1.6h-1zM594.9 238.3h1v1.6h-1zM594.9 246.6h1v1.6h-1zM594.9 254.9h1v1.6h-1zM594.9 263.2h1v1.6h-1zM594.9 271.5h1v1.6h-1zM594.9 279.8h1v1.6h-1zM594.9 288.1h1v1.6h-1zM594.9 296.4h1v1.6h-1zM594.9 304.7h1v1.6h-1zM594.9 313.0h1v1.6h-1zM594.9 321.3h1v1.6h-1zM594.9 329.6h1v1.6h-1zM594.9 337.9h1v1.6h-1zM594.9 346.2h1v1.6h-1zM594.9 354.5h1v1.6h-1zM594.9 362.8h1v1.6h-1zM594.9 371.1h1v1.6h-1zM594.9 379.4h1v1.6h-1zM594.9 387.7h1v1.6h-1zM594.9 396.0h1v1.6h-1zM594.9 404.3h1v1.6h-1zM594.9 412.6h1v1.6h-1zM594.9 420.9h1v1.6h-1zM594.9 429.2h1v1.6h-1zM594.9 437.5h1v1.6h-1zM594.9 445.8h1v1.6h-1zM594.9 454.1h1v1.6h-1zM594.9 462.4h1v1.6h-1zM603.2 5.9h1v1.6h-1zM603.2 14.2h1v1.6h-1zM603.2 22.5h1v1.6h-1zM603.2 30.8h1v1.6h-1zM603.2 39.1h1v1.6h-1zM603.2 47.4h1v1.6h-1zM603.2 55.7h1v1.6h-1zM603.2 64.0h1v1.6h-1zM603.2 72.3h1v1.6h-1zM603.2 80.6h1v1.6h-1zM603.2 88.9h1v1.6h-1zM603.2 97.2h1v1.6h-1zM603.2 105.5h1v1.6h-1zM603.2 113.8h1v1.6h-1zM603.2 122.1h1v1.6h-1zM603.2 130.4h1v1.6h-1zM603.2 138.7h1v1.6h-1zM603.2 147.0h1v1.6h-1zM603.2 155.3h1v1.6h-1zM603.2 163.6h1v1.6h-1zM603.2 171.9h1v1.6h-1zM603.2 180.2h1v1.6h-1zM603.2 188.5h1v1.6h-1zM603.2 196.8h1v1.6h-1zM603.2 205.1h1v1.6h-1zM603.2 213.4h1v1.6h-1zM603.2 221.7h1v1.6h-1zM603.2 230.0h1v1.6h-1zM603.2 238.3h1v1.6h-1zM603.2 246.6h1v1.6h-1zM603.2 254.9h1v1.6h-1zM603.2 263.2h1v1.6h-1zM603.2 271.5h1v1.6h-1zM603.2 279.8h1v1.6h-1zM603.2 288.1h1v1.6h-1zM603.2 296.4h1v1.6h-1zM603.2 304.7h1v1.6h-1zM603.2 313.0h1v1.6h-1zM603.2 321.3h1v1.6h-1zM603.2 329.6h1v1.6h-1zM603.2 337.9h1v1.6h-1zM603.2 346.2h1v1.6h-1zM603.2 354.5h1v1.6h-1zM603.2 362.8h1v1.6h-1zM603.2 371.1h1v1.6h-1zM603.2 379.4h1v1.6h-1zM603.2 387.7h1v1.6h-1zM603.2 396.0h1v1.6h-1zM603.2 404.3h1v1.6h-1zM603.2 412.6h1v1.6h-1zM603.2 420.9h1v1.6h-1zM603.2 429.2h1v1.6h-1zM603.2 437.5h1v1.6h-1zM603.2 445.8h1v1.6h-1zM603.2 454.1h1v1.6h-1zM603.2 462.4h1v1.6h-1zM611.5 5.9h1v1.6h-1zM611.5 14.2h1v1.6h-1zM611.5 22.5h1v1.6h-1zM611.5 30.8h1v1.6h-1zM611.5 39.1h1v1.6h-1zM611.5 47.4h1v1.6h-1zM611.5 55.7h1v1.6h-1zM611.5 64.0h1v1.6h-1zM611.5 72.3h1v1.6h-1zM611.5 80.6h1v1.6h-1zM611.5 88.9h1v1.6h-1zM611.5 97.2h1v1.6h-1zM611.5 105.5h1v1.6h-1zM611.5 113.8h1v1.6h-1zM611.5 122.1h1v1.6h-1zM611.5 130.4h1v1.6h-1zM611.5 138.7h1v1.6h-1zM611.5 147.0h1v1.6h-1zM611.5 155.3h1v1.6h-1zM611.5 163.6h1v1.6h-1zM611.5 171.9h1v1.6h-1zM611.5 180.2h1v1.6h-1zM611.5 188.5h1v1.6h-1zM611.5 196.8h1v1.6h-1zM611.5 205.1h1v1.6h-1zM611.5 213.4h1v1.6h-1zM611.5 221.7h1v1.6h-1zM611.5 230.0h1v1.6h-1zM611.5 238.3h1v1.6h-1zM611.5 246.6h1v1.6h-1zM611.5 254.9h1v1.6h-1zM611.5 263.2h1v1.6h-1zM611.5 271.5h1v1.6h-1zM611.5 279.8h1v1.6h-1zM611.5 288.1h1v1.6h-1zM611.5 296.4h1v1.6h-1zM611.5 304.7h1v1.6h-1zM611.5 313.0h1v1.6h-1zM611.5 321.3h1v1.6h-1zM611.5 329.6h1v1.6h-1zM611.5 337.9h1v1.6h-1zM611.5 346.2h1v1.6h-1zM611.5 354.5h1v1.6h-1zM611.5 362.8h1v1.6h-1zM611.5 371.1h1v1.6h-1zM611.5 379.4h1v1.6h-1zM611.5 387.7h1v1.6h-1zM611.5 396.0h1v1.6h-1zM611.5 404.3h1v1.6h-1zM611.5 412.6h1v1.6h-1zM611.5 420.9h1v1.6h-1zM611.5 429.2h1v1.6h-1zM611.5 437.5h1v1.6h-1zM611.5 445.8h1v1.6h-1zM611.5 454.1h1v1.6h-1zM611.5 462.4h1v1.6h-1zM619.8 5.9h1v1.6h-1zM619.8 14.2h1v1.6h-1zM619.8 22.5h1v1.6h-1zM619.8 30.8h1v1.6h-1zM619.8 39.1h1v1.6h-1zM619.8 47.4h1v1.6h-1zM619.8 55.7h1v1.6h-1zM619.8 64.0h1v1.6h-1zM619.8 72.3h1v1.6h-1zM619.8 80.6h1v1.6h-1zM619.8 88.9h1v1.6h-1zM619.8 97.2h1v1.6h-1zM619.8 105.5h1v1.6h-1zM619.8 113.8h1v1.6h-1zM619.8 122.1h1v1.6h-1zM619.8 130.4h1v1.6h-1zM619.8 138.7h1v1.6h-1zM619.8 147.0h1v1.6h-1zM619.8 155.3h1v1.6h-1zM619.8 163.6h1v1.6h-1zM619.8 171.9h1v1.6h-1zM619.8 180.2h1v1.6h-1zM619.8 188.5h1v1.6h-1zM619.8 196.8h1v1.6h-1zM619.8 205.1h1v1.6h-1zM619.8 213.4h1v1.6h-1zM619.8 221.7h1v1.6h-1zM619.8 230.0h1v1.6h-1zM619.8 238.3h1v1.6h-1zM619.8 246.6h1v1.6h-1zM619.8 254.9h1v1.6h-1zM619.8 263.2h1v1.6h-1zM619.8 271.5h1v1.6h-1zM619.8 279.8h1v1.6h-1zM619.8 288.1h1v1.6h-1zM619.8 296.4h1v1.6h-1zM619.8 304.7h1v1.6h-1zM619.8 313.0h1v1.6h-1zM619.8 321.3h1v1.6h-1zM619.8 329.6h1v1.6h-1zM619.8 337.9h1v1.6h-1zM619.8 346.2h1v1.6h-1zM619.8 354.5h1v1.6h-1zM619.8 362.8h1v1.6h-1zM619.8 371.1h1v1.6h-1zM619.8 379.4h1v1.6h-1zM619.8 387.7h1v1.6h-1zM619.8 396.0h1v1.6h-1zM619.8 404.3h1v1.6h-1zM619.8 412.6h1v1.6h-1zM619.8 420.9h1v1.6h-1zM619.8 429.2h1v1.6h-1zM619.8 437.5h1v1.6h-1zM619.8 445.8h1v1.6h-1zM619.8 454.1h1v1.6h-1zM619.8 462.4h1v1.6h-1zM628.1 5.9h1v1.6h-1zM628.1 14.2h1v1.6h-1zM628.1 22.5h1v1.6h-1zM628.1 30.8h1v1.6h-1zM628.1 39.1h1v1.6h-1zM628.1 47.4h1v1.6h-1zM628.1 55.7h1v1.6h-1zM628.1 64.0h1v1.6h-1zM628.1 72.3h1v1.6h-1zM628.1 80.6h1v1.6h-1zM628.1 88.9h1v1.6h-1zM628.1 97.2h1v1.6h-1zM628.1 105.5h1v1.6h-1zM628.1 113.8h1v1.6h-1zM628.1 122.1h1v1.6h-1zM628.1 130.4h1v1.6h-1zM628.1 138.7h1v1.6h-1zM628.1 147.0h1v1.6h-1zM628.1 155.3h1v1.6h-1zM628.1 163.6h1v1.6h-1zM628.1 171.9h1v1.6h-1zM628.1 180.2h1v1.6h-1zM628.1 188.5h1v1.6h-1zM628.1 196.8h1v1.6h-1zM628.1 205.1h1v1.6h-1zM628.1 213.4h1v1.6h-1zM628.1 221.7h1v1.6h-1zM628.1 230.0h1v1.6h-1zM628.1 238.3h1v1.6h-1zM628.1 246.6h1v1.6h-1zM628.1 254.9h1v1.6h-1zM628.1 263.2h1v1.6h-1zM628.1 271.5h1v1.6h-1zM628.1 279.8h1v1.6h-1zM628.1 288.1h1v1.6h-1zM628.1 296.4h1v1.6h-1zM628.1 304.7h1v1.6h-1zM628.1 313.0h1v1.6h-1zM628.1 321.3h1v1.6h-1zM628.1 329.6h1v1.6h-1zM628.1 337.9h1v1.6h-1zM628.1 346.2h1v1.6h-1zM628.1 354.5h1v1.6h-1zM628.1 362.8h1v1.6h-1zM628.1 371.1h1v1.6h-1zM628.1 379.4h1v1.6h-1zM628.1 387.7h1v1.6h-1zM628.1 396.0h1v1.6h-1zM628.1 404.3h1v1.6h-1zM628.1 412.6h1v1.6h-1zM628.1 420.9h1v1.6h-1zM628.1 429.2h1v1.6h-1zM628.1 437.5h1v1.6h-1zM628.1 445.8h1v1.6h-1zM628.1 454.1h1v1.6h-1zM628.1 462.4h1v1.6h-1zM636.4 5.9h1v1.6h-1zM636.4 14.2h1v1.6h-1zM636.4 22.5h1v1.6h-1zM636.4 30.8h1v1.6h-1zM636.4 39.1h1v1.6h-1zM636.4 47.4h1v1.6h-1zM636.4 55.7h1v1.6h-1zM636.4 64.0h1v1.6h-1zM636.4 72.3h1v1.6h-1zM636.4 80.6h1v1.6h-1zM636.4 88.9h1v1.6h-1zM636.4 97.2h1v1.6h-1zM636.4 105.5h1v1.6h-1zM636.4 113.8h1v1.6h-1zM636.4 122.1h1v1.6h-1zM636.4 130.4h1v1.6h-1zM636.4 138.7h1v1.6h-1zM636.4 147.0h1v1.6h-1zM636.4 155.3h1v1.6h-1zM636.4 163.6h1v1.6h-1zM636.4 171.9h1v1.6h-1zM636.4 180.2h1v1.6h-1zM636.4 188.5h1v1.6h-1zM636.4 196.8h1v1.6h-1zM636.4 205.1h1v1.6h-1zM636.4 213.4h1v1.6h-1zM636.4 221.7h1v1.6h-1zM636.4 230.0h1v1.6h-1zM636.4 238.3h1v1.6h-1zM636.4 246.6h1v1.6h-1zM636.4 254.9h1v1.6h-1zM636.4 263.2h1v1.6h-1zM636.4 271.5h1v1.6h-1zM636.4 279.8h1v1.6h-1zM636.4 288.1h1v1.6h-1zM636.4 296.4h1v1.6h-1zM636.4 304.7h1v1.6h-1zM636.4 313.0h1v1.6h-1zM636.4 321.3h1v1.6h-1zM636.4 329.6h1v1.6h-1zM636.4 337.9h1v1.6h-1zM636.4 346.2h1v1.6h-1zM636.4 354.5h1v1.6h-1zM636.4 362.8h1v1.6h-1zM636.4 371.1h1v1.6h-1zM636.4 379.4h1v1.6h-1zM636.4 387.7h1v1.6h-1zM636.4 396.0h1v1.6h-1zM636.4 404.3h1v1.6h-1zM636.4 412.6h1v1.6h-1zM636.4 420.9h1v1.6h-1zM636.4 429.2h1v1.6h-1zM636.4 437.5h1v1.6h-1zM636.4 445.8h1v1.6h-1zM636.4 454.1h1v1.6h-1zM636.4 462.4h1v1.6h-1zM644.7 5.9h1v1.6h-1zM644.7 14.2h1v1.6h-1zM644.7 22.5h1v1.6h-1zM644.7 30.8h1v1.6h-1zM644.7 39.1h1v1.6h-1zM644.7 47.4h1v1.6h-1zM644.7 55.7h1v1.6h-1zM644.7 64.0h1v1.6h-1zM644.7 72.3h1v1.6h-1zM644.7 80.6h1v1.6h-1zM644.7 88.9h1v1.6h-1zM644.7 97.2h1v1.6h-1zM644.7 105.5h1v1.6h-1zM644.7 113.8h1v1.6h-1zM644.7 122.1h1v1.6h-1zM644.7 130.4h1v1.6h-1zM644.7 138.7h1v1.6h-1zM644.7 147.0h1v1.6h-1zM644.7 155.3h1v1.6h-1zM644.7 163.6h1v1.6h-1zM644.7 171.9h1v1.6h-1zM644.7 180.2h1v1.6h-1zM644.7 188.5h1v1.6h-1zM644.7 196.8h1v1.6h-1zM644.7 205.1h1v1.6h-1zM644.7 213.4h1v1.6h-1zM644.7 221.7h1v1.6h-1zM644.7 230.0h1v1.6h-1zM644.7 238.3h1v1.6h-1zM644.7 246.6h1v1.6h-1zM644.7 254.9h1v1.6h-1zM644.7 263.2h1v1.6h-1zM644.7 271.5h1v1.6h-1zM644.7 279.8h1v1.6h-1zM644.7 288.1h1v1.6h-1zM644.7 296.4h1v1.6h-1zM644.7 304.7h1v1.6h-1zM644.7 313.0h1v1.6h-1zM644.7 321.3h1v1.6h-1zM644.7 329.6h1v1.6h-1zM644.7 337.9h1v1.6h-1zM644.7 346.2h1v1.6h-1zM644.7 354.5h1v1.6h-1zM644.7 362.8h1v1.6h-1zM644.7 371.1h1v1.6h-1zM644.7 379.4h1v1.6h-1zM644.7 387.7h1v1.6h-1zM644.7 396.0h1v1.6h-1zM644.7 404.3h1v1.6h-1zM644.7 412.6h1v1.6h-1zM644.7 420.9h1v1.6h-1zM644.7 429.2h1v1.6h-1zM644.7 437.5h1v1.6h-1zM644.7 445.8h1v1.6h-1zM644.7 454.1h1v1.6h-1zM644.7 462.4h1v1.6h-1zM653.0 5.9h1v1.6h-1zM653.0 14.2h1v1.6h-1zM653.0 22.5h1v1.6h-1zM653.0 30.8h1v1.6h-1zM653.0 39.1h1v1.6h-1zM653.0 47.4h1v1.6h-1zM653.0 55.7h1v1.6h-1zM653.0 64.0h1v1.6h-1zM653.0 72.3h1v1.6h-1zM653.0 80.6h1v1.6h-1zM653.0 88.9h1v1.6h-1zM653.0 97.2h1v1.6h-1zM653.0 105.5h1v1.6h-1zM653.0 113.8h1v1.6h-1zM653.0 122.1h1v1.6h-1zM653.0 130.4h1v1.6h-1zM653.0 138.7h1v1.6h-1zM653.0 147.0h1v1.6h-1zM653.0 155.3h1v1.6h-1zM653.0 163.6h1v1.6h-1zM653.0 171.9h1v1.6h-1zM653.0 180.2h1v1.6h-1zM653.0 188.5h1v1.6h-1zM653.0 196.8h1v1.6h-1zM653.0 205.1h1v1.6h-1zM653.0 213.4h1v1.6h-1zM653.0 221.7h1v1.6h-1zM653.0 230.0h1v1.6h-1zM653.0 238.3h1v1.6h-1zM653.0 246.6h1v1.6h-1zM653.0 254.9h1v1.6h-1zM653.0 263.2h1v1.6h-1zM653.0 271.5h1v1.6h-1zM653.0 279.8h1v1.6h-1zM653.0 288.1h1v1.6h-1zM653.0 296.4h1v1.6h-1zM653.0 304.7h1v1.6h-1zM653.0 313.0h1v1.6h-1zM653.0 321.3h1v1.6h-1zM653.0 329.6h1v1.6h-1zM653.0 337.9h1v1.6h-1zM653.0 346.2h1v1.6h-1zM653.0 354.5h1v1.6h-1zM653.0 362.8h1v1.6h-1zM653.0 371.1h1v1.6h-1zM653.0 379.4h1v1.6h-1zM653.0 387.7h1v1.6h-1zM653.0 396.0h1v1.6h-1zM653.0 404.3h1v1.6h-1zM653.0 412.6h1v1.6h-1zM653.0 420.9h1v1.6h-1zM653.0 429.2h1v1.6h-1zM653.0 437.5h1v1.6h-1zM653.0 445.8h1v1.6h-1zM653.0 454.1h1v1.6h-1zM653.0 462.4h1v1.6h-1zM661.3 5.9h1v1.6h-1zM661.3 14.2h1v1.6h-1zM661.3 22.5h1v1.6h-1zM661.3 30.8h1v1.6h-1zM661.3 39.1h1v1.6h-1zM661.3 47.4h1v1.6h-1zM661.3 55.7h1v1.6h-1zM661.3 64.0h1v1.6h-1zM661.3 72.3h1v1.6h-1zM661.3 80.6h1v1.6h-1zM661.3 88.9h1v1.6h-1zM661.3 97.2h1v1.6h-1zM661.3 105.5h1v1.6h-1zM661.3 113.8h1v1.6h-1zM661.3 122.1h1v1.6h-1zM661.3 130.4h1v1.6h-1zM661.3 138.7h1v1.6h-1zM661.3 147.0h1v1.6h-1zM661.3 155.3h1v1.6h-1zM661.3 163.6h1v1.6h-1zM661.3 171.9h1v1.6h-1zM661.3 180.2h1v1.6h-1zM661.3 188.5h1v1.6h-1zM661.3 196.8h1v1.6h-1zM661.3 205.1h1v1.6h-1zM661.3 213.4h1v1.6h-1zM661.3 221.7h1v1.6h-1zM661.3 230.0h1v1.6h-1zM661.3 238.3h1v1.6h-1zM661.3 246.6h1v1.6h-1zM661.3 254.9h1v1.6h-1zM661.3 263.2h1v1.6h-1zM661.3 271.5h1v1.6h-1zM661.3 279.8h1v1.6h-1zM661.3 288.1h1v1.6h-1zM661.3 296.4h1v1.6h-1zM661.3 304.7h1v1.6h-1zM661.3 313.0h1v1.6h-1zM661.3 321.3h1v1.6h-1zM661.3 329.6h1v1.6h-1zM661.3 337.9h1v1.6h-1zM661.3 346.2h1v1.6h-1zM661.3 354.5h1v1.6h-1zM661.3 362.8h1v1.6h-1zM661.3 371.1h1v1.6h-1zM661.3 379.4h1v1.6h-1zM661.3 387.7h1v1.6h-1zM661.3 396.0h1v1.6h-1zM661.3 404.3h1v1.6h-1zM661.3 412.6h1v1.6h-1zM661.3 420.9h1v1.6h-1zM661.3 429.2h1v1.6h-1zM661.3 437.5h1v1.6h-1zM661.3 445.8h1v1.6h-1zM661.3 454.1h1v1.6h-1zM661.3 462.4h1v1.6h-1zM669.6 5.9h1v1.6h-1zM669.6 14.2h1v1.6h-1zM669.6 22.5h1v1.6h-1zM669.6 30.8h1v1.6h-1zM669.6 39.1h1v1.6h-1zM669.6 47.4h1v1.6h-1zM669.6 55.7h1v1.6h-1zM669.6 64.0h1v1.6h-1zM669.6 72.3h1v1.6h-1zM669.6 80.6h1v1.6h-1zM669.6 88.9h1v1.6h-1zM669.6 97.2h1v1.6h-1zM669.6 105.5h1v1.6h-1zM669.6 113.8h1v1.6h-1zM669.6 122.1h1v1.6h-1zM669.6 130.4h1v1.6h-1zM669.6 138.7h1v1.6h-1zM669.6 147.0h1v1.6h-1zM669.6 155.3h1v1.6h-1zM669.6 163.6h1v1.6h-1zM669.6 171.9h1v1.6h-1zM669.6 180.2h1v1.6h-1zM669.6 188.5h1v1.6h-1zM669.6 196.8h1v1.6h-1zM669.6 205.1h1v1.6h-1zM669.6 213.4h1v1.6h-1zM669.6 221.7h1v1.6h-1zM669.6 230.0h1v1.6h-1zM669.6 238.3h1v1.6h-1zM669.6 246.6h1v1.6h-1zM669.6 254.9h1v1.6h-1zM669.6 263.2h1v1.6h-1zM669.6 271.5h1v1.6h-1zM669.6 279.8h1v1.6h-1zM669.6 288.1h1v1.6h-1zM669.6 296.4h1v1.6h-1zM669.6 304.7h1v1.6h-1zM669.6 313.0h1v1.6h-1zM669.6 321.3h1v1.6h-1zM669.6 329.6h1v1.6h-1zM669.6 337.9h1v1.6h-1zM669.6 346.2h1v1.6h-1zM669.6 354.5h1v1.6h-1zM669.6 362.8h1v1.6h-1zM669.6 371.1h1v1.6h-1zM669.6 379.4h1v1.6h-1zM669.6 387.7h1v1.6h-1zM669.6 396.0h1v1.6h-1zM669.6 404.3h1v1.6h-1zM669.6 412.6h1v1.6h-1zM669.6 420.9h1v1.6h-1zM669.6 429.2h1v1.6h-1zM669.6 437.5h1v1.6h-1zM669.6 445.8h1v1.6h-1zM669.6 454.1h1v1.6h-1zM669.6 462.4h1v1.6h-1zM677.9 5.9h1v1.6h-1zM677.9 14.2h1v1.6h-1zM677.9 22.5h1v1.6h-1zM677.9 30.8h1v1.6h-1zM677.9 39.1h1v1.6h-1zM677.9 47.4h1v1.6h-1zM677.9 55.7h1v1.6h-1zM677.9 64.0h1v1.6h-1zM677.9 72.3h1v1.6h-1zM677.9 80.6h1v1.6h-1zM677.9 88.9h1v1.6h-1zM677.9 97.2h1v1.6h-1zM677.9 105.5h1v1.6h-1zM677.9 113.8h1v1.6h-1zM677.9 122.1h1v1.6h-1zM677.9 130.4h1v1.6h-1zM677.9 138.7h1v1.6h-1zM677.9 147.0h1v1.6h-1zM677.9 155.3h1v1.6h-1zM677.9 163.6h1v1.6h-1zM677.9 171.9h1v1.6h-1zM677.9 180.2h1v1.6h-1zM677.9 188.5h1v1.6h-1zM677.9 196.8h1v1.6h-1zM677.9 205.1h1v1.6h-1zM677.9 213.4h1v1.6h-1zM677.9 221.7h1v1.6h-1zM677.9 230.0h1v1.6h-1zM677.9 238.3h1v1.6h-1zM677.9 246.6h1v1.6h-1zM677.9 254.9h1v1.6h-1zM677.9 263.2h1v1.6h-1zM677.9 271.5h1v1.6h-1zM677.9 279.8h1v1.6h-1zM677.9 288.1h1v1.6h-1zM677.9 296.4h1v1.6h-1zM677.9 304.7h1v1.6h-1zM677.9 313.0h1v1.6h-1zM677.9 321.3h1v1.6h-1zM677.9 329.6h1v1.6h-1zM677.9 337.9h1v1.6h-1zM677.9 346.2h1v1.6h-1zM677.9 354.5h1v1.6h-1zM677.9 362.8h1v1.6h-1zM677.9 371.1h1v1.6h-1zM677.9 379.4h1v1.6h-1zM677.9 387.7h1v1.6h-1zM677.9 396.0h1v1.6h-1zM677.9 404.3h1v1.6h-1zM677.9 412.6h1v1.6h-1zM677.9 420.9h1v1.6h-1zM677.9 429.2h1v1.6h-1zM677.9 437.5h1v1.6h-1zM677.9 445.8h1v1.6h-1zM677.9 454.1h1v1.6h-1zM677.9 462.4h1v1.6h-1zM686.2 5.9h1v1.6h-1zM686.2 14.2h1v1.6h-1zM686.2 22.5h1v1.6h-1zM686.2 30.8h1v1.6h-1zM686.2 39.1h1v1.6h-1zM686.2 47.4h1v1.6h-1zM686.2 55.7h1v1.6h-1zM686.2 64.0h1v1.6h-1zM686.2 72.3h1v1.6h-1zM686.2 80.6h1v1.6h-1zM686.2 88.9h1v1.6h-1zM686.2 97.2h1v1.6h-1zM686.2 105.5h1v1.6h-1zM686.2 113.8h1v1.6h-1zM686.2 122.1h1v1.6h-1zM686.2 130.4h1v1.6h-1zM686.2 138.7h1v1.6h-1zM686.2 147.0h1v1.6h-1zM686.2 155.3h1v1.6h-1zM686.2 163.6h1v1.6h-1zM686.2 171.9h1v1.6h-1zM686.2 180.2h1v1.6h-1zM686.2 188.5h1v1.6h-1zM686.2 196.8h1v1.6h-1zM686.2 205.1h1v1.6h-1zM686.2 213.4h1v1.6h-1zM686.2 221.7h1v1.6h-1zM686.2 230.0h1v1.6h-1zM686.2 238.3h1v1.6h-1zM686.2 246.6h1v1.6h-1zM686.2 254.9h1v1.6h-1zM686.2 263.2h1v1.6h-1zM686.2 271.5h1v1.6h-1zM686.2 279.8h1v1.6h-1zM686.2 288.1h1v1.6h-1zM686.2 296.4h1v1.6h-1zM686.2 304.7h1v1.6h-1zM686.2 313.0h1v1.6h-1zM686.2 321.3h1v1.6h-1zM686.2 329.6h1v1.6h-1zM686.2 337.9h1v1.6h-1zM686.2 346.2h1v1.6h-1zM686.2 354.5h1v1.6h-1zM686.2 362.8h1v1.6h-1zM686.2 371.1h1v1.6h-1zM686.2 379.4h1v1.6h-1zM686.2 387.7h1v1.6h-1zM686.2 396.0h1v1.6h-1zM686.2 404.3h1v1.6h-1zM686.2 412.6h1v1.6h-1zM686.2 420.9h1v1.6h-1zM686.2 429.2h1v1.6h-1zM686.2 437.5h1v1.6h-1zM686.2 445.8h1v1.6h-1zM686.2 454.1h1v1.6h-1zM686.2 462.4h1v1.6h-1zM694.5 5.9h1v1.6h-1zM694.5 14.2h1v1.6h-1zM694.5 22.5h1v1.6h-1zM694.5 30.8h1v1.6h-1zM694.5 39.1h1v1.6h-1zM694.5 47.4h1v1.6h-1zM694.5 55.7h1v1.6h-1zM694.5 64.0h1v1.6h-1zM694.5 72.3h1v1.6h-1zM694.5 80.6h1v1.6h-1zM694.5 88.9h1v1.6h-1zM694.5 97.2h1v1.6h-1zM694.5 105.5h1v1.6h-1zM694.5 113.8h1v1.6h-1zM694.5 122.1h1v1.6h-1zM694.5 130.4h1v1.6h-1zM694.5 138.7h1v1.6h-1zM694.5 147.0h1v1.6h-1zM694.5 155.3h1v1.6h-1zM694.5 163.6h1v1.6h-1zM694.5 171.9h1v1.6h-1zM694.5 180.2h1v1.6h-1zM694.5 188.5h1v1.6h-1zM694.5 196.8h1v1.6h-1zM694.5 205.1h1v1.6h-1zM694.5 213.4h1v1.6h-1zM694.5 221.7h1v1.6h-1zM694.5 230.0h1v1.6h-1zM694.5 238.3h1v1.6h-1zM694.5 246.6h1v1.6h-1zM694.5 254.9h1v1.6h-1zM694.5 263.2h1v1.6h-1zM694.5 271.5h1v1.6h-1zM694.5 279.8h1v1.6h-1zM694.5 288.1h1v1.6h-1zM694.5 296.4h1v1.6h-1zM694.5 304.7h1v1.6h-1zM694.5 313.0h1v1.6h-1zM694.5 321.3h1v1.6h-1zM694.5 329.6h1v1.6h-1zM694.5 337.9h1v1.6h-1zM694.5 346.2h1v1.6h-1zM694.5 354.5h1v1.6h-1zM694.5 362.8h1v1.6h-1zM694.5 371.1h1v1.6h-1zM694.5 379.4h1v1.6h-1zM694.5 387.7h1v1.6h-1zM694.5 396.0h1v1.6h-1zM694.5 404.3h1v1.6h-1zM694.5 412.6h1v1.6h-1zM694.5 420.9h1v1.6h-1zM694.5 429.2h1v1.6h-1zM694.5 437.5h1v1.6h-1zM694.5 445.8h1v1.6h-1zM694.5 454.1h1v1.6h-1zM694.5 462.4h1v1.6h-1zM702.8 5.9h1v1.6h-1zM702.8 14.2h1v1.6h-1zM702.8 22.5h1v1.6h-1zM702.8 30.8h1v1.6h-1zM702.8 39.1h1v1.6h-1zM702.8 47.4h1v1.6h-1zM702.8 55.7h1v1.6h-1zM702.8 64.0h1v1.6h-1zM702.8 72.3h1v1.6h-1zM702.8 80.6h1v1.6h-1zM702.8 88.9h1v1.6h-1zM702.8 97.2h1v1.6h-1zM702.8 105.5h1v1.6h-1zM702.8 113.8h1v1.6h-1zM702.8 122.1h1v1.6h-1zM702.8 130.4h1v1.6h-1zM702.8 138.7h1v1.6h-1zM702.8 147.0h1v1.6h-1zM702.8 155.3h1v1.6h-1zM702.8 163.6h1v1.6h-1zM702.8 171.9h1v1.6h-1zM702.8 180.2h1v1.6h-1zM702.8 188.5h1v1.6h-1zM702.8 196.8h1v1.6h-1zM702.8 205.1h1v1.6h-1zM702.8 213.4h1v1.6h-1zM702.8 221.7h1v1.6h-1zM702.8 230.0h1v1.6h-1zM702.8 238.3h1v1.6h-1zM702.8 246.6h1v1.6h-1zM702.8 254.9h1v1.6h-1zM702.8 263.2h1v1.6h-1zM702.8 271.5h1v1.6h-1zM702.8 279.8h1v1.6h-1zM702.8 288.1h1v1.6h-1zM702.8 296.4h1v1.6h-1zM702.8 304.7h1v1.6h-1zM702.8 313.0h1v1.6h-1zM702.8 321.3h1v1.6h-1zM702.8 329.6h1v1.6h-1zM702.8 337.9h1v1.6h-1zM702.8 346.2h1v1.6h-1zM702.8 354.5h1v1.6h-1zM702.8 362.8h1v1.6h-1zM702.8 371.1h1v1.6h-1zM702.8 379.4h1v1.6h-1zM702.8 387.7h1v1.6h-1zM702.8 396.0h1v1.6h-1zM702.8 404.3h1v1.6h-1zM702.8 412.6h1v1.6h-1zM702.8 420.9h1v1.6h-1zM702.8 429.2h1v1.6h-1zM702.8 437.5h1v1.6h-1zM702.8 445.8h1v1.6h-1zM702.8 454.1h1v1.6h-1zM702.8 462.4h1v1.6h-1zM711.1 5.9h1v1.6h-1zM711.1 14.2h1v1.6h-1zM711.1 22.5h1v1.6h-1zM711.1 30.8h1v1.6h-1zM711.1 39.1h1v1.6h-1zM711.1 47.4h1v1.6h-1zM711.1 55.7h1v1.6h-1zM711.1 64.0h1v1.6h-1zM711.1 72.3h1v1.6h-1zM711.1 80.6h1v1.6h-1zM711.1 88.9h1v1.6h-1zM711.1 97.2h1v1.6h-1zM711.1 105.5h1v1.6h-1zM711.1 113.8h1v1.6h-1zM711.1 122.1h1v1.6h-1zM711.1 130.4h1v1.6h-1zM711.1 138.7h1v1.6h-1zM711.1 147.0h1v1.6h-1zM711.1 155.3h1v1.6h-1zM711.1 163.6h1v1.6h-1zM711.1 171.9h1v1.6h-1zM711.1 180.2h1v1.6h-1zM711.1 188.5h1v1.6h-1zM711.1 196.8h1v1.6h-1zM711.1 205.1h1v1.6h-1zM711.1 213.4h1v1.6h-1zM711.1 221.7h1v1.6h-1zM711.1 230.0h1v1.6h-1zM711.1 238.3h1v1.6h-1zM711.1 246.6h1v1.6h-1zM711.1 254.9h1v1.6h-1zM711.1 263.2h1v1.6h-1zM711.1 271.5h1v1.6h-1zM711.1 279.8h1v1.6h-1zM711.1 288.1h1v1.6h-1zM711.1 296.4h1v1.6h-1zM711.1 304.7h1v1.6h-1zM711.1 313.0h1v1.6h-1zM711.1 321.3h1v1.6h-1zM711.1 329.6h1v1.6h-1zM711.1 337.9h1v1.6h-1zM711.1 346.2h1v1.6h-1zM711.1 354.5h1v1.6h-1zM711.1 362.8h1v1.6h-1zM711.1 371.1h1v1.6h-1zM711.1 379.4h1v1.6h-1zM711.1 387.7h1v1.6h-1zM711.1 396.0h1v1.6h-1zM711.1 404.3h1v1.6h-1zM711.1 412.6h1v1.6h-1zM711.1 420.9h1v1.6h-1zM711.1 429.2h1v1.6h-1zM711.1 437.5h1v1.6h-1zM711.1 445.8h1v1.6h-1zM711.1 454.1h1v1.6h-1zM711.1 462.4h1v1.6h-1zM719.4 5.9h1v1.6h-1zM719.4 14.2h1v1.6h-1zM719.4 22.5h1v1.6h-1zM719.4 30.8h1v1.6h-1zM719.4 39.1h1v1.6h-1zM719.4 47.4h1v1.6h-1zM719.4 55.7h1v1.6h-1zM719.4 64.0h1v1.6h-1zM719.4 72.3h1v1.6h-1zM719.4 80.6h1v1.6h-1zM719.4 88.9h1v1.6h-1zM719.4 97.2h1v1.6h-1zM719.4 105.5h1v1.6h-1zM719.4 113.8h1v1.6h-1zM719.4 122.1h1v1.6h-1zM719.4 130.4h1v1.6h-1zM719.4 138.7h1v1.6h-1zM719.4 147.0h1v1.6h-1zM719.4 155.3h1v1.6h-1zM719.4 163.6h1v1.6h-1zM719.4 171.9h1v1.6h-1zM719.4 180.2h1v1.6h-1zM719.4 188.5h1v1.6h-1zM719.4 196.8h1v1.6h-1zM719.4 205.1h1v1.6h-1zM719.4 213.4h1v1.6h-1zM719.4 221.7h1v1.6h-1zM719.4 230.0h1v1.6h-1zM719.4 238.3h1v1.6h-1zM719.4 246.6h1v1.6h-1zM719.4 254.9h1v1.6h-1zM719.4 263.2h1v1.6h-1zM719.4 271.5h1v1.6h-1zM719.4 279.8h1v1.6h-1zM719.4 288.1h1v1.6h-1zM719.4 296.4h1v1.6h-1zM719.4 304.7h1v1.6h-1zM719.4 313.0h1v1.6h-1zM719.4 321.3h1v1.6h-1zM719.4 329.6h1v1.6h-1zM719.4 337.9h1v1.6h-1zM719.4 346.2h1v1.6h-1zM719.4 354.5h1v1.6h-1zM719.4 362.8h1v1.6h-1zM719.4 371.1h1v1.6h-1zM719.4 379.4h1v1.6h-1zM719.4 387.7h1v1.6h-1zM719.4 396.0h1v1.6h-1zM719.4 404.3h1v1.6h-1zM719.4 412.6h1v1.6h-1zM719.4 420.9h1v1.6h-1zM719.4 429.2h1v1.6h-1zM719.4 437.5h1v1.6h-1zM719.4 445.8h1v1.6h-1zM719.4 454.1h1v1.6h-1zM719.4 462.4h1v1.6h-1zM727.7 5.9h1v1.6h-1zM727.7 14.2h1v1.6h-1zM727.7 22.5h1v1.6h-1zM727.7 30.8h1v1.6h-1zM727.7 39.1h1v1.6h-1zM727.7 47.4h1v1.6h-1zM727.7 55.7h1v1.6h-1zM727.7 64.0h1v1.6h-1zM727.7 72.3h1v1.6h-1zM727.7 80.6h1v1.6h-1zM727.7 88.9h1v1.6h-1zM727.7 97.2h1v1.6h-1zM727.7 105.5h1v1.6h-1zM727.7 113.8h1v1.6h-1zM727.7 122.1h1v1.6h-1zM727.7 130.4h1v1.6h-1zM727.7 138.7h1v1.6h-1zM727.7 147.0h1v1.6h-1zM727.7 155.3h1v1.6h-1zM727.7 163.6h1v1.6h-1zM727.7 171.9h1v1.6h-1zM727.7 180.2h1v1.6h-1zM727.7 188.5h1v1.6h-1zM727.7 196.8h1v1.6h-1zM727.7 205.1h1v1.6h-1zM727.7 213.4h1v1.6h-1zM727.7 221.7h1v1.6h-1zM727.7 230.0h1v1.6h-1zM727.7 238.3h1v1.6h-1zM727.7 246.6h1v1.6h-1zM727.7 254.9h1v1.6h-1zM727.7 263.2h1v1.6h-1zM727.7 271.5h1v1.6h-1zM727.7 279.8h1v1.6h-1zM727.7 288.1h1v1.6h-1zM727.7 296.4h1v1.6h-1zM727.7 304.7h1v1.6h-1zM727.7 313.0h1v1.6h-1zM727.7 321.3h1v1.6h-1zM727.7 329.6h1v1.6h-1zM727.7 337.9h1v1.6h-1zM727.7 346.2h1v1.6h-1zM727.7 354.5h1v1.6h-1zM727.7 362.8h1v1.6h-1zM727.7 371.1h1v1.6h-1zM727.7 379.4h1v1.6h-1zM727.7 387.7h1v1.6h-1zM727.7 396.0h1v1.6h-1zM727.7 404.3h1v1.6h-1zM727.7 412.6h1v1.6h-1zM727.7 420.9h1v1.6h-1zM727.7 429.2h1v1.6h-1zM727.7 437.5h1v1.6h-1zM727.7 445.8h1v1.6h-1zM727.7 454.1h1v1.6h-1zM727.7 462.4h1v1.6h-1zM735.9 5.9h1v1.6h-1zM735.9 14.2h1v1.6h-1zM735.9 22.5h1v1.6h-1zM735.9 30.8h1v1.6h-1zM735.9 39.1h1v1.6h-1zM735.9 47.4h1v1.6h-1zM735.9 55.7h1v1.6h-1zM735.9 64.0h1v1.6h-1zM735.9 72.3h1v1.6h-1zM735.9 80.6h1v1.6h-1zM735.9 88.9h1v1.6h-1zM735.9 97.2h1v1.6h-1zM735.9 105.5h1v1.6h-1zM735.9 113.8h1v1.6h-1zM735.9 122.1h1v1.6h-1zM735.9 130.4h1v1.6h-1zM735.9 138.7h1v1.6h-1zM735.9 147.0h1v1.6h-1zM735.9 155.3h1v1.6h-1zM735.9 163.6h1v1.6h-1zM735.9 171.9h1v1.6h-1zM735.9 180.2h1v1.6h-1zM735.9 188.5h1v1.6h-1zM735.9 196.8h1v1.6h-1zM735.9 205.1h1v1.6h-1zM735.9 213.4h1v1.6h-1zM735.9 221.7h1v1.6h-1zM735.9 230.0h1v1.6h-1zM735.9 238.3h1v1.6h-1zM735.9 246.6h1v1.6h-1zM735.9 254.9h1v1.6h-1zM735.9 263.2h1v1.6h-1zM735.9 271.5h1v1.6h-1zM735.9 279.8h1v1.6h-1zM735.9 288.1h1v1.6h-1zM735.9 296.4h1v1.6h-1zM735.9 304.7h1v1.6h-1zM735.9 313.0h1v1.6h-1zM735.9 321.3h1v1.6h-1zM735.9 329.6h1v1.6h-1zM735.9 337.9h1v1.6h-1zM735.9 346.2h1v1.6h-1zM735.9 354.5h1v1.6h-1zM735.9 362.8h1v1.6h-1zM735.9 371.1h1v1.6h-1zM735.9 379.4h1v1.6h-1zM735.9 387.7h1v1.6h-1zM735.9 396.0h1v1.6h-1zM735.9 404.3h1v1.6h-1zM735.9 412.6h1v1.6h-1zM735.9 420.9h1v1.6h-1zM735.9 429.2h1v1.6h-1zM735.9 437.5h1v1.6h-1zM735.9 445.8h1v1.6h-1zM735.9 454.1h1v1.6h-1zM735.9 462.4h1v1.6h-1zM744.2 5.9h1v1.6h-1zM744.2 14.2h1v1.6h-1zM744.2 22.5h1v1.6h-1zM744.2 30.8h1v1.6h-1zM744.2 39.1h1v1.6h-1zM744.2 47.4h1v1.6h-1zM744.2 55.7h1v1.6h-1zM744.2 64.0h1v1.6h-1zM744.2 72.3h1v1.6h-1zM744.2 80.6h1v1.6h-1zM744.2 88.9h1v1.6h-1zM744.2 97.2h1v1.6h-1zM744.2 105.5h1v1.6h-1zM744.2 113.8h1v1.6h-1zM744.2 122.1h1v1.6h-1zM744.2 130.4h1v1.6h-1zM744.2 138.7h1v1.6h-1zM744.2 147.0h1v1.6h-1zM744.2 155.3h1v1.6h-1zM744.2 163.6h1v1.6h-1zM744.2 171.9h1v1.6h-1zM744.2 180.2h1v1.6h-1zM744.2 188.5h1v1.6h-1zM744.2 196.8h1v1.6h-1zM744.2 205.1h1v1.6h-1zM744.2 213.4h1v1.6h-1zM744.2 221.7h1v1.6h-1zM744.2 230.0h1v1.6h-1zM744.2 238.3h1v1.6h-1zM744.2 246.6h1v1.6h-1zM744.2 254.9h1v1.6h-1zM744.2 263.2h1v1.6h-1zM744.2 271.5h1v1.6h-1zM744.2 279.8h1v1.6h-1zM744.2 288.1h1v1.6h-1zM744.2 296.4h1v1.6h-1zM744.2 304.7h1v1.6h-1zM744.2 313.0h1v1.6h-1zM744.2 321.3h1v1.6h-1zM744.2 329.6h1v1.6h-1zM744.2 337.9h1v1.6h-1zM744.2 346.2h1v1.6h-1zM744.2 354.5h1v1.6h-1zM744.2 362.8h1v1.6h-1zM744.2 371.1h1v1.6h-1zM744.2 379.4h1v1.6h-1zM744.2 387.7h1v1.6h-1zM744.2 396.0h1v1.6h-1zM744.2 404.3h1v1.6h-1zM744.2 412.6h1v1.6h-1zM744.2 420.9h1v1.6h-1zM744.2 429.2h1v1.6h-1zM744.2 437.5h1v1.6h-1zM744.2 445.8h1v1.6h-1zM744.2 454.1h1v1.6h-1zM744.2 462.4h1v1.6h-1zM752.5 5.9h1v1.6h-1zM752.5 14.2h1v1.6h-1zM752.5 22.5h1v1.6h-1zM752.5 30.8h1v1.6h-1zM752.5 39.1h1v1.6h-1zM752.5 47.4h1v1.6h-1zM752.5 55.7h1v1.6h-1zM752.5 64.0h1v1.6h-1zM752.5 72.3h1v1.6h-1zM752.5 80.6h1v1.6h-1zM752.5 88.9h1v1.6h-1zM752.5 97.2h1v1.6h-1zM752.5 105.5h1v1.6h-1zM752.5 113.8h1v1.6h-1zM752.5 122.1h1v1.6h-1zM752.5 130.4h1v1.6h-1zM752.5 138.7h1v1.6h-1zM752.5 147.0h1v1.6h-1zM752.5 155.3h1v1.6h-1zM752.5 163.6h1v1.6h-1zM752.5 171.9h1v1.6h-1zM752.5 180.2h1v1.6h-1zM752.5 188.5h1v1.6h-1zM752.5 196.8h1v1.6h-1zM752.5 205.1h1v1.6h-1zM752.5 213.4h1v1.6h-1zM752.5 221.7h1v1.6h-1zM752.5 230.0h1v1.6h-1zM752.5 238.3h1v1.6h-1zM752.5 246.6h1v1.6h-1zM752.5 254.9h1v1.6h-1zM752.5 263.2h1v1.6h-1zM752.5 271.5h1v1.6h-1zM752.5 279.8h1v1.6h-1zM752.5 288.1h1v1.6h-1zM752.5 296.4h1v1.6h-1zM752.5 304.7h1v1.6h-1zM752.5 313.0h1v1.6h-1zM752.5 321.3h1v1.6h-1zM752.5 329.6h1v1.6h-1zM752.5 337.9h1v1.6h-1zM752.5 346.2h1v1.6h-1zM752.5 354.5h1v1.6h-1zM752.5 362.8h1v1.6h-1zM752.5 371.1h1v1.6h-1zM752.5 379.4h1v1.6h-1zM752.5 387.7h1v1.6h-1zM752.5 396.0h1v1.6h-1zM752.5 404.3h1v1.6h-1zM752.5 412.6h1v1.6h-1zM752.5 420.9h1v1.6h-1zM752.5 429.2h1v1.6h-1zM752.5 437.5h1v1.6h-1zM752.5 445.8h1v1.6h-1zM752.5 454.1h1v1.6h-1zM752.5 462.4h1v1.6h-1zM760.8 5.9h1v1.6h-1zM760.8 14.2h1v1.6h-1zM760.8 22.5h1v1.6h-1zM760.8 30.8h1v1.6h-1zM760.8 39.1h1v1.6h-1zM760.8 47.4h1v1.6h-1zM760.8 55.7h1v1.6h-1zM760.8 64.0h1v1.6h-1zM760.8 72.3h1v1.6h-1zM760.8 80.6h1v1.6h-1zM760.8 88.9h1v1.6h-1zM760.8 97.2h1v1.6h-1zM760.8 105.5h1v1.6h-1zM760.8 113.8h1v1.6h-1zM760.8 122.1h1v1.6h-1zM760.8 130.4h1v1.6h-1zM760.8 138.7h1v1.6h-1zM760.8 147.0h1v1.6h-1zM760.8 155.3h1v1.6h-1zM760.8 163.6h1v1.6h-1zM760.8 171.9h1v1.6h-1zM760.8 180.2h1v1.6h-1zM760.8 188.5h1v1.6h-1zM760.8 196.8h1v1.6h-1zM760.8 205.1h1v1.6h-1zM760.8 213.4h1v1.6h-1zM760.8 221.7h1v1.6h-1zM760.8 230.0h1v1.6h-1zM760.8 238.3h1v1.6h-1zM760.8 246.6h1v1.6h-1zM760.8 254.9h1v1.6h-1zM760.8 263.2h1v1.6h-1zM760.8 271.5h1v1.6h-1zM760.8 279.8h1v1.6h-1zM760.8 288.1h1v1.6h-1zM760.8 296.4h1v1.6h-1zM760.8 304.7h1v1.6h-1zM760.8 313.0h1v1.6h-1zM760.8 321.3h1v1.6h-1zM760.8 329.6h1v1.6h-1zM760.8 337.9h1v1.6h-1zM760.8 346.2h1v1.6h-1zM760.8 354.5h1v1.6h-1zM760.8 362.8h1v1.6h-1zM760.8 371.1h1v1.6h-1zM760.8 379.4h1v1.6h-1zM760.8 387.7h1v1.6h-1zM760.8 396.0h1v1.6h-1zM760.8 404.3h1v1.6h-1zM760.8 412.6h1v1.6h-1zM760.8 420.9h1v1.6h-1zM760.8 429.2h1v1.6h-1zM760.8 437.5h1v1.6h-1zM760.8 445.8h1v1.6h-1zM760.8 454.1h1v1.6h-1zM760.8 462.4h1v1.6h-1zM769.1 5.9h1v1.6h-1zM769.1 14.2h1v1.6h-1zM769.1 22.5h1v1.6h-1zM769.1 30.8h1v1.6h-1zM769.1 39.1h1v1.6h-1zM769.1 47.4h1v1.6h-1zM769.1 55.7h1v1.6h-1zM769.1 64.0h1v1.6h-1zM769.1 72.3h1v1.6h-1zM769.1 80.6h1v1.6h-1zM769.1 88.9h1v1.6h-1zM769.1 97.2h1v1.6h-1zM769.1 105.5h1v1.6h-1zM769.1 113.8h1v1.6h-1zM769.1 122.1h1v1.6h-1zM769.1 130.4h1v1.6h-1zM769.1 138.7h1v1.6h-1zM769.1 147.0h1v1.6h-1zM769.1 155.3h1v1.6h-1zM769.1 163.6h1v1.6h-1zM769.1 171.9h1v1.6h-1zM769.1 180.2h1v1.6h-1zM769.1 188.5h1v1.6h-1zM769.1 196.8h1v1.6h-1zM769.1 205.1h1v1.6h-1zM769.1 213.4h1v1.6h-1zM769.1 221.7h1v1.6h-1zM769.1 230.0h1v1.6h-1zM769.1 238.3h1v1.6h-1zM769.1 246.6h1v1.6h-1zM769.1 254.9h1v1.6h-1zM769.1 263.2h1v1.6h-1zM769.1 271.5h1v1.6h-1zM769.1 279.8h1v1.6h-1zM769.1 288.1h1v1.6h-1zM769.1 296.4h1v1.6h-1zM769.1 304.7h1v1.6h-1zM769.1 313.0h1v1.6h-1zM769.1 321.3h1v1.6h-1zM769.1 329.6h1v1.6h-1zM769.1 337.9h1v1.6h-1zM769.1 346.2h1v1.6h-1zM769.1 354.5h1v1.6h-1zM769.1 362.8h1v1.6h-1zM769.1 371.1h1v1.6h-1zM769.1 379.4h1v1.6h-1zM769.1 387.7h1v1.6h-1zM769.1 396.0h1v1.6h-1zM769.1 404.3h1v1.6h-1zM769.1 412.6h1v1.6h-1zM769.1 420.9h1v1.6h-1zM769.1 429.2h1v1.6h-1zM769.1 437.5h1v1.6h-1zM769.1 445.8h1v1.6h-1zM769.1 454.1h1v1.6h-1zM769.1 462.4h1v1.6h-1zM777.4 5.9h1v1.6h-1zM777.4 14.2h1v1.6h-1zM777.4 22.5h1v1.6h-1zM777.4 30.8h1v1.6h-1zM777.4 39.1h1v1.6h-1zM777.4 47.4h1v1.6h-1zM777.4 55.7h1v1.6h-1zM777.4 64.0h1v1.6h-1zM777.4 72.3h1v1.6h-1zM777.4 80.6h1v1.6h-1zM777.4 88.9h1v1.6h-1zM777.4 97.2h1v1.6h-1zM777.4 105.5h1v1.6h-1zM777.4 113.8h1v1.6h-1zM777.4 122.1h1v1.6h-1zM777.4 130.4h1v1.6h-1zM777.4 138.7h1v1.6h-1zM777.4 147.0h1v1.6h-1zM777.4 155.3h1v1.6h-1zM777.4 163.6h1v1.6h-1zM777.4 171.9h1v1.6h-1zM777.4 180.2h1v1.6h-1zM777.4 188.5h1v1.6h-1zM777.4 196.8h1v1.6h-1zM777.4 205.1h1v1.6h-1zM777.4 213.4h1v1.6h-1zM777.4 221.7h1v1.6h-1zM777.4 230.0h1v1.6h-1zM777.4 238.3h1v1.6h-1zM777.4 246.6h1v1.6h-1zM777.4 254.9h1v1.6h-1zM777.4 263.2h1v1.6h-1zM777.4 271.5h1v1.6h-1zM777.4 279.8h1v1.6h-1zM777.4 288.1h1v1.6h-1zM777.4 296.4h1v1.6h-1zM777.4 304.7h1v1.6h-1zM777.4 313.0h1v1.6h-1zM777.4 321.3h1v1.6h-1zM777.4 329.6h1v1.6h-1zM777.4 337.9h1v1.6h-1zM777.4 346.2h1v1.6h-1zM777.4 354.5h1v1.6h-1zM777.4 362.8h1v1.6h-1zM777.4 371.1h1v1.6h-1zM777.4 379.4h1v1.6h-1zM777.4 387.7h1v1.6h-1zM777.4 396.0h1v1.6h-1zM777.4 404.3h1v1.6h-1zM777.4 412.6h1v1.6h-1zM777.4 420.9h1v1.6h-1zM777.4 429.2h1v1.6h-1zM777.4 437.5h1v1.6h-1zM777.4 445.8h1v1.6h-1zM777.4 454.1h1v1.6h-1zM777.4 462.4h1v1.6h-1zM785.7 5.9h1v1.6h-1zM785.7 14.2h1v1.6h-1zM785.7 22.5h1v1.6h-1zM785.7 30.8h1v1.6h-1zM785.7 39.1h1v1.6h-1zM785.7 47.4h1v1.6h-1zM785.7 55.7h1v1.6h-1zM785.7 64.0h1v1.6h-1zM785.7 72.3h1v1.6h-1zM785.7 80.6h1v1.6h-1zM785.7 88.9h1v1.6h-1zM785.7 97.2h1v1.6h-1zM785.7 105.5h1v1.6h-1zM785.7 113.8h1v1.6h-1zM785.7 122.1h1v1.6h-1zM785.7 130.4h1v1.6h-1zM785.7 138.7h1v1.6h-1zM785.7 147.0h1v1.6h-1zM785.7 155.3h1v1.6h-1zM785.7 163.6h1v1.6h-1zM785.7 171.9h1v1.6h-1zM785.7 180.2h1v1.6h-1zM785.7 188.5h1v1.6h-1zM785.7 196.8h1v1.6h-1zM785.7 205.1h1v1.6h-1zM785.7 213.4h1v1.6h-1zM785.7 221.7h1v1.6h-1zM785.7 230.0h1v1.6h-1zM785.7 238.3h1v1.6h-1zM785.7 246.6h1v1.6h-1zM785.7 254.9h1v1.6h-1zM785.7 263.2h1v1.6h-1zM785.7 271.5h1v1.6h-1zM785.7 279.8h1v1.6h-1zM785.7 288.1h1v1.6h-1zM785.7 296.4h1v1.6h-1zM785.7 304.7h1v1.6h-1zM785.7 313.0h1v1.6h-1zM785.7 321.3h1v1.6h-1zM785.7 329.6h1v1.6h-1zM785.7 337.9h1v1.6h-1zM785.7 346.2h1v1.6h-1zM785.7 354.5h1v1.6h-1zM785.7 362.8h1v1.6h-1zM785.7 371.1h1v1.6h-1zM785.7 379.4h1v1.6h-1zM785.7 387.7h1v1.6h-1zM785.7 396.0h1v1.6h-1zM785.7 404.3h1v1.6h-1zM785.7 412.6h1v1.6h-1zM785.7 420.9h1v1.6h-1zM785.7 429.2h1v1.6h-1zM785.7 437.5h1v1.6h-1zM785.7 445.8h1v1.6h-1zM785.7 454.1h1v1.6h-1zM785.7 462.4h1v1.6h-1zM794.0 5.9h1v1.6h-1zM794.0 14.2h1v1.6h-1zM794.0 22.5h1v1.6h-1zM794.0 30.8h1v1.6h-1zM794.0 39.1h1v1.6h-1zM794.0 47.4h1v1.6h-1zM794.0 55.7h1v1.6h-1zM794.0 64.0h1v1.6h-1zM794.0 72.3h1v1.6h-1zM794.0 80.6h1v1.6h-1zM794.0 88.9h1v1.6h-1zM794.0 97.2h1v1.6h-1zM794.0 105.5h1v1.6h-1zM794.0 113.8h1v1.6h-1zM794.0 122.1h1v1.6h-1zM794.0 130.4h1v1.6h-1zM794.0 138.7h1v1.6h-1zM794.0 147.0h1v1.6h-1zM794.0 155.3h1v1.6h-1zM794.0 163.6h1v1.6h-1zM794.0 171.9h1v1.6h-1zM794.0 180.2h1v1.6h-1zM794.0 188.5h1v1.6h-1zM794.0 196.8h1v1.6h-1zM794.0 205.1h1v1.6h-1zM794.0 213.4h1v1.6h-1zM794.0 221.7h1v1.6h-1zM794.0 230.0h1v1.6h-1zM794.0 238.3h1v1.6h-1zM794.0 246.6h1v1.6h-1zM794.0 254.9h1v1.6h-1zM794.0 263.2h1v1.6h-1zM794.0 271.5h1v1.6h-1zM794.0 279.8h1v1.6h-1zM794.0 288.1h1v1.6h-1zM794.0 296.4h1v1.6h-1zM794.0 304.7h1v1.6h-1zM794.0 313.0h1v1.6h-1zM794.0 321.3h1v1.6h-1zM794.0 329.6h1v1.6h-1zM794.0 337.9h1v1.6h-1zM794.0 346.2h1v1.6h-1zM794.0 354.5h1v1.6h-1zM794.0 362.8h1v1.6h-1zM794.0 371.1h1v1.6h-1zM794.0 379.4h1v1.6h-1zM794.0 387.7h1v1.6h-1zM794.0 396.0h1v1.6h-1zM794.0 404.3h1v1.6h-1zM794.0 412.6h1v1.6h-1zM794.0 420.9h1v1.6h-1zM794.0 429.2h1v1.6h-1zM794.0 437.5h1v1.6h-1zM794.0 445.8h1v1.6h-1zM794.0 454.1h1v1.6h-1zM794.0 462.4h1v1.6h-1zM802.3 5.9h1v1.6h-1zM802.3 14.2h1v1.6h-1zM802.3 22.5h1v1.6h-1zM802.3 30.8h1v1.6h-1zM802.3 39.1h1v1.6h-1zM802.3 47.4h1v1.6h-1zM802.3 55.7h1v1.6h-1zM802.3 64.0h1v1.6h-1zM802.3 72.3h1v1.6h-1zM802.3 80.6h1v1.6h-1zM802.3 88.9h1v1.6h-1zM802.3 97.2h1v1.6h-1zM802.3 105.5h1v1.6h-1zM802.3 113.8h1v1.6h-1zM802.3 122.1h1v1.6h-1zM802.3 130.4h1v1.6h-1zM802.3 138.7h1v1.6h-1zM802.3 147.0h1v1.6h-1zM802.3 155.3h1v1.6h-1zM802.3 163.6h1v1.6h-1zM802.3 171.9h1v1.6h-1zM802.3 180.2h1v1.6h-1zM802.3 188.5h1v1.6h-1zM802.3 196.8h1v1.6h-1zM802.3 205.1h1v1.6h-1zM802.3 213.4h1v1.6h-1zM802.3 221.7h1v1.6h-1zM802.3 230.0h1v1.6h-1zM802.3 238.3h1v1.6h-1zM802.3 246.6h1v1.6h-1zM802.3 254.9h1v1.6h-1zM802.3 263.2h1v1.6h-1zM802.3 271.5h1v1.6h-1zM802.3 279.8h1v1.6h-1zM802.3 288.1h1v1.6h-1zM802.3 296.4h1v1.6h-1zM802.3 304.7h1v1.6h-1zM802.3 313.0h1v1.6h-1zM802.3 321.3h1v1.6h-1zM802.3 329.6h1v1.6h-1zM802.3 337.9h1v1.6h-1zM802.3 346.2h1v1.6h-1zM802.3 354.5h1v1.6h-1zM802.3 362.8h1v1.6h-1zM802.3 371.1h1v1.6h-1zM802.3 379.4h1v1.6h-1zM802.3 387.7h1v1.6h-1zM802.3 396.0h1v1.6h-1zM802.3 404.3h1v1.6h-1zM802.3 412.6h1v1.6h-1zM802.3 420.9h1v1.6h-1zM802.3 429.2h1v1.6h-1zM802.3 437.5h1v1.6h-1zM802.3 445.8h1v1.6h-1zM802.3 454.1h1v1.6h-1zM802.3 462.4h1v1.6h-1zM810.6 5.9h1v1.6h-1zM810.6 14.2h1v1.6h-1zM810.6 22.5h1v1.6h-1zM810.6 30.8h1v1.6h-1zM810.6 39.1h1v1.6h-1zM810.6 47.4h1v1.6h-1zM810.6 55.7h1v1.6h-1zM810.6 64.0h1v1.6h-1zM810.6 72.3h1v1.6h-1zM810.6 80.6h1v1.6h-1zM810.6 88.9h1v1.6h-1zM810.6 97.2h1v1.6h-1zM810.6 105.5h1v1.6h-1zM810.6 113.8h1v1.6h-1zM810.6 122.1h1v1.6h-1zM810.6 130.4h1v1.6h-1zM810.6 138.7h1v1.6h-1zM810.6 147.0h1v1.6h-1zM810.6 155.3h1v1.6h-1zM810.6 163.6h1v1.6h-1zM810.6 171.9h1v1.6h-1zM810.6 180.2h1v1.6h-1zM810.6 188.5h1v1.6h-1zM810.6 196.8h1v1.6h-1zM810.6 205.1h1v1.6h-1zM810.6 213.4h1v1.6h-1zM810.6 221.7h1v1.6h-1zM810.6 230.0h1v1.6h-1zM810.6 238.3h1v1.6h-1zM810.6 246.6h1v1.6h-1zM810.6 254.9h1v1.6h-1zM810.6 263.2h1v1.6h-1zM810.6 271.5h1v1.6h-1zM810.6 279.8h1v1.6h-1zM810.6 288.1h1v1.6h-1zM810.6 296.4h1v1.6h-1zM810.6 304.7h1v1.6h-1zM810.6 313.0h1v1.6h-1zM810.6 321.3h1v1.6h-1zM810.6 329.6h1v1.6h-1zM810.6 337.9h1v1.6h-1zM810.6 346.2h1v1.6h-1zM810.6 354.5h1v1.6h-1zM810.6 362.8h1v1.6h-1zM810.6 371.1h1v1.6h-1zM810.6 379.4h1v1.6h-1zM810.6 387.7h1v1.6h-1zM810.6 396.0h1v1.6h-1zM810.6 404.3h1v1.6h-1zM810.6 412.6h1v1.6h-1zM810.6 420.9h1v1.6h-1zM810.6 429.2h1v1.6h-1zM810.6 437.5h1v1.6h-1zM810.6 445.8h1v1.6h-1zM810.6 454.1h1v1.6h-1zM810.6 462.4h1v1.6h-1zM818.9 5.9h1v1.6h-1zM818.9 14.2h1v1.6h-1zM818.9 22.5h1v1.6h-1zM818.9 30.8h1v1.6h-1zM818.9 39.1h1v1.6h-1zM818.9 47.4h1v1.6h-1zM818.9 55.7h1v1.6h-1zM818.9 64.0h1v1.6h-1zM818.9 72.3h1v1.6h-1zM818.9 80.6h1v1.6h-1zM818.9 88.9h1v1.6h-1zM818.9 97.2h1v1.6h-1zM818.9 105.5h1v1.6h-1zM818.9 113.8h1v1.6h-1zM818.9 122.1h1v1.6h-1zM818.9 130.4h1v1.6h-1zM818.9 138.7h1v1.6h-1zM818.9 147.0h1v1.6h-1zM818.9 155.3h1v1.6h-1zM818.9 163.6h1v1.6h-1zM818.9 171.9h1v1.6h-1zM818.9 180.2h1v1.6h-1zM818.9 188.5h1v1.6h-1zM818.9 196.8h1v1.6h-1zM818.9 205.1h1v1.6h-1zM818.9 213.4h1v1.6h-1zM818.9 221.7h1v1.6h-1zM818.9 230.0h1v1.6h-1zM818.9 238.3h1v1.6h-1zM818.9 246.6h1v1.6h-1zM818.9 254.9h1v1.6h-1zM818.9 263.2h1v1.6h-1zM818.9 271.5h1v1.6h-1zM818.9 279.8h1v1.6h-1zM818.9 288.1h1v1.6h-1zM818.9 296.4h1v1.6h-1zM818.9 304.7h1v1.6h-1zM818.9 313.0h1v1.6h-1zM818.9 321.3h1v1.6h-1zM818.9 329.6h1v1.6h-1zM818.9 337.9h1v1.6h-1zM818.9 346.2h1v1.6h-1zM818.9 354.5h1v1.6h-1zM818.9 362.8h1v1.6h-1zM818.9 371.1h1v1.6h-1zM818.9 379.4h1v1.6h-1zM818.9 387.7h1v1.6h-1zM818.9 396.0h1v1.6h-1zM818.9 404.3h1v1.6h-1zM818.9 412.6h1v1.6h-1zM818.9 420.9h1v1.6h-1zM818.9 429.2h1v1.6h-1zM818.9 437.5h1v1.6h-1zM818.9 445.8h1v1.6h-1zM818.9 454.1h1v1.6h-1zM818.9 462.4h1v1.6h-1zM827.2 5.9h1v1.6h-1zM827.2 14.2h1v1.6h-1zM827.2 22.5h1v1.6h-1zM827.2 30.8h1v1.6h-1zM827.2 39.1h1v1.6h-1zM827.2 47.4h1v1.6h-1zM827.2 55.7h1v1.6h-1zM827.2 64.0h1v1.6h-1zM827.2 72.3h1v1.6h-1zM827.2 80.6h1v1.6h-1zM827.2 88.9h1v1.6h-1zM827.2 97.2h1v1.6h-1zM827.2 105.5h1v1.6h-1zM827.2 113.8h1v1.6h-1zM827.2 122.1h1v1.6h-1zM827.2 130.4h1v1.6h-1zM827.2 138.7h1v1.6h-1zM827.2 147.0h1v1.6h-1zM827.2 155.3h1v1.6h-1zM827.2 163.6h1v1.6h-1zM827.2 171.9h1v1.6h-1zM827.2 180.2h1v1.6h-1zM827.2 188.5h1v1.6h-1zM827.2 196.8h1v1.6h-1zM827.2 205.1h1v1.6h-1zM827.2 213.4h1v1.6h-1zM827.2 221.7h1v1.6h-1zM827.2 230.0h1v1.6h-1zM827.2 238.3h1v1.6h-1zM827.2 246.6h1v1.6h-1zM827.2 254.9h1v1.6h-1zM827.2 263.2h1v1.6h-1zM827.2 271.5h1v1.6h-1zM827.2 279.8h1v1.6h-1zM827.2 288.1h1v1.6h-1zM827.2 296.4h1v1.6h-1zM827.2 304.7h1v1.6h-1zM827.2 313.0h1v1.6h-1zM827.2 321.3h1v1.6h-1zM827.2 329.6h1v1.6h-1zM827.2 337.9h1v1.6h-1zM827.2 346.2h1v1.6h-1zM827.2 354.5h1v1.6h-1zM827.2 362.8h1v1.6h-1zM827.2 371.1h1v1.6h-1zM827.2 379.4h1v1.6h-1zM827.2 387.7h1v1.6h-1zM827.2 396.0h1v1.6h-1zM827.2 404.3h1v1.6h-1zM827.2 412.6h1v1.6h-1zM827.2 420.9h1v1.6h-1zM827.2 429.2h1v1.6h-1zM827.2 437.5h1v1.6h-1zM827.2 445.8h1v1.6h-1zM827.2 454.1h1v1.6h-1zM827.2 462.4h1v1.6h-1zM835.5 5.9h1v1.6h-1zM835.5 14.2h1v1.6h-1zM835.5 22.5h1v1.6h-1zM835.5 30.8h1v1.6h-1zM835.5 39.1h1v1.6h-1zM835.5 47.4h1v1.6h-1zM835.5 55.7h1v1.6h-1zM835.5 64.0h1v1.6h-1zM835.5 72.3h1v1.6h-1zM835.5 80.6h1v1.6h-1zM835.5 88.9h1v1.6h-1zM835.5 97.2h1v1.6h-1zM835.5 105.5h1v1.6h-1zM835.5 113.8h1v1.6h-1zM835.5 122.1h1v1.6h-1zM835.5 130.4h1v1.6h-1zM835.5 138.7h1v1.6h-1zM835.5 147.0h1v1.6h-1zM835.5 155.3h1v1.6h-1zM835.5 163.6h1v1.6h-1zM835.5 171.9h1v1.6h-1zM835.5 180.2h1v1.6h-1zM835.5 188.5h1v1.6h-1zM835.5 196.8h1v1.6h-1zM835.5 205.1h1v1.6h-1zM835.5 213.4h1v1.6h-1zM835.5 221.7h1v1.6h-1zM835.5 230.0h1v1.6h-1zM835.5 238.3h1v1.6h-1zM835.5 246.6h1v1.6h-1zM835.5 254.9h1v1.6h-1zM835.5 263.2h1v1.6h-1zM835.5 271.5h1v1.6h-1zM835.5 279.8h1v1.6h-1zM835.5 288.1h1v1.6h-1zM835.5 296.4h1v1.6h-1zM835.5 304.7h1v1.6h-1zM835.5 313.0h1v1.6h-1zM835.5 321.3h1v1.6h-1zM835.5 329.6h1v1.6h-1zM835.5 337.9h1v1.6h-1zM835.5 346.2h1v1.6h-1zM835.5 354.5h1v1.6h-1zM835.5 362.8h1v1.6h-1zM835.5 371.1h1v1.6h-1zM835.5 379.4h1v1.6h-1zM835.5 387.7h1v1.6h-1zM835.5 396.0h1v1.6h-1zM835.5 404.3h1v1.6h-1zM835.5 412.6h1v1.6h-1zM835.5 420.9h1v1.6h-1zM835.5 429.2h1v1.6h-1zM835.5 437.5h1v1.6h-1zM835.5 445.8h1v1.6h-1zM835.5 454.1h1v1.6h-1zM835.5 462.4h1v1.6h-1zM843.8 5.9h1v1.6h-1zM843.8 14.2h1v1.6h-1zM843.8 22.5h1v1.6h-1zM843.8 30.8h1v1.6h-1zM843.8 39.1h1v1.6h-1zM843.8 47.4h1v1.6h-1zM843.8 55.7h1v1.6h-1zM843.8 64.0h1v1.6h-1zM843.8 72.3h1v1.6h-1zM843.8 80.6h1v1.6h-1zM843.8 88.9h1v1.6h-1zM843.8 97.2h1v1.6h-1zM843.8 105.5h1v1.6h-1zM843.8 113.8h1v1.6h-1zM843.8 122.1h1v1.6h-1zM843.8 130.4h1v1.6h-1zM843.8 138.7h1v1.6h-1zM843.8 147.0h1v1.6h-1zM843.8 155.3h1v1.6h-1zM843.8 163.6h1v1.6h-1zM843.8 171.9h1v1.6h-1zM843.8 180.2h1v1.6h-1zM843.8 188.5h1v1.6h-1zM843.8 196.8h1v1.6h-1zM843.8 205.1h1v1.6h-1zM843.8 213.4h1v1.6h-1zM843.8 221.7h1v1.6h-1zM843.8 230.0h1v1.6h-1zM843.8 238.3h1v1.6h-1zM843.8 246.6h1v1.6h-1zM843.8 254.9h1v1.6h-1zM843.8 263.2h1v1.6h-1zM843.8 271.5h1v1.6h-1zM843.8 279.8h1v1.6h-1zM843.8 288.1h1v1.6h-1zM843.8 296.4h1v1.6h-1zM843.8 304.7h1v1.6h-1zM843.8 313.0h1v1.6h-1zM843.8 321.3h1v1.6h-1zM843.8 329.6h1v1.6h-1zM843.8 337.9h1v1.6h-1zM843.8 346.2h1v1.6h-1zM843.8 354.5h1v1.6h-1zM843.8 362.8h1v1.6h-1zM843.8 371.1h1v1.6h-1zM843.8 379.4h1v1.6h-1zM843.8 387.7h1v1.6h-1zM843.8 396.0h1v1.6h-1zM843.8 404.3h1v1.6h-1zM843.8 412.6h1v1.6h-1zM843.8 420.9h1v1.6h-1zM843.8 429.2h1v1.6h-1zM843.8 437.5h1v1.6h-1zM843.8 445.8h1v1.6h-1zM843.8 454.1h1v1.6h-1zM843.8 462.4h1v1.6h-1zM852.1 5.9h1v1.6h-1zM852.1 14.2h1v1.6h-1zM852.1 22.5h1v1.6h-1zM852.1 30.8h1v1.6h-1zM852.1 39.1h1v1.6h-1zM852.1 47.4h1v1.6h-1zM852.1 55.7h1v1.6h-1zM852.1 64.0h1v1.6h-1zM852.1 72.3h1v1.6h-1zM852.1 80.6h1v1.6h-1zM852.1 88.9h1v1.6h-1zM852.1 97.2h1v1.6h-1zM852.1 105.5h1v1.6h-1zM852.1 113.8h1v1.6h-1zM852.1 122.1h1v1.6h-1zM852.1 130.4h1v1.6h-1zM852.1 138.7h1v1.6h-1zM852.1 147.0h1v1.6h-1zM852.1 155.3h1v1.6h-1zM852.1 163.6h1v1.6h-1zM852.1 171.9h1v1.6h-1zM852.1 180.2h1v1.6h-1zM852.1 188.5h1v1.6h-1zM852.1 196.8h1v1.6h-1zM852.1 205.1h1v1.6h-1zM852.1 213.4h1v1.6h-1zM852.1 221.7h1v1.6h-1zM852.1 230.0h1v1.6h-1zM852.1 238.3h1v1.6h-1zM852.1 246.6h1v1.6h-1zM852.1 254.9h1v1.6h-1zM852.1 263.2h1v1.6h-1zM852.1 271.5h1v1.6h-1zM852.1 279.8h1v1.6h-1zM852.1 288.1h1v1.6h-1zM852.1 296.4h1v1.6h-1zM852.1 304.7h1v1.6h-1zM852.1 313.0h1v1.6h-1zM852.1 321.3h1v1.6h-1zM852.1 329.6h1v1.6h-1zM852.1 337.9h1v1.6h-1zM852.1 346.2h1v1.6h-1zM852.1 354.5h1v1.6h-1zM852.1 362.8h1v1.6h-1zM852.1 371.1h1v1.6h-1zM852.1 379.4h1v1.6h-1zM852.1 387.7h1v1.6h-1zM852.1 396.0h1v1.6h-1zM852.1 404.3h1v1.6h-1zM852.1 412.6h1v1.6h-1zM852.1 420.9h1v1.6h-1zM852.1 429.2h1v1.6h-1zM852.1 437.5h1v1.6h-1zM852.1 445.8h1v1.6h-1zM852.1 454.1h1v1.6h-1zM852.1 462.4h1v1.6h-1zM860.4 5.9h1v1.6h-1zM860.4 14.2h1v1.6h-1zM860.4 22.5h1v1.6h-1zM860.4 30.8h1v1.6h-1zM860.4 39.1h1v1.6h-1zM860.4 47.4h1v1.6h-1zM860.4 55.7h1v1.6h-1zM860.4 64.0h1v1.6h-1zM860.4 72.3h1v1.6h-1zM860.4 80.6h1v1.6h-1zM860.4 88.9h1v1.6h-1zM860.4 97.2h1v1.6h-1zM860.4 105.5h1v1.6h-1zM860.4 113.8h1v1.6h-1zM860.4 122.1h1v1.6h-1zM860.4 130.4h1v1.6h-1zM860.4 138.7h1v1.6h-1zM860.4 147.0h1v1.6h-1zM860.4 155.3h1v1.6h-1zM860.4 163.6h1v1.6h-1zM860.4 171.9h1v1.6h-1zM860.4 180.2h1v1.6h-1zM860.4 188.5h1v1.6h-1zM860.4 196.8h1v1.6h-1zM860.4 205.1h1v1.6h-1zM860.4 213.4h1v1.6h-1zM860.4 221.7h1v1.6h-1zM860.4 230.0h1v1.6h-1zM860.4 238.3h1v1.6h-1zM860.4 246.6h1v1.6h-1zM860.4 254.9h1v1.6h-1zM860.4 263.2h1v1.6h-1zM860.4 271.5h1v1.6h-1zM860.4 279.8h1v1.6h-1zM860.4 288.1h1v1.6h-1zM860.4 296.4h1v1.6h-1zM860.4 304.7h1v1.6h-1zM860.4 313.0h1v1.6h-1zM860.4 321.3h1v1.6h-1zM860.4 329.6h1v1.6h-1zM860.4 337.9h1v1.6h-1zM860.4 346.2h1v1.6h-1zM860.4 354.5h1v1.6h-1zM860.4 362.8h1v1.6h-1zM860.4 371.1h1v1.6h-1zM860.4 379.4h1v1.6h-1zM860.4 387.7h1v1.6h-1zM860.4 396.0h1v1.6h-1zM860.4 404.3h1v1.6h-1zM860.4 412.6h1v1.6h-1zM860.4 420.9h1v1.6h-1zM860.4 429.2h1v1.6h-1zM860.4 437.5h1v1.6h-1zM860.4 445.8h1v1.6h-1zM860.4 454.1h1v1.6h-1zM860.4 462.4h1v1.6h-1zM868.7 5.9h1v1.6h-1zM868.7 14.2h1v1.6h-1zM868.7 22.5h1v1.6h-1zM868.7 30.8h1v1.6h-1zM868.7 39.1h1v1.6h-1zM868.7 47.4h1v1.6h-1zM868.7 55.7h1v1.6h-1zM868.7 64.0h1v1.6h-1zM868.7 72.3h1v1.6h-1zM868.7 80.6h1v1.6h-1zM868.7 88.9h1v1.6h-1zM868.7 97.2h1v1.6h-1zM868.7 105.5h1v1.6h-1zM868.7 113.8h1v1.6h-1zM868.7 122.1h1v1.6h-1zM868.7 130.4h1v1.6h-1zM868.7 138.7h1v1.6h-1zM868.7 147.0h1v1.6h-1zM868.7 155.3h1v1.6h-1zM868.7 163.6h1v1.6h-1zM868.7 171.9h1v1.6h-1zM868.7 180.2h1v1.6h-1zM868.7 188.5h1v1.6h-1zM868.7 196.8h1v1.6h-1zM868.7 205.1h1v1.6h-1zM868.7 213.4h1v1.6h-1zM868.7 221.7h1v1.6h-1zM868.7 230.0h1v1.6h-1zM868.7 238.3h1v1.6h-1zM868.7 246.6h1v1.6h-1zM868.7 254.9h1v1.6h-1zM868.7 263.2h1v1.6h-1zM868.7 271.5h1v1.6h-1zM868.7 279.8h1v1.6h-1zM868.7 288.1h1v1.6h-1zM868.7 296.4h1v1.6h-1zM868.7 304.7h1v1.6h-1zM868.7 313.0h1v1.6h-1zM868.7 321.3h1v1.6h-1zM868.7 329.6h1v1.6h-1zM868.7 337.9h1v1.6h-1zM868.7 346.2h1v1.6h-1zM868.7 354.5h1v1.6h-1zM868.7 362.8h1v1.6h-1zM868.7 371.1h1v1.6h-1zM868.7 379.4h1v1.6h-1zM868.7 387.7h1v1.6h-1zM868.7 396.0h1v1.6h-1zM868.7 404.3h1v1.6h-1zM868.7 412.6h1v1.6h-1zM868.7 420.9h1v1.6h-1zM868.7 429.2h1v1.6h-1zM868.7 437.5h1v1.6h-1zM868.7 445.8h1v1.6h-1zM868.7 454.1h1v1.6h-1zM868.7 462.4h1v1.6h-1zM877.0 5.9h1v1.6h-1zM877.0 14.2h1v1.6h-1zM877.0 22.5h1v1.6h-1zM877.0 30.8h1v1.6h-1zM877.0 39.1h1v1.6h-1zM877.0 47.4h1v1.6h-1zM877.0 55.7h1v1.6h-1zM877.0 64.0h1v1.6h-1zM877.0 72.3h1v1.6h-1zM877.0 80.6h1v1.6h-1zM877.0 88.9h1v1.6h-1zM877.0 97.2h1v1.6h-1zM877.0 105.5h1v1.6h-1zM877.0 113.8h1v1.6h-1zM877.0 122.1h1v1.6h-1zM877.0 130.4h1v1.6h-1zM877.0 138.7h1v1.6h-1zM877.0 147.0h1v1.6h-1zM877.0 155.3h1v1.6h-1zM877.0 163.6h1v1.6h-1zM877.0 171.9h1v1.6h-1zM877.0 180.2h1v1.6h-1zM877.0 188.5h1v1.6h-1zM877.0 196.8h1v1.6h-1zM877.0 205.1h1v1.6h-1zM877.0 213.4h1v1.6h-1zM877.0 221.7h1v1.6h-1zM877.0 230.0h1v1.6h-1zM877.0 238.3h1v1.6h-1zM877.0 246.6h1v1.6h-1zM877.0 254.9h1v1.6h-1zM877.0 263.2h1v1.6h-1zM877.0 271.5h1v1.6h-1zM877.0 279.8h1v1.6h-1zM877.0 288.1h1v1.6h-1zM877.0 296.4h1v1.6h-1zM877.0 304.7h1v1.6h-1zM877.0 313.0h1v1.6h-1zM877.0 321.3h1v1.6h-1zM877.0 329.6h1v1.6h-1zM877.0 337.9h1v1.6h-1zM877.0 346.2h1v1.6h-1zM877.0 354.5h1v1.6h-1zM877.0 362.8h1v1.6h-1zM877.0 371.1h1v1.6h-1zM877.0 379.4h1v1.6h-1zM877.0 387.7h1v1.6h-1zM877.0 396.0h1v1.6h-1zM877.0 404.3h1v1.6h-1zM877.0 412.6h1v1.6h-1zM877.0 420.9h1v1.6h-1zM877.0 429.2h1v1.6h-1zM877.0 437.5h1v1.6h-1zM877.0 445.8h1v1.6h-1zM877.0 454.1h1v1.6h-1zM877.0 462.4h1v1.6h-1zM885.3 5.9h1v1.6h-1zM885.3 14.2h1v1.6h-1zM885.3 22.5h1v1.6h-1zM885.3 30.8h1v1.6h-1zM885.3 39.1h1v1.6h-1zM885.3 47.4h1v1.6h-1zM885.3 55.7h1v1.6h-1zM885.3 64.0h1v1.6h-1zM885.3 72.3h1v1.6h-1zM885.3 80.6h1v1.6h-1zM885.3 88.9h1v1.6h-1zM885.3 97.2h1v1.6h-1zM885.3 105.5h1v1.6h-1zM885.3 113.8h1v1.6h-1zM885.3 122.1h1v1.6h-1zM885.3 130.4h1v1.6h-1zM885.3 138.7h1v1.6h-1zM885.3 147.0h1v1.6h-1zM885.3 155.3h1v1.6h-1zM885.3 163.6h1v1.6h-1zM885.3 171.9h1v1.6h-1zM885.3 180.2h1v1.6h-1zM885.3 188.5h1v1.6h-1zM885.3 196.8h1v1.6h-1zM885.3 205.1h1v1.6h-1zM885.3 213.4h1v1.6h-1zM885.3 221.7h1v1.6h-1zM885.3 230.0h1v1.6h-1zM885.3 238.3h1v1.6h-1zM885.3 246.6h1v1.6h-1zM885.3 254.9h1v1.6h-1zM885.3 263.2h1v1.6h-1zM885.3 271.5h1v1.6h-1zM885.3 279.8h1v1.6h-1zM885.3 288.1h1v1.6h-1zM885.3 296.4h1v1.6h-1zM885.3 304.7h1v1.6h-1zM885.3 313.0h1v1.6h-1zM885.3 321.3h1v1.6h-1zM885.3 329.6h1v1.6h-1zM885.3 337.9h1v1.6h-1zM885.3 346.2h1v1.6h-1zM885.3 354.5h1v1.6h-1zM885.3 362.8h1v1.6h-1zM885.3 371.1h1v1.6h-1zM885.3 379.4h1v1.6h-1zM885.3 387.7h1v1.6h-1zM885.3 396.0h1v1.6h-1zM885.3 404.3h1v1.6h-1zM885.3 412.6h1v1.6h-1zM885.3 420.9h1v1.6h-1zM885.3 429.2h1v1.6h-1zM885.3 437.5h1v1.6h-1zM885.3 445.8h1v1.6h-1zM885.3 454.1h1v1.6h-1zM885.3 462.4h1v1.6h-1zM893.6 5.9h1v1.6h-1zM893.6 14.2h1v1.6h-1zM893.6 22.5h1v1.6h-1zM893.6 30.8h1v1.6h-1zM893.6 39.1h1v1.6h-1zM893.6 47.4h1v1.6h-1zM893.6 55.7h1v1.6h-1zM893.6 64.0h1v1.6h-1zM893.6 72.3h1v1.6h-1zM893.6 80.6h1v1.6h-1zM893.6 88.9h1v1.6h-1zM893.6 97.2h1v1.6h-1zM893.6 105.5h1v1.6h-1zM893.6 113.8h1v1.6h-1zM893.6 122.1h1v1.6h-1zM893.6 130.4h1v1.6h-1zM893.6 138.7h1v1.6h-1zM893.6 147.0h1v1.6h-1zM893.6 155.3h1v1.6h-1zM893.6 163.6h1v1.6h-1zM893.6 171.9h1v1.6h-1zM893.6 180.2h1v1.6h-1zM893.6 188.5h1v1.6h-1zM893.6 196.8h1v1.6h-1zM893.6 205.1h1v1.6h-1zM893.6 213.4h1v1.6h-1zM893.6 221.7h1v1.6h-1zM893.6 230.0h1v1.6h-1zM893.6 238.3h1v1.6h-1zM893.6 246.6h1v1.6h-1zM893.6 254.9h1v1.6h-1zM893.6 263.2h1v1.6h-1zM893.6 271.5h1v1.6h-1zM893.6 279.8h1v1.6h-1zM893.6 288.1h1v1.6h-1zM893.6 296.4h1v1.6h-1zM893.6 304.7h1v1.6h-1zM893.6 313.0h1v1.6h-1zM893.6 321.3h1v1.6h-1zM893.6 329.6h1v1.6h-1zM893.6 337.9h1v1.6h-1zM893.6 346.2h1v1.6h-1zM893.6 354.5h1v1.6h-1zM893.6 362.8h1v1.6h-1zM893.6 371.1h1v1.6h-1zM893.6 379.4h1v1.6h-1zM893.6 387.7h1v1.6h-1zM893.6 396.0h1v1.6h-1zM893.6 404.3h1v1.6h-1zM893.6 412.6h1v1.6h-1zM893.6 420.9h1v1.6h-1zM893.6 429.2h1v1.6h-1zM893.6 437.5h1v1.6h-1zM893.6 445.8h1v1.6h-1zM893.6 454.1h1v1.6h-1zM893.6 462.4h1v1.6h-1zM901.9 5.9h1v1.6h-1zM901.9 14.2h1v1.6h-1zM901.9 22.5h1v1.6h-1zM901.9 30.8h1v1.6h-1zM901.9 39.1h1v1.6h-1zM901.9 47.4h1v1.6h-1zM901.9 55.7h1v1.6h-1zM901.9 64.0h1v1.6h-1zM901.9 72.3h1v1.6h-1zM901.9 80.6h1v1.6h-1zM901.9 88.9h1v1.6h-1zM901.9 97.2h1v1.6h-1zM901.9 105.5h1v1.6h-1zM901.9 113.8h1v1.6h-1zM901.9 122.1h1v1.6h-1zM901.9 130.4h1v1.6h-1zM901.9 138.7h1v1.6h-1zM901.9 147.0h1v1.6h-1zM901.9 155.3h1v1.6h-1zM901.9 163.6h1v1.6h-1zM901.9 171.9h1v1.6h-1zM901.9 180.2h1v1.6h-1zM901.9 188.5h1v1.6h-1zM901.9 196.8h1v1.6h-1zM901.9 205.1h1v1.6h-1zM901.9 213.4h1v1.6h-1zM901.9 221.7h1v1.6h-1zM901.9 230.0h1v1.6h-1zM901.9 238.3h1v1.6h-1zM901.9 246.6h1v1.6h-1zM901.9 254.9h1v1.6h-1zM901.9 263.2h1v1.6h-1zM901.9 271.5h1v1.6h-1zM901.9 279.8h1v1.6h-1zM901.9 288.1h1v1.6h-1zM901.9 296.4h1v1.6h-1zM901.9 304.7h1v1.6h-1zM901.9 313.0h1v1.6h-1zM901.9 321.3h1v1.6h-1zM901.9 329.6h1v1.6h-1zM901.9 337.9h1v1.6h-1zM901.9 346.2h1v1.6h-1zM901.9 354.5h1v1.6h-1zM901.9 362.8h1v1.6h-1zM901.9 371.1h1v1.6h-1zM901.9 379.4h1v1.6h-1zM901.9 387.7h1v1.6h-1zM901.9 396.0h1v1.6h-1zM901.9 404.3h1v1.6h-1zM901.9 412.6h1v1.6h-1zM901.9 420.9h1v1.6h-1zM901.9 429.2h1v1.6h-1zM901.9 437.5h1v1.6h-1zM901.9 445.8h1v1.6h-1zM901.9 454.1h1v1.6h-1zM901.9 462.4h1v1.6h-1zM910.2 5.9h1v1.6h-1zM910.2 14.2h1v1.6h-1zM910.2 22.5h1v1.6h-1zM910.2 30.8h1v1.6h-1zM910.2 39.1h1v1.6h-1zM910.2 47.4h1v1.6h-1zM910.2 55.7h1v1.6h-1zM910.2 64.0h1v1.6h-1zM910.2 72.3h1v1.6h-1zM910.2 80.6h1v1.6h-1zM910.2 88.9h1v1.6h-1zM910.2 97.2h1v1.6h-1zM910.2 105.5h1v1.6h-1zM910.2 113.8h1v1.6h-1zM910.2 122.1h1v1.6h-1zM910.2 130.4h1v1.6h-1zM910.2 138.7h1v1.6h-1zM910.2 147.0h1v1.6h-1zM910.2 155.3h1v1.6h-1zM910.2 163.6h1v1.6h-1zM910.2 171.9h1v1.6h-1zM910.2 180.2h1v1.6h-1zM910.2 188.5h1v1.6h-1zM910.2 196.8h1v1.6h-1zM910.2 205.1h1v1.6h-1zM910.2 213.4h1v1.6h-1zM910.2 221.7h1v1.6h-1zM910.2 230.0h1v1.6h-1zM910.2 238.3h1v1.6h-1zM910.2 246.6h1v1.6h-1zM910.2 254.9h1v1.6h-1zM910.2 263.2h1v1.6h-1zM910.2 271.5h1v1.6h-1zM910.2 279.8h1v1.6h-1zM910.2 288.1h1v1.6h-1zM910.2 296.4h1v1.6h-1zM910.2 304.7h1v1.6h-1zM910.2 313.0h1v1.6h-1zM910.2 321.3h1v1.6h-1zM910.2 329.6h1v1.6h-1zM910.2 337.9h1v1.6h-1zM910.2 346.2h1v1.6h-1zM910.2 354.5h1v1.6h-1zM910.2 362.8h1v1.6h-1zM910.2 371.1h1v1.6h-1zM910.2 379.4h1v1.6h-1zM910.2 387.7h1v1.6h-1zM910.2 396.0h1v1.6h-1zM910.2 404.3h1v1.6h-1zM910.2 412.6h1v1.6h-1zM910.2 420.9h1v1.6h-1zM910.2 429.2h1v1.6h-1zM910.2 437.5h1v1.6h-1zM910.2 445.8h1v1.6h-1zM910.2 454.1h1v1.6h-1zM910.2 462.4h1v1.6h-1zM918.5 5.9h1v1.6h-1zM918.5 14.2h1v1.6h-1zM918.5 22.5h1v1.6h-1zM918.5 30.8h1v1.6h-1zM918.5 39.1h1v1.6h-1zM918.5 47.4h1v1.6h-1zM918.5 55.7h1v1.6h-1zM918.5 64.0h1v1.6h-1zM918.5 72.3h1v1.6h-1zM918.5 80.6h1v1.6h-1zM918.5 88.9h1v1.6h-1zM918.5 97.2h1v1.6h-1zM918.5 105.5h1v1.6h-1zM918.5 113.8h1v1.6h-1zM918.5 122.1h1v1.6h-1zM918.5 130.4h1v1.6h-1zM918.5 138.7h1v1.6h-1zM918.5 147.0h1v1.6h-1zM918.5 155.3h1v1.6h-1zM918.5 163.6h1v1.6h-1zM918.5 171.9h1v1.6h-1zM918.5 180.2h1v1.6h-1zM918.5 188.5h1v1.6h-1zM918.5 196.8h1v1.6h-1zM918.5 205.1h1v1.6h-1zM918.5 213.4h1v1.6h-1zM918.5 221.7h1v1.6h-1zM918.5 230.0h1v1.6h-1zM918.5 238.3h1v1.6h-1zM918.5 246.6h1v1.6h-1zM918.5 254.9h1v1.6h-1zM918.5 263.2h1v1.6h-1zM918.5 271.5h1v1.6h-1zM918.5 279.8h1v1.6h-1zM918.5 288.1h1v1.6h-1zM918.5 296.4h1v1.6h-1zM918.5 304.7h1v1.6h-1zM918.5 313.0h1v1.6h-1zM918.5 321.3h1v1.6h-1zM918.5 329.6h1v1.6h-1zM918.5 337.9h1v1.6h-1zM918.5 346.2h1v1.6h-1zM918.5 354.5h1v1.6h-1zM918.5 362.8h1v1.6h-1zM918.5 371.1h1v1.6h-1zM918.5 379.4h1v1.6h-1zM918.5 387.7h1v1.6h-1zM918.5 396.0h1v1.6h-1zM918.5 404.3h1v1.6h-1zM918.5 412.6h1v1.6h-1zM918.5 420.9h1v1.6h-1zM918.5 429.2h1v1.6h-1zM918.5 437.5h1v1.6h-1zM918.5 445.8h1v1.6h-1zM918.5 454.1h1v1.6h-1zM918.5 462.4h1v1.6h-1zM926.8 5.9h1v1.6h-1zM926.8 14.2h1v1.6h-1zM926.8 22.5h1v1.6h-1zM926.8 30.8h1v1.6h-1zM926.8 39.1h1v1.6h-1zM926.8 47.4h1v1.6h-1zM926.8 55.7h1v1.6h-1zM926.8 64.0h1v1.6h-1zM926.8 72.3h1v1.6h-1zM926.8 80.6h1v1.6h-1zM926.8 88.9h1v1.6h-1zM926.8 97.2h1v1.6h-1zM926.8 105.5h1v1.6h-1zM926.8 113.8h1v1.6h-1zM926.8 122.1h1v1.6h-1zM926.8 130.4h1v1.6h-1zM926.8 138.7h1v1.6h-1zM926.8 147.0h1v1.6h-1zM926.8 155.3h1v1.6h-1zM926.8 163.6h1v1.6h-1zM926.8 171.9h1v1.6h-1zM926.8 180.2h1v1.6h-1zM926.8 188.5h1v1.6h-1zM926.8 196.8h1v1.6h-1zM926.8 205.1h1v1.6h-1zM926.8 213.4h1v1.6h-1zM926.8 221.7h1v1.6h-1zM926.8 230.0h1v1.6h-1zM926.8 238.3h1v1.6h-1zM926.8 246.6h1v1.6h-1zM926.8 254.9h1v1.6h-1zM926.8 263.2h1v1.6h-1zM926.8 271.5h1v1.6h-1zM926.8 279.8h1v1.6h-1zM926.8 288.1h1v1.6h-1zM926.8 296.4h1v1.6h-1zM926.8 304.7h1v1.6h-1zM926.8 313.0h1v1.6h-1zM926.8 321.3h1v1.6h-1zM926.8 329.6h1v1.6h-1zM926.8 337.9h1v1.6h-1zM926.8 346.2h1v1.6h-1zM926.8 354.5h1v1.6h-1zM926.8 362.8h1v1.6h-1zM926.8 371.1h1v1.6h-1zM926.8 379.4h1v1.6h-1zM926.8 387.7h1v1.6h-1zM926.8 396.0h1v1.6h-1zM926.8 404.3h1v1.6h-1zM926.8 412.6h1v1.6h-1zM926.8 420.9h1v1.6h-1zM926.8 429.2h1v1.6h-1zM926.8 437.5h1v1.6h-1zM926.8 445.8h1v1.6h-1zM926.8 454.1h1v1.6h-1zM926.8 462.4h1v1.6h-1zM935.1 5.9h1v1.6h-1zM935.1 14.2h1v1.6h-1zM935.1 22.5h1v1.6h-1zM935.1 30.8h1v1.6h-1zM935.1 39.1h1v1.6h-1zM935.1 47.4h1v1.6h-1zM935.1 55.7h1v1.6h-1zM935.1 64.0h1v1.6h-1zM935.1 72.3h1v1.6h-1zM935.1 80.6h1v1.6h-1zM935.1 88.9h1v1.6h-1zM935.1 97.2h1v1.6h-1zM935.1 105.5h1v1.6h-1zM935.1 113.8h1v1.6h-1zM935.1 122.1h1v1.6h-1zM935.1 130.4h1v1.6h-1zM935.1 138.7h1v1.6h-1zM935.1 147.0h1v1.6h-1zM935.1 155.3h1v1.6h-1zM935.1 163.6h1v1.6h-1zM935.1 171.9h1v1.6h-1zM935.1 180.2h1v1.6h-1zM935.1 188.5h1v1.6h-1zM935.1 196.8h1v1.6h-1zM935.1 205.1h1v1.6h-1zM935.1 213.4h1v1.6h-1zM935.1 221.7h1v1.6h-1zM935.1 230.0h1v1.6h-1zM935.1 238.3h1v1.6h-1zM935.1 246.6h1v1.6h-1zM935.1 254.9h1v1.6h-1zM935.1 263.2h1v1.6h-1zM935.1 271.5h1v1.6h-1zM935.1 279.8h1v1.6h-1zM935.1 288.1h1v1.6h-1zM935.1 296.4h1v1.6h-1zM935.1 304.7h1v1.6h-1zM935.1 313.0h1v1.6h-1zM935.1 321.3h1v1.6h-1zM935.1 329.6h1v1.6h-1zM935.1 337.9h1v1.6h-1zM935.1 346.2h1v1.6h-1zM935.1 354.5h1v1.6h-1zM935.1 362.8h1v1.6h-1zM935.1 371.1h1v1.6h-1zM935.1 379.4h1v1.6h-1zM935.1 387.7h1v1.6h-1zM935.1 396.0h1v1.6h-1zM935.1 404.3h1v1.6h-1zM935.1 412.6h1v1.6h-1zM935.1 420.9h1v1.6h-1zM935.1 429.2h1v1.6h-1zM935.1 437.5h1v1.6h-1zM935.1 445.8h1v1.6h-1zM935.1 454.1h1v1.6h-1zM935.1 462.4h1v1.6h-1zM943.3 5.9h1v1.6h-1zM943.3 14.2h1v1.6h-1zM943.3 22.5h1v1.6h-1zM943.3 30.8h1v1.6h-1zM943.3 39.1h1v1.6h-1zM943.3 47.4h1v1.6h-1zM943.3 55.7h1v1.6h-1zM943.3 64.0h1v1.6h-1zM943.3 72.3h1v1.6h-1zM943.3 80.6h1v1.6h-1zM943.3 88.9h1v1.6h-1zM943.3 97.2h1v1.6h-1zM943.3 105.5h1v1.6h-1zM943.3 113.8h1v1.6h-1zM943.3 122.1h1v1.6h-1zM943.3 130.4h1v1.6h-1zM943.3 138.7h1v1.6h-1zM943.3 147.0h1v1.6h-1zM943.3 155.3h1v1.6h-1zM943.3 163.6h1v1.6h-1zM943.3 171.9h1v1.6h-1zM943.3 180.2h1v1.6h-1zM943.3 188.5h1v1.6h-1zM943.3 196.8h1v1.6h-1zM943.3 205.1h1v1.6h-1zM943.3 213.4h1v1.6h-1zM943.3 221.7h1v1.6h-1zM943.3 230.0h1v1.6h-1zM943.3 238.3h1v1.6h-1zM943.3 246.6h1v1.6h-1zM943.3 254.9h1v1.6h-1zM943.3 263.2h1v1.6h-1zM943.3 271.5h1v1.6h-1zM943.3 279.8h1v1.6h-1zM943.3 288.1h1v1.6h-1zM943.3 296.4h1v1.6h-1zM943.3 304.7h1v1.6h-1zM943.3 313.0h1v1.6h-1zM943.3 321.3h1v1.6h-1zM943.3 329.6h1v1.6h-1zM943.3 337.9h1v1.6h-1zM943.3 346.2h1v1.6h-1zM943.3 354.5h1v1.6h-1zM943.3 362.8h1v1.6h-1zM943.3 371.1h1v1.6h-1zM943.3 379.4h1v1.6h-1zM943.3 387.7h1v1.6h-1zM943.3 396.0h1v1.6h-1zM943.3 404.3h1v1.6h-1zM943.3 412.6h1v1.6h-1zM943.3 420.9h1v1.6h-1zM943.3 429.2h1v1.6h-1zM943.3 437.5h1v1.6h-1zM943.3 445.8h1v1.6h-1zM943.3 454.1h1v1.6h-1zM943.3 462.4h1v1.6h-1zM951.6 5.9h1v1.6h-1zM951.6 14.2h1v1.6h-1zM951.6 22.5h1v1.6h-1zM951.6 30.8h1v1.6h-1zM951.6 39.1h1v1.6h-1zM951.6 47.4h1v1.6h-1zM951.6 55.7h1v1.6h-1zM951.6 64.0h1v1.6h-1zM951.6 72.3h1v1.6h-1zM951.6 80.6h1v1.6h-1zM951.6 88.9h1v1.6h-1zM951.6 97.2h1v1.6h-1zM951.6 105.5h1v1.6h-1zM951.6 113.8h1v1.6h-1zM951.6 122.1h1v1.6h-1zM951.6 130.4h1v1.6h-1zM951.6 138.7h1v1.6h-1zM951.6 147.0h1v1.6h-1zM951.6 155.3h1v1.6h-1zM951.6 163.6h1v1.6h-1zM951.6 171.9h1v1.6h-1zM951.6 180.2h1v1.6h-1zM951.6 188.5h1v1.6h-1zM951.6 196.8h1v1.6h-1zM951.6 205.1h1v1.6h-1zM951.6 213.4h1v1.6h-1zM951.6 221.7h1v1.6h-1zM951.6 230.0h1v1.6h-1zM951.6 238.3h1v1.6h-1zM951.6 246.6h1v1.6h-1zM951.6 254.9h1v1.6h-1zM951.6 263.2h1v1.6h-1zM951.6 271.5h1v1.6h-1zM951.6 279.8h1v1.6h-1zM951.6 288.1h1v1.6h-1zM951.6 296.4h1v1.6h-1zM951.6 304.7h1v1.6h-1zM951.6 313.0h1v1.6h-1zM951.6 321.3h1v1.6h-1zM951.6 329.6h1v1.6h-1zM951.6 337.9h1v1.6h-1zM951.6 346.2h1v1.6h-1zM951.6 354.5h1v1.6h-1zM951.6 362.8h1v1.6h-1zM951.6 371.1h1v1.6h-1zM951.6 379.4h1v1.6h-1zM951.6 387.7h1v1.6h-1zM951.6 396.0h1v1.6h-1zM951.6 404.3h1v1.6h-1zM951.6 412.6h1v1.6h-1zM951.6 420.9h1v1.6h-1zM951.6 429.2h1v1.6h-1zM951.6 437.5h1v1.6h-1zM951.6 445.8h1v1.6h-1zM951.6 454.1h1v1.6h-1zM951.6 462.4h1v1.6h-1zM959.9 5.9h1v1.6h-1zM959.9 14.2h1v1.6h-1zM959.9 22.5h1v1.6h-1zM959.9 30.8h1v1.6h-1zM959.9 39.1h1v1.6h-1zM959.9 47.4h1v1.6h-1zM959.9 55.7h1v1.6h-1zM959.9 64.0h1v1.6h-1zM959.9 72.3h1v1.6h-1zM959.9 80.6h1v1.6h-1zM959.9 88.9h1v1.6h-1zM959.9 97.2h1v1.6h-1zM959.9 105.5h1v1.6h-1zM959.9 113.8h1v1.6h-1zM959.9 122.1h1v1.6h-1zM959.9 130.4h1v1.6h-1zM959.9 138.7h1v1.6h-1zM959.9 147.0h1v1.6h-1zM959.9 155.3h1v1.6h-1zM959.9 163.6h1v1.6h-1zM959.9 171.9h1v1.6h-1zM959.9 180.2h1v1.6h-1zM959.9 188.5h1v1.6h-1zM959.9 196.8h1v1.6h-1zM959.9 205.1h1v1.6h-1zM959.9 213.4h1v1.6h-1zM959.9 221.7h1v1.6h-1zM959.9 230.0h1v1.6h-1zM959.9 238.3h1v1.6h-1zM959.9 246.6h1v1.6h-1zM959.9 254.9h1v1.6h-1zM959.9 263.2h1v1.6h-1zM959.9 271.5h1v1.6h-1zM959.9 279.8h1v1.6h-1zM959.9 288.1h1v1.6h-1zM959.9 296.4h1v1.6h-1zM959.9 304.7h1v1.6h-1zM959.9 313.0h1v1.6h-1zM959.9 321.3h1v1.6h-1zM959.9 329.6h1v1.6h-1zM959.9 337.9h1v1.6h-1zM959.9 346.2h1v1.6h-1zM959.9 354.5h1v1.6h-1zM959.9 362.8h1v1.6h-1zM959.9 371.1h1v1.6h-1zM959.9 379.4h1v1.6h-1zM959.9 387.7h1v1.6h-1zM959.9 396.0h1v1.6h-1zM959.9 404.3h1v1.6h-1zM959.9 412.6h1v1.6h-1zM959.9 420.9h1v1.6h-1zM959.9 429.2h1v1.6h-1zM959.9 437.5h1v1.6h-1zM959.9 445.8h1v1.6h-1zM959.9 454.1h1v1.6h-1zM959.9 462.4h1v1.6h-1zM968.2 5.9h1v1.6h-1zM968.2 14.2h1v1.6h-1zM968.2 22.5h1v1.6h-1zM968.2 30.8h1v1.6h-1zM968.2 39.1h1v1.6h-1zM968.2 47.4h1v1.6h-1zM968.2 55.7h1v1.6h-1zM968.2 64.0h1v1.6h-1zM968.2 72.3h1v1.6h-1zM968.2 80.6h1v1.6h-1zM968.2 88.9h1v1.6h-1zM968.2 97.2h1v1.6h-1zM968.2 105.5h1v1.6h-1zM968.2 113.8h1v1.6h-1zM968.2 122.1h1v1.6h-1zM968.2 130.4h1v1.6h-1zM968.2 138.7h1v1.6h-1zM968.2 147.0h1v1.6h-1zM968.2 155.3h1v1.6h-1zM968.2 163.6h1v1.6h-1zM968.2 171.9h1v1.6h-1zM968.2 180.2h1v1.6h-1zM968.2 188.5h1v1.6h-1zM968.2 196.8h1v1.6h-1zM968.2 205.1h1v1.6h-1zM968.2 213.4h1v1.6h-1zM968.2 221.7h1v1.6h-1zM968.2 230.0h1v1.6h-1zM968.2 238.3h1v1.6h-1zM968.2 246.6h1v1.6h-1zM968.2 254.9h1v1.6h-1zM968.2 263.2h1v1.6h-1zM968.2 271.5h1v1.6h-1zM968.2 279.8h1v1.6h-1zM968.2 288.1h1v1.6h-1zM968.2 296.4h1v1.6h-1zM968.2 304.7h1v1.6h-1zM968.2 313.0h1v1.6h-1zM968.2 321.3h1v1.6h-1zM968.2 329.6h1v1.6h-1zM968.2 337.9h1v1.6h-1zM968.2 346.2h1v1.6h-1zM968.2 354.5h1v1.6h-1zM968.2 362.8h1v1.6h-1zM968.2 371.1h1v1.6h-1zM968.2 379.4h1v1.6h-1zM968.2 387.7h1v1.6h-1zM968.2 396.0h1v1.6h-1zM968.2 404.3h1v1.6h-1zM968.2 412.6h1v1.6h-1zM968.2 420.9h1v1.6h-1zM968.2 429.2h1v1.6h-1zM968.2 437.5h1v1.6h-1zM968.2 445.8h1v1.6h-1zM968.2 454.1h1v1.6h-1zM968.2 462.4h1v1.6h-1zM976.5 5.9h1v1.6h-1zM976.5 14.2h1v1.6h-1zM976.5 22.5h1v1.6h-1zM976.5 30.8h1v1.6h-1zM976.5 39.1h1v1.6h-1zM976.5 47.4h1v1.6h-1zM976.5 55.7h1v1.6h-1zM976.5 64.0h1v1.6h-1zM976.5 72.3h1v1.6h-1zM976.5 80.6h1v1.6h-1zM976.5 88.9h1v1.6h-1zM976.5 97.2h1v1.6h-1zM976.5 105.5h1v1.6h-1zM976.5 113.8h1v1.6h-1zM976.5 122.1h1v1.6h-1zM976.5 130.4h1v1.6h-1zM976.5 138.7h1v1.6h-1zM976.5 147.0h1v1.6h-1zM976.5 155.3h1v1.6h-1zM976.5 163.6h1v1.6h-1zM976.5 171.9h1v1.6h-1zM976.5 180.2h1v1.6h-1zM976.5 188.5h1v1.6h-1zM976.5 196.8h1v1.6h-1zM976.5 205.1h1v1.6h-1zM976.5 213.4h1v1.6h-1zM976.5 221.7h1v1.6h-1zM976.5 230.0h1v1.6h-1zM976.5 238.3h1v1.6h-1zM976.5 246.6h1v1.6h-1zM976.5 254.9h1v1.6h-1zM976.5 263.2h1v1.6h-1zM976.5 271.5h1v1.6h-1zM976.5 279.8h1v1.6h-1zM976.5 288.1h1v1.6h-1zM976.5 296.4h1v1.6h-1zM976.5 304.7h1v1.6h-1zM976.5 313.0h1v1.6h-1zM976.5 321.3h1v1.6h-1zM976.5 329.6h1v1.6h-1zM976.5 337.9h1v1.6h-1zM976.5 346.2h1v1.6h-1zM976.5 354.5h1v1.6h-1zM976.5 362.8h1v1.6h-1zM976.5 371.1h1v1.6h-1zM976.5 379.4h1v1.6h-1zM976.5 387.7h1v1.6h-1zM976.5 396.0h1v1.6h-1zM976.5 404.3h1v1.6h-1zM976.5 412.6h1v1.6h-1zM976.5 420.9h1v1.6h-1zM976.5 429.2h1v1.6h-1zM976.5 437.5h1v1.6h-1zM976.5 445.8h1v1.6h-1zM976.5 454.1h1v1.6h-1zM976.5 462.4h1v1.6h-1zM984.8 5.9h1v1.6h-1zM984.8 14.2h1v1.6h-1zM984.8 22.5h1v1.6h-1zM984.8 30.8h1v1.6h-1zM984.8 39.1h1v1.6h-1zM984.8 47.4h1v1.6h-1zM984.8 55.7h1v1.6h-1zM984.8 64.0h1v1.6h-1zM984.8 72.3h1v1.6h-1zM984.8 80.6h1v1.6h-1zM984.8 88.9h1v1.6h-1zM984.8 97.2h1v1.6h-1zM984.8 105.5h1v1.6h-1zM984.8 113.8h1v1.6h-1zM984.8 122.1h1v1.6h-1zM984.8 130.4h1v1.6h-1zM984.8 138.7h1v1.6h-1zM984.8 147.0h1v1.6h-1zM984.8 155.3h1v1.6h-1zM984.8 163.6h1v1.6h-1zM984.8 171.9h1v1.6h-1zM984.8 180.2h1v1.6h-1zM984.8 188.5h1v1.6h-1zM984.8 196.8h1v1.6h-1zM984.8 205.1h1v1.6h-1zM984.8 213.4h1v1.6h-1zM984.8 221.7h1v1.6h-1zM984.8 230.0h1v1.6h-1zM984.8 238.3h1v1.6h-1zM984.8 246.6h1v1.6h-1zM984.8 254.9h1v1.6h-1zM984.8 263.2h1v1.6h-1zM984.8 271.5h1v1.6h-1zM984.8 279.8h1v1.6h-1zM984.8 288.1h1v1.6h-1zM984.8 296.4h1v1.6h-1zM984.8 304.7h1v1.6h-1zM984.8 313.0h1v1.6h-1zM984.8 321.3h1v1.6h-1zM984.8 329.6h1v1.6h-1zM984.8 337.9h1v1.6h-1zM984.8 346.2h1v1.6h-1zM984.8 354.5h1v1.6h-1zM984.8 362.8h1v1.6h-1zM984.8 371.1h1v1.6h-1zM984.8 379.4h1v1.6h-1zM984.8 387.7h1v1.6h-1zM984.8 396.0h1v1.6h-1zM984.8 404.3h1v1.6h-1zM984.8 412.6h1v1.6h-1zM984.8 420.9h1v1.6h-1zM984.8 429.2h1v1.6h-1zM984.8 437.5h1v1.6h-1zM984.8 445.8h1v1.6h-1zM984.8 454.1h1v1.6h-1zM984.8 462.4h1v1.6h-1zM993.1 5.9h1v1.6h-1zM993.1 14.2h1v1.6h-1zM993.1 22.5h1v1.6h-1zM993.1 30.8h1v1.6h-1zM993.1 39.1h1v1.6h-1zM993.1 47.4h1v1.6h-1zM993.1 55.7h1v1.6h-1zM993.1 64.0h1v1.6h-1zM993.1 72.3h1v1.6h-1zM993.1 80.6h1v1.6h-1zM993.1 88.9h1v1.6h-1zM993.1 97.2h1v1.6h-1zM993.1 105.5h1v1.6h-1zM993.1 113.8h1v1.6h-1zM993.1 122.1h1v1.6h-1zM993.1 130.4h1v1.6h-1zM993.1 138.7h1v1.6h-1zM993.1 147.0h1v1.6h-1zM993.1 155.3h1v1.6h-1zM993.1 163.6h1v1.6h-1zM993.1 171.9h1v1.6h-1zM993.1 180.2h1v1.6h-1zM993.1 188.5h1v1.6h-1zM993.1 196.8h1v1.6h-1zM993.1 205.1h1v1.6h-1zM993.1 213.4h1v1.6h-1zM993.1 221.7h1v1.6h-1zM993.1 230.0h1v1.6h-1zM993.1 238.3h1v1.6h-1zM993.1 246.6h1v1.6h-1zM993.1 254.9h1v1.6h-1zM993.1 263.2h1v1.6h-1zM993.1 271.5h1v1.6h-1zM993.1 279.8h1v1.6h-1zM993.1 288.1h1v1.6h-1zM993.1 296.4h1v1.6h-1zM993.1 304.7h1v1.6h-1zM993.1 313.0h1v1.6h-1zM993.1 321.3h1v1.6h-1zM993.1 329.6h1v1.6h-1zM993.1 337.9h1v1.6h-1zM993.1 346.2h1v1.6h-1zM993.1 354.5h1v1.6h-1zM993.1 362.8h1v1.6h-1zM993.1 371.1h1v1.6h-1zM993.1 379.4h1v1.6h-1zM993.1 387.7h1v1.6h-1zM993.1 396.0h1v1.6h-1zM993.1 404.3h1v1.6h-1zM993.1 412.6h1v1.6h-1zM993.1 420.9h1v1.6h-1zM993.1 429.2h1v1.6h-1zM993.1 437.5h1v1.6h-1zM993.1 445.8h1v1.6h-1zM993.1 454.1h1v1.6h-1zM993.1 462.4h1v1.6h-1z" fill="#a8a8a8"/>
<polyline points="172,57 172,14.6 487.4,14.6 487.4,23.5" stroke="#983232" stroke-width="1.7" fill="none" stroke-linejoin="miter" />
<line x1="172" y1="57" x2="172" y2="73" stroke="#1c1c1c" stroke-width="1.5" />
<line x1="163.8" y1="73" x2="180" y2="73" stroke="#1c1c1c" stroke-width="2" />
<line x1="163.8" y1="79.5" x2="180" y2="79.5" stroke="#1c1c1c" stroke-width="2" />
<line x1="172" y1="79.5" x2="172" y2="96.5" stroke="#1c1c1c" stroke-width="1.5" />
<polyline points="172,96.5 172,139 222,139" stroke="#983232" stroke-width="1.7" fill="none" stroke-linejoin="miter" />
<line x1="222" y1="14.6" x2="222" y2="25" stroke="#983232" stroke-width="1.7" />
<line x1="222" y1="25" x2="222" y2="30.7" stroke="#1c1c1c" stroke-width="1.5" />
<polyline points="222,30.7 226.2,32.81666666666666 217.8,37.05 226.2,41.28333333333333 217.8,45.516666666666666 226.2,49.75 217.8,53.983333333333334 222,56.1" stroke="#1c1c1c" stroke-width="1.5" fill="none" stroke-linejoin="miter" />
<line x1="222" y1="56.1" x2="222" y2="62" stroke="#1c1c1c" stroke-width="1.5" />
<polygon points="217.7,60 222,62.24 226.3,60 222,68" fill="#26b026" stroke="none" stroke-width="1" />
<line x1="222" y1="67" x2="222" y2="73" stroke="#983232" stroke-width="1.7" />
<polyline points="222,73 387.5,73 387.5,115.5" stroke="#983232" stroke-width="1.7" fill="none" stroke-linejoin="miter" />
<polygon points="300.6,68.7 302.952,73 300.6,77.3 309,73" fill="#26b026" stroke="none" stroke-width="1" />
<line x1="387.5" y1="115.5" x2="387.5" y2="132" stroke="#1c1c1c" stroke-width="1.5" />
<line x1="379" y1="132" x2="397" y2="132" stroke="#1c1c1c" stroke-width="2" />
<line x1="379" y1="138.7" x2="397" y2="138.7" stroke="#1c1c1c" stroke-width="2" />
<line x1="387.5" y1="138.7" x2="387.5" y2="156" stroke="#1c1c1c" stroke-width="1.5" />
<polyline points="387.5,156 387.5,206 272,206" stroke="#983232" stroke-width="1.7" fill="none" stroke-linejoin="miter" />
<line x1="272" y1="206" x2="239" y2="206" stroke="#1c1c1c" stroke-width="1.5" />
<polygon points="284,201.7 286.352,206 284,210.3 292.4,206" fill="#26b026" stroke="none" stroke-width="1" />
<line x1="321.25" y1="73" x2="321.25" y2="98.2" stroke="#983232" stroke-width="1.7" />
<line x1="321.25" y1="98.2" x2="321.25" y2="105" stroke="#1c1c1c" stroke-width="1.5" />
<polyline points="321.25,105 325.45,107.2 317.05,111.6 325.45,116.0 317.05,120.4 325.45,124.80000000000001 317.05,129.20000000000002 321.25,131.4" stroke="#1c1c1c" stroke-width="1.5" fill="none" stroke-linejoin="miter" />
<line x1="321.25" y1="131.4" x2="321.25" y2="140" stroke="#1c1c1c" stroke-width="1.5" />
<line x1="321.25" y1="139.6" x2="321.25" y2="206" stroke="#983232" stroke-width="1.7" />
<line x1="222" y1="73" x2="222" y2="93.5" stroke="#983232" stroke-width="1.7" />
<line x1="222" y1="93.5" x2="222" y2="97" stroke="#1c1c1c" stroke-width="1.5" />
<polyline points="222,97 226.2,99.11666666666667 217.8,103.35 226.2,107.58333333333334 217.8,111.81666666666666 226.2,116.05000000000001 217.8,120.28333333333335 222,122.4" stroke="#1c1c1c" stroke-width="1.5" fill="none" stroke-linejoin="miter" />
<line x1="222" y1="122.4" x2="222" y2="127" stroke="#1c1c1c" stroke-width="1.5" />
<polygon points="217.7,126.5 222,128.768 226.3,126.5 222,134.6" fill="#26b026" stroke="none" stroke-width="1" />
<line x1="222" y1="133" x2="222" y2="163.8" stroke="#983232" stroke-width="1.7" />
<polygon points="217.7,151.8 222,154.096 226.3,151.8 222,160" fill="#26b026" stroke="none" stroke-width="1" />
<line x1="222" y1="163.8" x2="222" y2="196.5" stroke="#1c1c1c" stroke-width="1.5" />
<line x1="222" y1="164" x2="503.7" y2="164" stroke="#983232" stroke-width="1.7" />
<line x1="503.7" y1="164" x2="522.6" y2="164" stroke="#1c1c1c" stroke-width="1.5" />
<line x1="522.6" y1="156.7" x2="522.6" y2="173.5" stroke="#1c1c1c" stroke-width="2" />
<line x1="528.6" y1="156.7" x2="528.6" y2="173.5" stroke="#1c1c1c" stroke-width="2" />
<line x1="528.6" y1="164" x2="545.8" y2="164" stroke="#1c1c1c" stroke-width="1.5" />
<polyline points="545.8,164 553.9,164 553.9,438.1 262.8,438.1 262.8,430" stroke="#983232" stroke-width="1.7" fill="none" stroke-linejoin="miter" />
<line x1="262.8" y1="430" x2="262.8" y2="414" stroke="#1c1c1c" stroke-width="1.5" />
<line x1="487.4" y1="23.5" x2="487.4" y2="31.2" stroke="#1c1c1c" stroke-width="1.5" />
<line x1="476.5" y1="31.2" x2="498.8" y2="31.2" stroke="#1c1c1c" stroke-width="2" />
<line x1="482.3" y1="36.8" x2="493.5" y2="36.8" stroke="#1c1c1c" stroke-width="2.2" />
<line x1="476.5" y1="42.3" x2="498.8" y2="42.3" stroke="#1c1c1c" stroke-width="2" />
<line x1="482.3" y1="47.8" x2="493.5" y2="47.8" stroke="#1c1c1c" stroke-width="2.2" />
<line x1="487.4" y1="47.8" x2="487.4" y2="57" stroke="#1c1c1c" stroke-width="1.5" />
<polyline points="487.4,57 487.4,322 80.5,322 80.5,213" stroke="#983232" stroke-width="1.7" fill="none" stroke-linejoin="miter" />
<line x1="22.5" y1="67" x2="22.5" y2="79.5" stroke="#1c1c1c" stroke-width="1.5" />
<polyline points="22.5,79.5 22.5,438.1 229.2,438.1 229.2,430" stroke="#983232" stroke-width="1.7" fill="none" stroke-linejoin="miter" />
<line x1="229.2" y1="430" x2="229.2" y2="414" stroke="#1c1c1c" stroke-width="1.5" />
<polyline points="22.5,164 80.5,164 80.5,172.2" stroke="#983232" stroke-width="1.7" fill="none" stroke-linejoin="miter" />
<line x1="80.5" y1="172" x2="80.5" y2="180.9" stroke="#1c1c1c" stroke-width="1.5" />
<polyline points="80.5,180.9 76.9,183.00833333333333 84.1,187.225 76.9,191.44166666666666 84.1,195.65833333333333 76.9,199.875 84.1,204.09166666666667 80.5,206.2" stroke="#1c1c1c" stroke-width="1.5" fill="none" stroke-linejoin="miter" />
<line x1="80.5" y1="206.2" x2="80.5" y2="213" stroke="#1c1c1c" stroke-width="1.5" />
<polyline points="90,193.2 98.5,189.1 104,189.1" stroke="#1c1c1c" stroke-width="1.5" fill="none" stroke-linejoin="miter" />
<polygon points="83.5,195.5 91.8,190.6 92.3,196.3" fill="#1c1c1c" stroke="none" stroke-width="1" />
<polyline points="104,189.3 113.8,189.3 113.8,213.8 179.6,213.8" stroke="#983232" stroke-width="1.7" fill="none" stroke-linejoin="miter" />
<line x1="179.6" y1="214" x2="205" y2="214" stroke="#1c1c1c" stroke-width="1.5" />
<line x1="113.8" y1="213.8" x2="113.8" y2="240" stroke="#983232" stroke-width="1.7" />
<line x1="113.8" y1="240" x2="113.8" y2="246.7" stroke="#1c1c1c" stroke-width="1.5" />
<polyline points="113.8,246.7 118.0,248.95 109.6,253.45 118.0,257.95 109.6,262.45 118.0,266.95 109.6,271.45 113.8,273.7" stroke="#1c1c1c" stroke-width="1.5" fill="none" stroke-linejoin="miter" />
<line x1="113.8" y1="273.7" x2="113.8" y2="280" stroke="#1c1c1c" stroke-width="1.5" />
<line x1="113.8" y1="280" x2="113.8" y2="322" stroke="#983232" stroke-width="1.7" />
<line x1="197.6" y1="230.3" x2="185" y2="230.3" stroke="#1c1c1c" stroke-width="1.5" />
<polyline points="185,230.3 172.2,230.3 172.2,263.9 238.9,263.9 238.9,286" stroke="#983232" stroke-width="1.7" fill="none" stroke-linejoin="miter" />
<polygon points="167.89999999999998,235.2 172.2,237.384 176.5,235.2 172.2,243" fill="#26b026" stroke="none" stroke-width="1" />
<line x1="172.2" y1="263.9" x2="172.2" y2="269.7" stroke="#983232" stroke-width="1.7" />
<line x1="172.2" y1="269.7" x2="172.2" y2="279.8" stroke="#1c1c1c" stroke-width="1.5" />
<polyline points="172.2,279.8 176.39999999999998,282.0416666666667 168.0,286.525 176.39999999999998,291.0083333333333 168.0,295.4916666666667 176.39999999999998,299.975 168.0,304.4583333333333 172.2,306.7" stroke="#1c1c1c" stroke-width="1.5" fill="none" stroke-linejoin="miter" />
<line x1="172.2" y1="306.7" x2="172.2" y2="315" stroke="#1c1c1c" stroke-width="1.5" />
<line x1="172.2" y1="315" x2="172.2" y2="322" stroke="#983232" stroke-width="1.7" />
<line x1="238.9" y1="286" x2="238.9" y2="298.6" stroke="#1c1c1c" stroke-width="1.5" />
<line x1="229" y1="298.6" x2="248" y2="298.6" stroke="#1c1c1c" stroke-width="2" />
<path d="M229.7 308.2 Q238.9 300.2 248 308.2" stroke="#1c1c1c" stroke-width="2" fill="none"/>
<line x1="238.9" y1="304.3" x2="238.9" y2="317.6" stroke="#1c1c1c" stroke-width="1.5" />
<line x1="238.9" y1="317.6" x2="238.9" y2="322" stroke="#983232" stroke-width="1.7" />
<line x1="229.4" y1="293.1" x2="234.6" y2="293.1" stroke="#d02020" stroke-width="1.2" />
<line x1="232" y1="290.6" x2="232" y2="295.6" stroke="#d02020" stroke-width="1.2" />
<line x1="428.8" y1="322" x2="428.8" y2="338" stroke="#1c1c1c" stroke-width="1.5" />
<line x1="421.3" y1="338.5" x2="437.9" y2="338.5" stroke="#1c1c1c" stroke-width="1.7" />
<line x1="424" y1="341.3" x2="434" y2="341.3" stroke="#1c1c1c" stroke-width="1.5" />
<line x1="426.5" y1="344.1" x2="431" y2="344.1" stroke="#1c1c1c" stroke-width="1.5" />
<path d="M197.6 227.2 V198.75 A25.35 9 0 0 1 248.3 198.75 V227.2 A25.35 11 0 0 1 197.6 227.2 Z" stroke="#1c1c1c" stroke-width="1.7" fill="none"/>
<line x1="206.7" y1="197.4" x2="239.3" y2="197.4" stroke="#333" stroke-width="1.1" />
<line x1="206.7" y1="206.1" x2="239.3" y2="206.1" stroke="#2a2a2a" stroke-width="1.1" stroke-dasharray="2.3,1.8"/>
<line x1="206.7" y1="214" x2="239.3" y2="214" stroke="#2a2a2a" stroke-width="1.1" stroke-dasharray="2.3,1.8"/>
<polyline points="199.7,228.5 206,222.4 238.6,222.4 238.6,224.5" stroke="#6a6a6a" stroke-width="1.4" fill="none" stroke-linejoin="miter" />
<polyline points="213.6,238.3 213.6,233.5 222.2,225.1 231,233.5 231,238.3" stroke="#444" stroke-width="1.1" fill="none" stroke-linejoin="miter" />
<text x="224.5" y="184" font-family="Liberation Sans" font-size="8" font-weight="normal" fill="#555" text-anchor="start" >1</text>
<text x="183.5" y="213" font-family="Liberation Sans" font-size="8" font-weight="normal" fill="#555" text-anchor="start" >2</text>
<text x="183.5" y="230" font-family="Liberation Sans" font-size="8" font-weight="normal" fill="#555" text-anchor="start" >3</text>
<circle cx="222" cy="14.6" r="2.2" fill="#c42028" stroke="none" stroke-width="1"/>
<circle cx="222" cy="73" r="2.2" fill="#c42028" stroke="none" stroke-width="1"/>
<circle cx="321.25" cy="73" r="2.2" fill="#c42028" stroke="none" stroke-width="1"/>
<circle cx="222" cy="139" r="2.2" fill="#c42028" stroke="none" stroke-width="1"/>
<circle cx="222" cy="164" r="2.2" fill="#c42028" stroke="none" stroke-width="1"/>
<circle cx="22.5" cy="164" r="2.2" fill="#c42028" stroke="none" stroke-width="1"/>
<circle cx="113.8" cy="213.8" r="2.2" fill="#c42028" stroke="none" stroke-width="1"/>
<circle cx="321.25" cy="206" r="2.2" fill="#c42028" stroke="none" stroke-width="1"/>
<circle cx="172.2" cy="263.9" r="2.2" fill="#c42028" stroke="none" stroke-width="1"/>
<circle cx="113.8" cy="322" r="2.2" fill="#c42028" stroke="none" stroke-width="1"/>
<circle cx="172.2" cy="322" r="2.2" fill="#c42028" stroke="none" stroke-width="1"/>
<circle cx="238.9" cy="322" r="2.2" fill="#c42028" stroke="none" stroke-width="1"/>
<circle cx="428.8" cy="322" r="2.2" fill="#c42028" stroke="none" stroke-width="1"/>
<circle cx="239" cy="445.7" r="2.2" fill="#c42028" stroke="none" stroke-width="1"/>
<circle cx="504" cy="438.1" r="2.2" fill="#c42028" stroke="none" stroke-width="1"/>
<text x="228.1" y="35.3" font-family="Liberation Sans" font-size="12" font-weight="bold" fill="#111" text-anchor="start" >R1</text>
<text x="228.1" y="48.4" font-family="Liberation Sans" font-size="12" font-weight="bold" fill="#111" text-anchor="start" >2.6kΩ</text>
<text x="183.3" y="68.7" font-family="Liberation Sans" font-size="12" font-weight="bold" fill="#111" text-anchor="start" >C5</text>
<text x="183.3" y="82.3" font-family="Liberation Sans" font-size="12" font-weight="bold" fill="#111" text-anchor="start" >270pF</text>
<text x="227.7" y="101.9" font-family="Liberation Sans" font-size="12" font-weight="bold" fill="#111" text-anchor="start" >R14</text>
<text x="227.7" y="114.8" font-family="Liberation Sans" font-size="12" font-weight="bold" fill="#111" text-anchor="start" >5.2kΩ</text>
<text x="328" y="110.5" font-family="Liberation Sans" font-size="12" font-weight="bold" fill="#111" text-anchor="start" >R15</text>
<text x="328" y="123.7" font-family="Liberation Sans" font-size="12" font-weight="bold" fill="#111" text-anchor="start" >28kΩ</text>
<text x="399.5" y="127.6" font-family="Liberation Sans" font-size="12" font-weight="bold" fill="#111" text-anchor="start" >C6</text>
<text x="399.5" y="141" font-family="Liberation Sans" font-size="12" font-weight="bold" fill="#111" text-anchor="start" >10µF</text>
<text x="500.5" y="31.7" font-family="Liberation Sans" font-size="12" font-weight="bold" fill="#111" text-anchor="start" >V1</text>
<text x="500.5" y="44.7" font-family="Liberation Sans" font-size="12" font-weight="bold" fill="#111" text-anchor="start" >380 V</text>
<text x="517.2" y="152.5" font-family="Liberation Sans" font-size="12" font-weight="bold" fill="#111" text-anchor="start" >C1</text>
<text x="509.7" y="187.6" font-family="Liberation Sans" font-size="12" font-weight="bold" fill="#111" text-anchor="start" >4.7µF</text>
<text x="67.5" y="157.5" font-family="Liberation Sans" font-size="12" font-weight="bold" fill="#111" text-anchor="start" >100%</text>
<text x="25" y="190.6" font-family="Liberation Sans" font-size="12" font-weight="bold" fill="#111" text-anchor="start" >R13</text>
<text x="18.8" y="207.5" font-family="Liberation Sans" font-size="12" font-weight="bold" fill="#111" text-anchor="start" >10kΩ</text>
<text x="18" y="222.2" font-family="Liberation Sans" font-size="12" font-weight="bold" fill="#111" text-anchor="start" >Key=A</text>
<text x="119.4" y="251.4" font-family="Liberation Sans" font-size="12" font-weight="bold" fill="#111" text-anchor="start" >R12</text>
<text x="119.4" y="264.4" font-family="Liberation Sans" font-size="12" font-weight="bold" fill="#111" text-anchor="start" >300kΩ</text>
<text x="177.8" y="284.7" font-family="Liberation Sans" font-size="12" font-weight="bold" fill="#111" text-anchor="start" >R11</text>
<text x="177.8" y="297.2" font-family="Liberation Sans" font-size="12" font-weight="bold" fill="#111" text-anchor="start" >100Ω</text>
<text x="227.8" y="277.2" font-family="Liberation Sans" font-size="12" font-weight="bold" fill="#111" text-anchor="start" >C16</text>
<text x="249.3" y="307.3" font-family="Liberation Sans" font-size="12" font-weight="bold" fill="#111" text-anchor="start" >2200µF</text>
<line x1="238.9" y1="266" x2="238.9" y2="286" stroke="#983232" stroke-width="1.7" />
<text x="201.7" y="186.5" font-family="Liberation Sans" font-size="12" font-weight="bold" fill="#111" text-anchor="start" >U3</text>
<text x="228.7" y="183" font-family="Liberation Sans" font-size="12" font-weight="bold" fill="#111" text-anchor="start" >6E5P*</text>
<rect x="230.5" y="51.3" width="42" height="18.7" fill="#f5f0ac" stroke="none" stroke-width="1" />
<text x="233.1" y="59.599999999999994" font-family="Liberation Sans" font-size="6.7" font-weight="normal" fill="#26260e" text-anchor="start" stroke="#26260e" stroke-width="0.25">V: 317 V</text>
<text x="233.1" y="67.69999999999999" font-family="Liberation Sans" font-size="6.7" font-weight="normal" fill="#26260e" text-anchor="start" stroke="#26260e" stroke-width="0.25">I: 24.2 mA</text>
<rect x="297.5" y="45" width="42.5" height="18.7" fill="#f5f0ac" stroke="none" stroke-width="1" />
<text x="300.1" y="53.3" font-family="Liberation Sans" font-size="6.7" font-weight="normal" fill="#26260e" text-anchor="start" stroke="#26260e" stroke-width="0.25">V: 317 V</text>
<text x="300.1" y="61.4" font-family="Liberation Sans" font-size="6.7" font-weight="normal" fill="#26260e" text-anchor="start" stroke="#26260e" stroke-width="0.25">I: 3.86 mA</text>
<rect x="232.9" y="122.5" width="39" height="19.2" fill="#f5f0ac" stroke="none" stroke-width="1" />
<text x="235.5" y="130.8" font-family="Liberation Sans" font-size="6.7" font-weight="normal" fill="#26260e" text-anchor="start" stroke="#26260e" stroke-width="0.25">V: 211 V</text>
<text x="235.5" y="138.9" font-family="Liberation Sans" font-size="6.7" font-weight="normal" fill="#26260e" text-anchor="start" stroke="#26260e" stroke-width="0.25">I: 20.4 mA</text>
<rect x="163.7" y="151.3" width="49" height="17.4" fill="#f5f0ac" stroke="none" stroke-width="1" />
<text x="166.29999999999998" y="159.60000000000002" font-family="Liberation Sans" font-size="6.7" font-weight="normal" fill="#26260e" text-anchor="start" stroke="#26260e" stroke-width="0.25">V(dc): 178 V</text>
<text x="166.29999999999998" y="167.70000000000002" font-family="Liberation Sans" font-size="6.7" font-weight="normal" fill="#26260e" text-anchor="start" stroke="#26260e" stroke-width="0.25">I(dc): 24.2 mA</text>
<rect x="271.5" y="221.2" width="41.8" height="17.6" fill="#f5f0ac" stroke="none" stroke-width="1" />
<text x="274.1" y="229.5" font-family="Liberation Sans" font-size="6.7" font-weight="normal" fill="#26260e" text-anchor="start" stroke="#26260e" stroke-width="0.25">V: 191 V</text>
<text x="274.1" y="237.6" font-family="Liberation Sans" font-size="6.7" font-weight="normal" fill="#26260e" text-anchor="start" stroke="#26260e" stroke-width="0.25">I: -2.87 mA</text>
<rect x="180.6" y="241.7" width="48.6" height="17.2" fill="#f5f0ac" stroke="none" stroke-width="1" />
<text x="183.2" y="250.0" font-family="Liberation Sans" font-size="6.7" font-weight="normal" fill="#26260e" text-anchor="start" stroke="#26260e" stroke-width="0.25">V(dc): 2.93 V</text>
<text x="183.2" y="258.09999999999997" font-family="Liberation Sans" font-size="6.7" font-weight="normal" fill="#26260e" text-anchor="start" stroke="#26260e" stroke-width="0.25">I(dc): 29.3 mA</text>
<text x="24.6" y="35.9" font-family="Liberation Mono" font-size="11" font-weight="bold" fill="#1a1a1a" text-anchor="start" textLength="28.5" lengthAdjust="spacingAndGlyphs" stroke="#1a1a1a" stroke-width="0.35">XFG1</text>
<rect x="14.5" y="40.5" width="49.3" height="32.5" fill="#c4dfc4" stroke="#2a3a2a" stroke-width="1.3" />
<rect x="16.4" y="44" width="13.700000000000003" height="10.7" fill="#c6c6c6" stroke="#e6ece6" stroke-width="0.8" />
<rect x="32.2" y="44" width="14.599999999999994" height="10.7" fill="#c6c6c6" stroke="#e6ece6" stroke-width="0.8" />
<rect x="49.3" y="44" width="13.300000000000004" height="10.7" fill="#c6c6c6" stroke="#e6ece6" stroke-width="0.8" />
<path d="M17.8 51.5 L20.5 48.3 L23 50.8 L25.5 48.3 L28.6 51.2" stroke="#333" stroke-width="0.9" fill="none"/>
<path d="M34 51.3 q2.5 2.2 5 -0.6 q2.8 -3.6 6 0" stroke="#333" stroke-width="0.9" fill="none"/>
<path d="M50.5 51.8 h2.6 v-3.6 h3.2 v3.6 h2.6 v-3.6 h2.4" stroke="#333" stroke-width="0.9" fill="none"/>
<line x1="20.8" y1="60.6" x2="25.6" y2="60.6" stroke="#333" stroke-width="0.9" />
<line x1="23.2" y1="58.2" x2="23.2" y2="63" stroke="#333" stroke-width="0.9" />
<line x1="53.4" y1="60.6" x2="58" y2="60.6" stroke="#333" stroke-width="0.9" />
<circle cx="22.4" cy="67" r="2.6" fill="#a8c8a8" stroke="#333" stroke-width="1.1"/>
<circle cx="39" cy="67" r="2.6" fill="#a8c8a8" stroke="#333" stroke-width="1.1"/>
<circle cx="55.7" cy="67" r="2.6" fill="#a8c8a8" stroke="#333" stroke-width="1.1"/>
<line x1="22.5" y1="67" x2="22.5" y2="79.5" stroke="#1c1c1c" stroke-width="1.8" />
<line x1="39" y1="67" x2="39" y2="90" stroke="#1c1c1c" stroke-width="1.8" />
<line x1="31.5" y1="90" x2="46.5" y2="90" stroke="#1c1c1c" stroke-width="1.6" />
<line x1="34" y1="93" x2="44" y2="93" stroke="#1c1c1c" stroke-width="1.5" />
<line x1="36.5" y1="96" x2="41.5" y2="96" stroke="#1c1c1c" stroke-width="1.5" />
<line x1="55.7" y1="67" x2="55.7" y2="81" stroke="#1c1c1c" stroke-width="1.8" />
<text x="257.2" y="350.8" font-family="Liberation Mono" font-size="11" font-weight="bold" fill="#1a1a1a" text-anchor="start" textLength="28.2" lengthAdjust="spacingAndGlyphs" stroke="#1a1a1a" stroke-width="0.35">XSC1</text>
<rect x="222.8" y="355.5" width="89.8" height="65.8" fill="#c6dfc6" stroke="#3a4a3a" stroke-width="1" />
<rect x="225.4" y="358.8" width="56.6" height="40" fill="#c0c0c0" stroke="#e8f0e8" stroke-width="0.8" />
<polyline points="228.5,378.5 229.5,375.96 230.5,373.46 231.5,371.05 232.5,368.78 233.5,366.68 234.5,364.8 235.5,363.16 236.5,361.8 237.5,360.73 238.5,359.99 239.5,359.58 240.5,359.52 241.5,359.79 242.5,360.4 243.5,361.33 244.5,362.58 245.5,364.11 246.5,365.9 247.5,367.92 248.5,370.13 249.5,372.48 250.5,374.95 251.5,377.48 252.5,380.03 253.5,382.55 254.5,385.0 255.5,387.33 256.5,389.5 257.5,391.48 258.5,393.22 259.5,394.69 260.5,395.88 261.5,396.75 262.5,397.29 263.5,397.5 264.5,397.36 265.5,396.89 266.5,396.08 267.5,394.95 268.5,393.53 269.5,391.84 270.5,389.91 271.5,387.78 272.5,385.48 273.5,383.05 274.5,380.54 275.5,377.99" stroke="#2a2a2a" stroke-width="1.0" fill="none" stroke-linejoin="miter" />
<polyline points="228.5,378.5 229.5,376.96 230.5,375.45 231.5,373.99 232.5,372.62 233.5,371.35 234.5,370.21 235.5,369.21 236.5,368.39 237.5,367.75 238.5,367.3 239.5,367.05 240.5,367.01 241.5,367.17 242.5,367.54 243.5,368.11 244.5,368.86 245.5,369.79 246.5,370.87 247.5,372.09 248.5,373.43 249.5,374.86 250.5,376.35 251.5,377.88 252.5,379.43 253.5,380.95 254.5,382.43 255.5,383.84 256.5,385.16 257.5,386.35 258.5,387.41 259.5,388.3 260.5,389.02 261.5,389.55 262.5,389.87 263.5,390.0 264.5,389.92 265.5,389.63 266.5,389.14 267.5,388.46 268.5,387.6 269.5,386.58 270.5,385.41 271.5,384.12 272.5,382.72 273.5,381.25 274.5,379.73 275.5,378.19" stroke="#2a2a2a" stroke-width="1.0" fill="none" stroke-linejoin="miter" />
<text x="288.8" y="381.5" font-family="Liberation Sans" font-size="7" font-weight="normal" fill="#222" text-anchor="start" >Ext Trig</text>
<polyline points="321.6,388.6 303.8,388.6 303.8,396 321.6,396" stroke="#1c1c1c" stroke-width="1.5" fill="none" stroke-linejoin="miter" />
<text x="226.5" y="409.7" font-family="Liberation Sans" font-size="7" font-weight="normal" fill="#222" text-anchor="start" >A</text>
<text x="260" y="409.7" font-family="Liberation Sans" font-size="7" font-weight="normal" fill="#222" text-anchor="start" >B</text>
<line x1="229.2" y1="413.8" x2="229.2" y2="438.1" stroke="#1c1c1c" stroke-width="1.5" />
<line x1="262.8" y1="413.8" x2="262.8" y2="438.1" stroke="#1c1c1c" stroke-width="1.5" />
<polyline points="229.2,413.8 239,413.8 239,445.7" stroke="#1c1c1c" stroke-width="1.5" fill="none" stroke-linejoin="miter" />
<polyline points="262.8,413.8 271.8,413.8 271.8,445.7" stroke="#1c1c1c" stroke-width="1.5" fill="none" stroke-linejoin="miter" />
<line x1="239" y1="445.7" x2="271.8" y2="445.7" stroke="#983232" stroke-width="1.7" />
<line x1="239" y1="445.7" x2="239" y2="453" stroke="#1c1c1c" stroke-width="1.5" />
<line x1="231" y1="453.4" x2="247" y2="453.4" stroke="#1c1c1c" stroke-width="1.5" />
<line x1="234" y1="457" x2="244" y2="457" stroke="#1c1c1c" stroke-width="1.5" />
<line x1="236.8" y1="460.6" x2="241.2" y2="460.6" stroke="#1c1c1c" stroke-width="1.5" />
<text x="473.5" y="401.4" font-family="Liberation Mono" font-size="11" font-weight="bold" fill="#1a1a1a" text-anchor="start" textLength="27.4" lengthAdjust="spacingAndGlyphs" stroke="#1a1a1a" stroke-width="0.35">XDA1</text>
<rect x="462.6" y="405.5" width="49" height="24.2" fill="#c6dfc6" stroke="#3a4a3a" stroke-width="1" />
<rect x="469" y="409.3" width="36.8" height="8.5" fill="#c4c4c4" stroke="none" stroke-width="1" />
<text x="487.4" y="416" font-family="Liberation Sans" font-size="6.5" font-weight="normal" fill="#333" text-anchor="middle" >THD</text>
<rect x="468.8" y="421.5" width="5" height="5" fill="#a8b8a8" stroke="#333" stroke-width="0.8" />
<rect x="476.8" y="421.5" width="5" height="5" fill="#a8b8a8" stroke="#333" stroke-width="0.8" />
<rect x="484.8" y="421.5" width="5" height="5" fill="#a8b8a8" stroke="#333" stroke-width="0.8" />
<line x1="504" y1="426" x2="504" y2="438.1" stroke="#1c1c1c" stroke-width="1.5" />
<circle cx="229.6" cy="414" r="2.8" fill="#b4ccb4" stroke="#3a3a3a" stroke-width="1"/>
<circle cx="229.6" cy="414" r="1.2" fill="#111" stroke="none" stroke-width="1"/>
<circle cx="263" cy="414" r="2.8" fill="#b4ccb4" stroke="#3a3a3a" stroke-width="1"/>
<circle cx="263" cy="414" r="1.2" fill="#111" stroke="none" stroke-width="1"/>
<circle cx="304.2" cy="388.6" r="2.8" fill="#b4ccb4" stroke="#3a3a3a" stroke-width="1"/>
<circle cx="304.2" cy="388.6" r="1.2" fill="#111" stroke="none" stroke-width="1"/>
<circle cx="504" cy="424.6" r="2.8" fill="#b4ccb4" stroke="#3a3a3a" stroke-width="1"/>
<circle cx="504" cy="424.6" r="1.2" fill="#111" stroke="none" stroke-width="1"/>
<rect x="634" y="6" width="357.3" height="274.5" fill="#f0f0f0" stroke="#9a9a9a" stroke-width="1" />
<rect x="988.8" y="27" width="2.2" height="253" fill="#d4d4d4" stroke="none" stroke-width="1" />
<rect x="634.5" y="27" width="2.2" height="253" fill="#d8d8d8" stroke="none" stroke-width="1" />
<rect x="634.5" y="6.5" width="356.3" height="20" fill="#ffffff" stroke="none" stroke-width="1" />
<polygon points="640,16.2 645.5,12.7 650,15.2 644.5,18.7" fill="#4a5a8a" stroke="none" stroke-width="1" />
<text x="652.7" y="19.3" font-family="Liberation Sans" font-size="8.6" font-weight="normal" fill="#111" text-anchor="start" textLength="67" lengthAdjust="spacingAndGlyphs" >Осциллограф-XSC1</text>
<line x1="978.0" y1="12.1" x2="985.2" y2="19.3" stroke="#333" stroke-width="1" />
<line x1="978.0" y1="19.3" x2="985.2" y2="12.1" stroke="#333" stroke-width="1" />
<rect x="636.8" y="27.2" width="351.9" height="150.6" fill="#000" stroke="none" stroke-width="1" />
<line x1="676.3" y1="32.8" x2="676.3" y2="173.6" stroke="#c8c8c8" stroke-width="1" stroke-dasharray="2,1.9"/>
<line x1="710.5" y1="32.8" x2="710.5" y2="173.6" stroke="#c8c8c8" stroke-width="1" stroke-dasharray="2,1.9"/>
<line x1="744.7" y1="32.8" x2="744.7" y2="173.6" stroke="#c8c8c8" stroke-width="1" stroke-dasharray="2,1.9"/>
<line x1="778.9" y1="32.8" x2="778.9" y2="173.6" stroke="#c8c8c8" stroke-width="1" stroke-dasharray="2,1.9"/>
<line x1="813.1" y1="32.8" x2="813.1" y2="173.6" stroke="#c8c8c8" stroke-width="1" stroke-dasharray="2,1.9"/>
<line x1="847.3" y1="32.8" x2="847.3" y2="173.6" stroke="#c8c8c8" stroke-width="1" stroke-dasharray="2,1.9"/>
<line x1="881.5" y1="32.8" x2="881.5" y2="173.6" stroke="#c8c8c8" stroke-width="1" stroke-dasharray="2,1.9"/>
<line x1="915.7" y1="32.8" x2="915.7" y2="173.6" stroke="#c8c8c8" stroke-width="1" stroke-dasharray="2,1.9"/>
<line x1="949.9" y1="32.8" x2="949.9" y2="173.6" stroke="#c8c8c8" stroke-width="1" stroke-dasharray="2,1.9"/>
<line x1="642.1" y1="56.266666666666666" x2="984.1" y2="56.266666666666666" stroke="#c8c8c8" stroke-width="1" stroke-dasharray="2,1.9"/>
<line x1="642.1" y1="79.73333333333333" x2="984.1" y2="79.73333333333333" stroke="#c8c8c8" stroke-width="1" stroke-dasharray="2,1.9"/>
<line x1="642.1" y1="103.2" x2="984.1" y2="103.2" stroke="#f0f0f0" stroke-width="1.6" stroke-dasharray="3,1.2"/>
<line x1="642.1" y1="126.66666666666667" x2="984.1" y2="126.66666666666667" stroke="#c8c8c8" stroke-width="1" stroke-dasharray="2,1.9"/>
<line x1="642.1" y1="150.13333333333333" x2="984.1" y2="150.13333333333333" stroke="#c8c8c8" stroke-width="1" stroke-dasharray="2,1.9"/>
<rect x="642.1" y="32.8" width="342.0" height="140.8" fill="none" stroke="#a0a0a0" stroke-width="1.3" />
<polyline points="642.1,114.5 643.1,111.9 644.1,109.2 645.1,106.4 646.1,103.7 647.1,100.9 648.1,98.1 649.1,95.4 650.1,92.7 651.1,90.1 652.1,87.7 653.1,85.3 654.1,83.1 655.1,81.1 656.1,79.3 657.1,77.6 658.1,76.2 659.1,75.0 660.1,74.0 661.1,73.3 662.1,72.8 663.1,72.6 664.1,72.6 665.1,72.9 666.1,73.5 667.1,74.3 668.1,75.3 669.1,76.5 670.1,78.0 671.1,79.7 672.1,81.6 673.1,83.7 674.1,85.9 675.1,88.3 676.1,90.8 677.1,93.4 678.1,96.1 679.1,98.8 680.1,101.6 681.1,104.4 682.1,107.1 683.1,109.9 684.1,112.6 685.1,115.2 686.1,117.7 687.1,120.1 688.1,122.3 689.1,124.4 690.1,126.3 691.1,128.0 692.1,129.5 693.1,130.8 694.1,131.8 695.1,132.7 696.1,133.2 697.1,133.5 698.1,133.6 699.1,133.4 700.1,132.9 701.1,132.2 702.1,131.3 703.1,130.1 704.1,128.7 705.1,127.1 706.1,125.3 707.1,123.3 708.1,121.1 709.1,118.8 710.1,116.3 711.1,113.7 712.1,111.1 713.1,108.4 714.1,105.6 715.1,102.8 716.1,100.0 717.1,97.3 718.1,94.6 719.1,91.9 720.1,89.4 721.1,87.0 722.1,84.7 723.1,82.5 724.1,80.5 725.1,78.8 726.1,77.2 727.1,75.8 728.1,74.7 729.1,73.8 730.1,73.1 731.1,72.7 732.1,72.6 733.1,72.7 734.1,73.1 735.1,73.7 736.1,74.5 737.1,75.6 738.1,77.0 739.1,78.5 740.1,80.3 741.1,82.2 742.1,84.3 743.1,86.6 744.1,89.0 745.1,91.5 746.1,94.2 747.1,96.9 748.1,99.6 749.1,102.4 750.1,105.2 751.1,108.0 752.1,110.7 753.1,113.4 754.1,115.9 755.1,118.4 756.1,120.8 757.1,123.0 758.1,125.0 759.1,126.8 760.1,128.5 761.1,129.9 762.1,131.1 763.1,132.1 764.1,132.9 765.1,133.3 766.1,133.6 767.1,133.6 768.1,133.3 769.1,132.8 770.1,132.0 771.1,131.0 772.1,129.7 773.1,128.2 774.1,126.6 775.1,124.7 776.1,122.6 777.1,120.4 778.1,118.0 779.1,115.6 780.1,113.0 781.1,110.3 782.1,107.5 783.1,104.8 784.1,102.0 785.1,99.2 786.1,96.5 787.1,93.8 788.1,91.2 789.1,88.6 790.1,86.2 791.1,84.0 792.1,81.9 793.1,80.0 794.1,78.3 795.1,76.8 796.1,75.5 797.1,74.4 798.1,73.6 799.1,73.0 800.1,72.7 801.1,72.6 802.1,72.8 803.1,73.2 804.1,73.9 805.1,74.8 806.1,76.0 807.1,77.4 808.1,79.0 809.1,80.8 810.1,82.8 811.1,85.0 812.1,87.3 813.1,89.8 814.1,92.3 815.1,95.0 816.1,97.7 817.1,100.5 818.1,103.2 819.1,106.0 820.1,108.8 821.1,111.5 822.1,114.1 823.1,116.7 824.1,119.1 825.1,121.4 826.1,123.6 827.1,125.6 828.1,127.4 829.1,128.9 830.1,130.3 831.1,131.5 832.1,132.4 833.1,133.0 834.1,133.4 835.1,133.6 836.1,133.5 837.1,133.2 838.1,132.6 839.1,131.7 840.1,130.6 841.1,129.3 842.1,127.8 843.1,126.0 844.1,124.1 845.1,122.0 846.1,119.7 847.1,117.3 848.1,114.8 849.1,112.2 850.1,109.5 851.1,106.7 852.1,103.9 853.1,101.1 854.1,98.4 855.1,95.6 856.1,93.0 857.1,90.4 858.1,87.9 859.1,85.6 860.1,83.4 861.1,81.3 862.1,79.5 863.1,77.8 864.1,76.3 865.1,75.1 866.1,74.1 867.1,73.4 868.1,72.9 869.1,72.6 870.1,72.6 871.1,72.9 872.1,73.4 873.1,74.2 874.1,75.2 875.1,76.4 876.1,77.9 877.1,79.5 878.1,81.4 879.1,83.5 880.1,85.7 881.1,88.0 882.1,90.5 883.1,93.1 884.1,95.8 885.1,98.5 886.1,101.3 887.1,104.1 888.1,106.9 889.1,109.6 890.1,112.3 891.1,114.9 892.1,117.4 893.1,119.8 894.1,122.1 895.1,124.2 896.1,126.1 897.1,127.8 898.1,129.4 899.1,130.7 900.1,131.8 901.1,132.6 902.1,133.2 903.1,133.5 904.1,133.6 905.1,133.4 906.1,133.0 907.1,132.3 908.1,131.4 909.1,130.2 910.1,128.9 911.1,127.3 912.1,125.5 913.1,123.5 914.1,121.3 915.1,119.0 916.1,116.6 917.1,114.0 918.1,111.4 919.1,108.6 920.1,105.9 921.1,103.1 922.1,100.3 923.1,97.6 924.1,94.8 925.1,92.2 926.1,89.6 927.1,87.2 928.1,84.9 929.1,82.7 930.1,80.7 931.1,78.9 932.1,77.3 933.1,76.0 934.1,74.8 935.1,73.9 936.1,73.2 937.1,72.8 938.1,72.6 939.1,72.7 940.1,73.0 941.1,73.6 942.1,74.4 943.1,75.5 944.1,76.8 945.1,78.4 946.1,80.1 947.1,82.0 948.1,84.1 949.1,86.4 950.1,88.8 951.1,91.3 952.1,93.9 953.1,96.6 954.1,99.3 955.1,102.1 956.1,104.9 957.1,107.7 958.1,110.4 959.1,113.1 960.1,115.7 961.1,118.2 962.1,120.5 963.1,122.7 964.1,124.8 965.1,126.7 966.1,128.3 967.1,129.8 968.1,131.0 969.1,132.0 970.1,132.8 971.1,133.3 972.1,133.6 973.1,133.6 974.1,133.3 975.1,132.8 976.1,132.1 977.1,131.1 978.1,129.9 979.1,128.4 980.1,126.7 981.1,124.9 982.1,122.8 983.1,120.6 984.1,118.3" stroke="#94303a" stroke-width="1.1" fill="none" stroke-linejoin="miter" />
<polyline points="642.1,90.0 643.1,93.0 644.1,96.1 645.1,99.3 646.1,102.5 647.1,105.7 648.1,108.8 649.1,112.0 650.1,115.0 651.1,118.0 652.1,120.8 653.1,123.5 654.1,126.0 655.1,128.3 656.1,130.4 657.1,132.3 658.1,134.0 659.1,135.3 660.1,136.4 661.1,137.3 662.1,137.8 663.1,138.1 664.1,138.0 665.1,137.7 666.1,137.1 667.1,136.2 668.1,135.0 669.1,133.6 670.1,131.9 671.1,129.9 672.1,127.8 673.1,125.4 674.1,122.8 675.1,120.1 676.1,117.2 677.1,114.3 678.1,111.2 679.1,108.0 680.1,104.9 681.1,101.7 682.1,98.5 683.1,95.3 684.1,92.2 685.1,89.2 686.1,86.4 687.1,83.6 688.1,81.1 689.1,78.7 690.1,76.5 691.1,74.5 692.1,72.8 693.1,71.3 694.1,70.1 695.1,69.2 696.1,68.5 697.1,68.2 698.1,68.1 699.1,68.3 700.1,68.9 701.1,69.7 702.1,70.7 703.1,72.1 704.1,73.7 705.1,75.6 706.1,77.7 707.1,80.0 708.1,82.4 709.1,85.1 710.1,87.9 711.1,90.9 712.1,93.9 713.1,97.0 714.1,100.2 715.1,103.4 716.1,106.6 717.1,109.8 718.1,112.9 719.1,115.9 720.1,118.8 721.1,121.6 722.1,124.3 723.1,126.7 724.1,129.0 725.1,131.0 726.1,132.8 727.1,134.4 728.1,135.7 729.1,136.7 730.1,137.5 731.1,137.9 732.1,138.1 733.1,138.0 734.1,137.6 735.1,136.9 736.1,135.9 737.1,134.6 738.1,133.1 739.1,131.3 740.1,129.3 741.1,127.1 742.1,124.6 743.1,122.0 744.1,119.3 745.1,116.4 746.1,113.4 747.1,110.3 748.1,107.1 749.1,103.9 750.1,100.7 751.1,97.5 752.1,94.4 753.1,91.3 754.1,88.4 755.1,85.5 756.1,82.8 757.1,80.3 758.1,78.0 759.1,75.9 760.1,74.0 761.1,72.3 762.1,70.9 763.1,69.8 764.1,69.0 765.1,68.4 766.1,68.1 767.1,68.1 768.1,68.5 769.1,69.1 770.1,70.0 771.1,71.1 772.1,72.6 773.1,74.2 774.1,76.2 775.1,78.3 776.1,80.7 777.1,83.2 778.1,85.9 779.1,88.8 780.1,91.8 781.1,94.9 782.1,98.0 783.1,101.2 784.1,104.4 785.1,107.6 786.1,110.7 787.1,113.8 788.1,116.8 789.1,119.7 790.1,122.4 791.1,125.0 792.1,127.4 793.1,129.6 794.1,131.6 795.1,133.3 796.1,134.8 797.1,136.0 798.1,137.0 799.1,137.6 800.1,138.0 801.1,138.1 802.1,137.9 803.1,137.4 804.1,136.6 805.1,135.5 806.1,134.2 807.1,132.6 808.1,130.7 809.1,128.7 810.1,126.4 811.1,123.9 812.1,121.2 813.1,118.4 814.1,115.5 815.1,112.4 816.1,109.3 817.1,106.1 818.1,102.9 819.1,99.7 820.1,96.6 821.1,93.5 822.1,90.4 823.1,87.5 824.1,84.7 825.1,82.1 826.1,79.6 827.1,77.3 828.1,75.3 829.1,73.4 830.1,71.9 831.1,70.6 832.1,69.5 833.1,68.8 834.1,68.3 835.1,68.1 836.1,68.2 837.1,68.6 838.1,69.3 839.1,70.3 840.1,71.5 841.1,73.0 842.1,74.8 843.1,76.8 844.1,79.0 845.1,81.4 846.1,84.0 847.1,86.8 848.1,89.7 849.1,92.7 850.1,95.8 851.1,98.9 852.1,102.1 853.1,105.3 854.1,108.5 855.1,111.7 856.1,114.7 857.1,117.7 858.1,120.5 859.1,123.2 860.1,125.8 861.1,128.1 862.1,130.2 863.1,132.1 864.1,133.8 865.1,135.2 866.1,136.3 867.1,137.2 868.1,137.8 869.1,138.1 870.1,138.1 871.1,137.8 872.1,137.2 873.1,136.3 874.1,135.1 875.1,133.7 876.1,132.1 877.1,130.1 878.1,128.0 879.1,125.6 880.1,123.1 881.1,120.4 882.1,117.5 883.1,114.6 884.1,111.5 885.1,108.4 886.1,105.2 887.1,102.0 888.1,98.8 889.1,95.6 890.1,92.5 891.1,89.5 892.1,86.6 893.1,83.9 894.1,81.3 895.1,78.9 896.1,76.7 897.1,74.7 898.1,73.0 899.1,71.5 900.1,70.2 901.1,69.3 902.1,68.6 903.1,68.2 904.1,68.1 905.1,68.3 906.1,68.8 907.1,69.6 908.1,70.6 909.1,71.9 910.1,73.5 911.1,75.4 912.1,77.4 913.1,79.7 914.1,82.2 915.1,84.8 916.1,87.6 917.1,90.6 918.1,93.6 919.1,96.7 920.1,99.9 921.1,103.1 922.1,106.3 923.1,109.5 924.1,112.6 925.1,115.6 926.1,118.6 927.1,121.4 928.1,124.0 929.1,126.5 930.1,128.8 931.1,130.8 932.1,132.7 933.1,134.3 934.1,135.6 935.1,136.6 936.1,137.4 937.1,137.9 938.1,138.1 939.1,138.0 940.1,137.6 941.1,136.9 942.1,136.0 943.1,134.7 944.1,133.2 945.1,131.5 946.1,129.5 947.1,127.3 948.1,124.9 949.1,122.3 950.1,119.6 951.1,116.7 952.1,113.7 953.1,110.6 954.1,107.4 955.1,104.2 956.1,101.0 957.1,97.8 958.1,94.7 959.1,91.6 960.1,88.7 961.1,85.8 962.1,83.1 963.1,80.6 964.1,78.2 965.1,76.1 966.1,74.1 967.1,72.5 968.1,71.1 969.1,69.9 970.1,69.0 971.1,68.4 972.1,68.1 973.1,68.1 974.1,68.4 975.1,69.0 976.1,69.9 977.1,71.0 978.1,72.4 979.1,74.1 980.1,76.0 981.1,78.1 982.1,80.4 983.1,83.0 984.1,85.7" stroke="#94303a" stroke-width="1.1" fill="none" stroke-linejoin="miter" />
<line x1="697.6" y1="28" x2="697.6" y2="173.6" stroke="#55a0b0" stroke-width="1.2" />
<polygon points="693.8,27.5 701.2,27.5 697.5,32.5" fill="#5fb8c8" stroke="none" stroke-width="1" />
<line x1="985.2" y1="28" x2="985.2" y2="177.5" stroke="#1a1a5a" stroke-width="2.4" />
<polygon points="980,28.5 987.6,28.5 983.8,33" fill="#d8cc40" stroke="none" stroke-width="1" />
<text x="638.6" y="186.8" font-family="Liberation Sans" font-size="10" font-weight="normal" fill="#333" text-anchor="start" >‹</text>
<rect x="645.6" y="181.2" width="10" height="6.1" fill="#cdcdcd" stroke="none" stroke-width="1" />
<text x="983.5" y="186.8" font-family="Liberation Sans" font-size="10" font-weight="normal" fill="#333" text-anchor="start" >›</text>
<line x1="634.5" y1="189.6" x2="672" y2="189.6" stroke="#c8c8c8" stroke-width="1" />
<text x="638.9" y="202.6" font-family="Liberation Sans" font-size="7" font-weight="normal" fill="#111" text-anchor="start" >T1</text>
<text x="638.9" y="211.4" font-family="Liberation Sans" font-size="7" font-weight="normal" fill="#111" text-anchor="start" >T2</text>
<text x="638.9" y="223.4" font-family="Liberation Sans" font-size="7" font-weight="normal" fill="#111" text-anchor="start" textLength="16.7" lengthAdjust="spacingAndGlyphs" >T2-T1</text>
<rect x="651" y="194.5" width="8.1" height="9.800000000000011" fill="#e4e4e4" stroke="#d0d0d0" stroke-width="0.6" />
<rect x="661" y="194.5" width="8.5" height="9.800000000000011" fill="#e4e4e4" stroke="#d0d0d0" stroke-width="0.6" />
<polygon points="652.5,199.4 655.8,196.4 655.8,198.20000000000002 658.2,198.20000000000002 658.2,200.6 655.8,200.6 655.8,202.4" fill="#000" stroke="none" stroke-width="1" />
<polygon points="668.2,199.4 664.9,196.4 664.9,198.20000000000002 662.5,198.20000000000002 662.5,200.6 664.9,200.6 664.9,202.4" fill="#000" stroke="none" stroke-width="1" />
<rect x="651" y="206" width="8.1" height="8.599999999999994" fill="#e4e4e4" stroke="#d0d0d0" stroke-width="0.6" />
<rect x="661" y="206" width="8.5" height="8.599999999999994" fill="#e4e4e4" stroke="#d0d0d0" stroke-width="0.6" />
<polygon points="652.5,210.3 655.8,207.3 655.8,209.10000000000002 658.2,209.10000000000002 658.2,211.5 655.8,211.5 655.8,213.3" fill="#000" stroke="none" stroke-width="1" />
<polygon points="668.2,210.3 664.9,207.3 664.9,209.10000000000002 662.5,209.10000000000002 662.5,211.5 664.9,211.5 664.9,213.3" fill="#000" stroke="none" stroke-width="1" />
<rect x="671.8" y="191" width="222.2" height="33.2" fill="#fff" stroke="none" stroke-width="1" />
<line x1="671.8" y1="191.5" x2="894" y2="191.5" stroke="#6a6a6a" stroke-width="1" />
<line x1="672.3" y1="191" x2="672.3" y2="224.2" stroke="#6a6a6a" stroke-width="1" />
<text x="691" y="199" font-family="Liberation Sans" font-size="6.8" font-weight="normal" fill="#3a3a3a" text-anchor="middle" >Время</text>
<text x="676.4" y="206.8" font-family="Liberation Sans" font-size="6.8" font-weight="normal" fill="#3a3a3a" text-anchor="start" textLength="34.6" lengthAdjust="spacingAndGlyphs" >537.749 ms</text>
<text x="676.4" y="214.8" font-family="Liberation Sans" font-size="6.8" font-weight="normal" fill="#3a3a3a" text-anchor="start" textLength="34.6" lengthAdjust="spacingAndGlyphs" >541.932 ms</text>
<text x="680.4" y="222.3" font-family="Liberation Sans" font-size="6.8" font-weight="normal" fill="#3a3a3a" text-anchor="start" textLength="26.6" lengthAdjust="spacingAndGlyphs" >4.183 ms</text>
<text x="740.5" y="199" font-family="Liberation Sans" font-size="6.8" font-weight="normal" fill="#3a3a3a" text-anchor="middle" >Канал_A</text>
<text x="754.5" y="206.8" font-family="Liberation Sans" font-size="6.8" font-weight="normal" fill="#3a3a3a" text-anchor="end" >-1.300 V</text>
<text x="760" y="214.8" font-family="Liberation Sans" font-size="6.8" font-weight="normal" fill="#3a3a3a" text-anchor="end" >-539.617 mV</text>
<text x="760" y="222.3" font-family="Liberation Sans" font-size="6.8" font-weight="normal" fill="#3a3a3a" text-anchor="end" >759.957 mV</text>
<text x="790" y="199" font-family="Liberation Sans" font-size="6.8" font-weight="normal" fill="#3a3a3a" text-anchor="middle" >Канал_B</text>
<text x="805" y="206.8" font-family="Liberation Sans" font-size="6.8" font-weight="normal" fill="#3a3a3a" text-anchor="end" >74.076 V</text>
<text x="805" y="214.8" font-family="Liberation Sans" font-size="6.8" font-weight="normal" fill="#3a3a3a" text-anchor="end" >32.851 V</text>
<text x="805" y="222.3" font-family="Liberation Sans" font-size="6.8" font-weight="normal" fill="#3a3a3a" text-anchor="end" >-41.225 V</text>
<rect x="899.7" y="196.2" width="36.09999999999991" height="10.700000000000017" fill="#e1e1e1" stroke="#cacaca" stroke-width="1" />
<text x="917.75" y="204.07000000000002" font-family="Liberation Sans" font-size="7" font-weight="normal" fill="#2a2a2a" text-anchor="middle" >Экран</text>
<rect x="899.7" y="213.1" width="36.09999999999991" height="10.800000000000011" fill="#e1e1e1" stroke="#cacaca" stroke-width="1" />
<text x="917.75" y="221.02" font-family="Liberation Sans" font-size="7" font-weight="normal" fill="#2a2a2a" text-anchor="middle" >Сохранить</text>
<text x="941.7" y="227.3" font-family="Liberation Sans" font-size="7" font-weight="normal" fill="#3a3a3a" text-anchor="start" textLength="27" lengthAdjust="spacingAndGlyphs" >Внешняя</text>
<circle cx="976.3" cy="224.8" r="4" fill="#f4f4f4" stroke="#b8b8b8" stroke-width="0.8"/>
<line x1="634.5" y1="226.4" x2="672" y2="226.4" stroke="#d8d8d8" stroke-width="1" />
<line x1="718" y1="235.3" x2="718" y2="280" stroke="#dcdcdc" stroke-width="1" />
<line x1="798.3" y1="235.3" x2="798.3" y2="280" stroke="#dcdcdc" stroke-width="1" />
<line x1="880.6" y1="235.3" x2="880.6" y2="280" stroke="#dcdcdc" stroke-width="1" />
<line x1="676" y1="235.3" x2="716" y2="235.3" stroke="#dcdcdc" stroke-width="1" />
<line x1="751" y1="235.3" x2="796" y2="235.3" stroke="#dcdcdc" stroke-width="1" />
<line x1="832" y1="235.3" x2="878" y2="235.3" stroke="#dcdcdc" stroke-width="1" />
<line x1="936" y1="235.3" x2="987" y2="235.3" stroke="#dcdcdc" stroke-width="1" />
<text x="640" y="238.2" font-family="Liberation Sans" font-size="7" font-weight="normal" fill="#3a3a3a" text-anchor="start" textLength="32.8" lengthAdjust="spacingAndGlyphs" >Развертка</text>
<text x="640" y="249.4" font-family="Liberation Sans" font-size="7" font-weight="normal" fill="#3a3a3a" text-anchor="start" textLength="20" lengthAdjust="spacingAndGlyphs" >Шкала</text>
<rect x="663.9" y="240.1" width="50.60000000000002" height="10.800000000000011" fill="#fff" stroke="#adadad" stroke-width="1" />
<text x="666.4" y="248.02" font-family="Liberation Sans" font-size="7" font-weight="normal" fill="#2a2a2a" text-anchor="start" >500 us/Div</text>
<text x="640" y="261.6" font-family="Liberation Sans" font-size="7" font-weight="normal" fill="#3a3a3a" text-anchor="start" textLength="35.1" lengthAdjust="spacingAndGlyphs" >задержка X</text>
<rect x="678.5" y="253.1" width="35.60000000000002" height="10.700000000000017" fill="#fff" stroke="#adadad" stroke-width="1" />
<text x="681" y="260.96999999999997" font-family="Liberation Sans" font-size="7" font-weight="normal" fill="#2a2a2a" text-anchor="start" >0</text>
<rect x="640.5" y="267.7" width="14.399999999999977" height="9.300000000000011" fill="#cce4f7" stroke="#4a8cc4" stroke-width="1" />
<text x="647.7" y="274.87" font-family="Liberation Sans" font-size="7" font-weight="normal" fill="#2a2a2a" text-anchor="middle" >Y/T</text>
<rect x="657.0" y="267.7" width="16.0" height="9.300000000000011" fill="#e1e1e1" stroke="#cacaca" stroke-width="1" />
<text x="665.0" y="274.87" font-family="Liberation Sans" font-size="7" font-weight="normal" fill="#2a2a2a" text-anchor="middle" >Add</text>
<rect x="676.3" y="267.7" width="15.5" height="9.300000000000011" fill="#e1e1e1" stroke="#cacaca" stroke-width="1" />
<text x="684.05" y="274.87" font-family="Liberation Sans" font-size="7" font-weight="normal" fill="#2a2a2a" text-anchor="middle" >B/A</text>
<rect x="695.1" y="267.7" width="15.399999999999977" height="9.300000000000011" fill="#e1e1e1" stroke="#cacaca" stroke-width="1" />
<text x="702.8" y="274.87" font-family="Liberation Sans" font-size="7" font-weight="normal" fill="#2a2a2a" text-anchor="middle" >A/B</text>
<text x="724.1" y="238.4" font-family="Liberation Sans" font-size="7" font-weight="normal" fill="#3a3a3a" text-anchor="start" textLength="24.9" lengthAdjust="spacingAndGlyphs" >Канал A</text>
<text x="719.8" y="249.6" font-family="Liberation Sans" font-size="7" font-weight="normal" fill="#3a3a3a" text-anchor="start" textLength="20.8" lengthAdjust="spacingAndGlyphs" >Шкала</text>
<rect x="744.9" y="239.9" width="51.30000000000007" height="10.799999999999983" fill="#fff" stroke="#adadad" stroke-width="1" />
<text x="747.4" y="247.82000000000002" font-family="Liberation Sans" font-size="7" font-weight="normal" fill="#2a2a2a" text-anchor="start" >1  V/Div</text>
<text x="719.8" y="261.6" font-family="Liberation Sans" font-size="7" font-weight="normal" fill="#3a3a3a" text-anchor="start" textLength="36.3" lengthAdjust="spacingAndGlyphs" >смещение Y</text>
<rect x="760.9" y="253.5" width="35.30000000000007" height="10.399999999999977" fill="#fff" stroke="#adadad" stroke-width="1" />
<text x="763.4" y="261.21999999999997" font-family="Liberation Sans" font-size="7" font-weight="normal" fill="#2a2a2a" text-anchor="start" >0</text>
<rect x="721.9" y="267.4" width="13.399999999999977" height="9.600000000000023" fill="#cce4f7" stroke="#4a8cc4" stroke-width="1" />
<text x="728.5999999999999" y="274.71999999999997" font-family="Liberation Sans" font-size="7" font-weight="normal" fill="#2a2a2a" text-anchor="middle" >AC</text>
<rect x="736.9" y="267.4" width="15.0" height="9.600000000000023" fill="#e1e1e1" stroke="#cacaca" stroke-width="1" />
<text x="744.4" y="274.71999999999997" font-family="Liberation Sans" font-size="7" font-weight="normal" fill="#2a2a2a" text-anchor="middle" >0</text>
<rect x="754.5" y="267.4" width="14.5" height="9.600000000000023" fill="#e1e1e1" stroke="#cacaca" stroke-width="1" />
<text x="761.75" y="274.71999999999997" font-family="Liberation Sans" font-size="7" font-weight="normal" fill="#2a2a2a" text-anchor="middle" >DC</text>
<circle cx="789.8" cy="271.1" r="3" fill="#f4f4f4" stroke="#b8b8b8" stroke-width="0.8"/>
<text x="804.2" y="238.4" font-family="Liberation Sans" font-size="7" font-weight="normal" fill="#3a3a3a" text-anchor="start" textLength="25.2" lengthAdjust="spacingAndGlyphs" >Канал B</text>
<text x="800" y="249.6" font-family="Liberation Sans" font-size="7" font-weight="normal" fill="#3a3a3a" text-anchor="start" textLength="20.8" lengthAdjust="spacingAndGlyphs" >Шкала</text>
<rect x="825.9" y="239.9" width="51.200000000000045" height="10.799999999999983" fill="#fff" stroke="#adadad" stroke-width="1" />
<text x="828.4" y="247.82000000000002" font-family="Liberation Sans" font-size="7" font-weight="normal" fill="#2a2a2a" text-anchor="start" >50  V/Div</text>
<text x="802" y="261.6" font-family="Liberation Sans" font-size="7" font-weight="normal" fill="#3a3a3a" text-anchor="start" textLength="35.8" lengthAdjust="spacingAndGlyphs" >смещение Y</text>
<rect x="841.5" y="253.5" width="35.60000000000002" height="10.399999999999977" fill="#fff" stroke="#adadad" stroke-width="1" />
<text x="844" y="261.21999999999997" font-family="Liberation Sans" font-size="7" font-weight="normal" fill="#2a2a2a" text-anchor="start" >0</text>
<rect x="802.5" y="267.4" width="14" height="9.600000000000023" fill="#cce4f7" stroke="#4a8cc4" stroke-width="1" />
<text x="809.5" y="274.71999999999997" font-family="Liberation Sans" font-size="7" font-weight="normal" fill="#2a2a2a" text-anchor="middle" >AC</text>
<rect x="819.3" y="267.4" width="11.200000000000045" height="9.600000000000023" fill="#e1e1e1" stroke="#cacaca" stroke-width="1" />
<text x="824.9" y="274.71999999999997" font-family="Liberation Sans" font-size="7" font-weight="normal" fill="#2a2a2a" text-anchor="middle" >0</text>
<rect x="833.9" y="267.4" width="13.100000000000023" height="9.600000000000023" fill="#e1e1e1" stroke="#cacaca" stroke-width="1" />
<text x="840.45" y="274.71999999999997" font-family="Liberation Sans" font-size="7" font-weight="normal" fill="#2a2a2a" text-anchor="middle" >DC</text>
<rect x="850.3" y="267.4" width="8.400000000000091" height="9.600000000000023" fill="#e1e1e1" stroke="#cacaca" stroke-width="1" />
<text x="854.5" y="274.71999999999997" font-family="Liberation Sans" font-size="7" font-weight="normal" fill="#2a2a2a" text-anchor="middle" >-</text>
<circle cx="873.3" cy="271.4" r="3" fill="#f4f4f4" stroke="#b8b8b8" stroke-width="0.8"/>
<text x="885.8" y="238.4" font-family="Liberation Sans" font-size="7" font-weight="normal" fill="#3a3a3a" text-anchor="start" textLength="47.7" lengthAdjust="spacingAndGlyphs" >Синхронизация</text>
<text x="882.3" y="249.4" font-family="Liberation Sans" font-size="7" font-weight="normal" fill="#3a3a3a" text-anchor="start" textLength="21.1" lengthAdjust="spacingAndGlyphs" >Запуск</text>
<rect x="918.5" y="243.0" width="9" height="9.099999999999994" fill="#cce4f7" stroke="#4a8cc4" stroke-width="1" />
<path d="M920.5 250 h2 l2 -5 h2" stroke="#222" stroke-width="0.9" fill="none"/>
<rect x="929.5" y="243.0" width="9" height="9.099999999999994" fill="#e1e1e1" stroke="#cacaca" stroke-width="1" />
<path d="M931.5 245 h2 l2 5 h2" stroke="#222" stroke-width="0.9" fill="none"/>
<rect x="942.7" y="243.0" width="9.599999999999909" height="9.099999999999994" fill="#cce4f7" stroke="#4a8cc4" stroke-width="1" />
<text x="947.5" y="250.07000000000002" font-family="Liberation Sans" font-size="7" font-weight="normal" fill="#2a2a2a" text-anchor="middle" >A</text>
<rect x="954.5" y="243.0" width="9.5" height="9.099999999999994" fill="#e1e1e1" stroke="#cacaca" stroke-width="1" />
<text x="959.25" y="250.07000000000002" font-family="Liberation Sans" font-size="7" font-weight="normal" fill="#2a2a2a" text-anchor="middle" >B</text>
<rect x="966.9" y="243.0" width="19.399999999999977" height="9.099999999999994" fill="#e1e1e1" stroke="#cacaca" stroke-width="1" />
<text x="976.5999999999999" y="250.07000000000002" font-family="Liberation Sans" font-size="7" font-weight="normal" fill="#2a2a2a" text-anchor="middle" >Внеш</text>
<text x="882.3" y="261.2" font-family="Liberation Sans" font-size="7" font-weight="normal" fill="#3a3a3a" text-anchor="start" textLength="26.3" lengthAdjust="spacingAndGlyphs" >Уровень</text>
<rect x="918.0" y="254.9" width="47.0" height="10.099999999999994" fill="#fff" stroke="#adadad" stroke-width="1" />
<text x="920.5" y="262.46999999999997" font-family="Liberation Sans" font-size="7" font-weight="normal" fill="#2a2a2a" text-anchor="start" >0</text>
<rect x="965.5" y="254.9" width="19.700000000000045" height="10.099999999999994" fill="#fff" stroke="#adadad" stroke-width="1" />
<text x="971" y="262.46999999999997" font-family="Liberation Sans" font-size="7" font-weight="normal" fill="#2a2a2a" text-anchor="start" >V</text>
<text x="882.3" y="275" font-family="Liberation Sans" font-size="7" font-weight="normal" fill="#3a3a3a" text-anchor="start" textLength="11.7" lengthAdjust="spacingAndGlyphs" >Тип</text>
<rect x="902.0" y="267.5" width="19.200000000000045" height="9.699999999999989" fill="#cce4f7" stroke="#4a8cc4" stroke-width="1" />
<text x="911.6" y="274.87" font-family="Liberation Sans" font-size="7" font-weight="normal" fill="#2a2a2a" text-anchor="middle" >Одн.</text>
<rect x="924.5" y="267.5" width="18.799999999999955" height="9.699999999999989" fill="#e1e1e1" stroke="#cacaca" stroke-width="1" />
<text x="933.9" y="274.87" font-family="Liberation Sans" font-size="7" font-weight="normal" fill="#2a2a2a" text-anchor="middle" >Норм</text>
<rect x="946.2" y="267.5" width="19.0" height="9.699999999999989" fill="#e1e1e1" stroke="#cacaca" stroke-width="1" />
<text x="955.7" y="274.87" font-family="Liberation Sans" font-size="7" font-weight="normal" fill="#2a2a2a" text-anchor="middle" >Авто</text>
<rect x="968.5" y="267.5" width="17" height="9.699999999999989" fill="#e1e1e1" stroke="#cacaca" stroke-width="1" />
<text x="977.0" y="274.87" font-family="Liberation Sans" font-size="7" font-weight="normal" fill="#2a2a2a" text-anchor="middle" >Нет</text>
<rect x="634" y="280.5" width="357.3" height="6" fill="#e9e9e9" stroke="none" stroke-width="1" />
<rect x="638.5" y="290" width="137.3" height="145.6" fill="#f0f0f0" stroke="#a8a8a8" stroke-width="1" />
<rect x="639" y="290.5" width="136.3" height="20.3" fill="#ffffff" stroke="none" stroke-width="1" />
<polygon points="643.7,301.0 648.85,297.5 653,300.0 647.85,303.5" fill="#4a5a8a" stroke="none" stroke-width="1" />
<text x="656.5" y="303.6" font-family="Liberation Sans" font-size="8" font-weight="normal" fill="#9a9a9a" text-anchor="start" textLength="97.5" lengthAdjust="spacingAndGlyphs" >Функциональный генерато...</text>
<line x1="762.6" y1="297.29999999999995" x2="769.8000000000001" y2="304.5" stroke="#999" stroke-width="1" />
<line x1="762.6" y1="304.5" x2="769.8000000000001" y2="297.29999999999995" stroke="#999" stroke-width="1" />
<text x="646.2" y="317.6" font-family="Liberation Sans" font-size="7" font-weight="normal" fill="#3a3a3a" text-anchor="start" textLength="45.3" lengthAdjust="spacingAndGlyphs" >Форма сигнала</text>
<line x1="700" y1="315.5" x2="771" y2="315.5" stroke="#dcdcdc" stroke-width="1" />
<rect x="647.5" y="321.5" width="37.60000000000002" height="8.800000000000011" fill="#cce4f7" stroke="#4a8cc4" stroke-width="1" />
<path d="M652 326.5 C658 321 664 321 666 325.5 C669 330 675 330 681 325" stroke="#222" stroke-width="0.9" fill="none"/>
<rect x="688.5" y="321.5" width="37.60000000000002" height="8.800000000000011" fill="#e1e1e1" stroke="#cacaca" stroke-width="1" />
<path d="M693 327 L699 323.5 L705 327.5 L711 323.5 L717 327.5 L722 325" stroke="#222" stroke-width="0.9" fill="none"/>
<rect x="730.0" y="321.5" width="38.0" height="8.800000000000011" fill="#e1e1e1" stroke="#cacaca" stroke-width="1" />
<path d="M735 327.5 h6 v-4 h5 v4 h5 v-4 h5 v4 h6" stroke="#222" stroke-width="0.9" fill="none"/>
<text x="646.2" y="339.8" font-family="Liberation Sans" font-size="7" font-weight="normal" fill="#3a3a3a" text-anchor="start" textLength="60.7" lengthAdjust="spacingAndGlyphs" >Параметры сигнала</text>
<line x1="713" y1="337.5" x2="771" y2="337.5" stroke="#dcdcdc" stroke-width="1" />
<text x="648" y="351.5" font-family="Liberation Sans" font-size="7" font-weight="normal" fill="#3a3a3a" text-anchor="start" textLength="25.6" lengthAdjust="spacingAndGlyphs" >Частота</text>
<rect x="698.0" y="343.5" width="44.5" height="10.399999999999977" fill="#fff" stroke="#8a8a8a" stroke-width="1" />
<text x="700.5" y="351.21999999999997" font-family="Liberation Sans" font-size="7" font-weight="normal" fill="#2a2a2a" text-anchor="start" >1</text>
<rect x="743.5" y="343.5" width="25.799999999999955" height="10.399999999999977" fill="#fff" stroke="#8a8a8a" stroke-width="1" />
<text x="745" y="351.21999999999997" font-family="Liberation Sans" font-size="7" font-weight="normal" fill="#2a2a2a" text-anchor="start" >kHz</text>
<text x="648" y="363.8" font-family="Liberation Sans" font-size="7" font-weight="normal" fill="#555" text-anchor="start" textLength="44.2" lengthAdjust="spacingAndGlyphs" >Длительность</text>
<text x="700" y="364" font-family="Liberation Sans" font-size="7" font-weight="normal" fill="#9a9a9a" text-anchor="start" >50</text>
<text x="747" y="364" font-family="Liberation Sans" font-size="7" font-weight="normal" fill="#9a9a9a" text-anchor="start" >%</text>
<text x="648" y="375.4" font-family="Liberation Sans" font-size="7" font-weight="normal" fill="#3a3a3a" text-anchor="start" textLength="34.2" lengthAdjust="spacingAndGlyphs" >Амплитуда</text>
<rect x="697.8" y="367.8" width="44.700000000000045" height="10.199999999999989" fill="#fff" stroke="#8a8a8a" stroke-width="1" />
<text x="700.3" y="375.41999999999996" font-family="Liberation Sans" font-size="7" font-weight="normal" fill="#2a2a2a" text-anchor="start" >1.3</text>
<rect x="743.5" y="367.8" width="25.399999999999977" height="10.199999999999989" fill="#fff" stroke="#8a8a8a" stroke-width="1" />
<text x="746" y="375.41999999999996" font-family="Liberation Sans" font-size="7" font-weight="normal" fill="#2a2a2a" text-anchor="start" >Vp</text>
<text x="648" y="387.8" font-family="Liberation Sans" font-size="7" font-weight="normal" fill="#3a3a3a" text-anchor="start" textLength="31.3" lengthAdjust="spacingAndGlyphs" >Смещение</text>
<rect x="697.8" y="379.7" width="44.700000000000045" height="10.199999999999989" fill="#fff" stroke="#8a8a8a" stroke-width="1" />
<text x="700.3" y="387.31999999999994" font-family="Liberation Sans" font-size="7" font-weight="normal" fill="#2a2a2a" text-anchor="start" >0</text>
<rect x="743.5" y="379.7" width="25.399999999999977" height="10.199999999999989" fill="#fff" stroke="#8a8a8a" stroke-width="1" />
<text x="746" y="387.31999999999994" font-family="Liberation Sans" font-size="7" font-weight="normal" fill="#2a2a2a" text-anchor="start" >V</text>
<rect x="666.1" y="394.7" width="78.39999999999998" height="12.100000000000023" fill="#cccccc" stroke="#bfbfbf" stroke-width="1" />
<text x="705.3" y="403.27" font-family="Liberation Sans" font-size="7" font-weight="normal" fill="#8a8a8a" text-anchor="middle" >Фронт/Спад</text>
<line x1="639" y1="409.6" x2="775.3" y2="409.6" stroke="#d4d4d4" stroke-width="1" />
<text x="652.3" y="422.5" font-family="Liberation Sans" font-size="8" font-weight="normal" fill="#3a3a3a" text-anchor="start" >+</text>
<text x="699.2" y="419.8" font-family="Liberation Sans" font-size="7.2" font-weight="normal" fill="#3a3a3a" text-anchor="middle" textLength="21.1" lengthAdjust="spacingAndGlyphs" >Общий</text>
<text x="756.5" y="423" font-family="Liberation Sans" font-size="8" font-weight="normal" fill="#3a3a3a" text-anchor="start" >−</text>
<circle cx="654.6" cy="427.3" r="2.3" fill="#eaeaea" stroke="#c4c4c4" stroke-width="0.8"/>
<circle cx="697.7" cy="427.3" r="2.3" fill="#eaeaea" stroke="#c4c4c4" stroke-width="0.8"/>
<circle cx="758.5" cy="427.3" r="4.2" fill="#fff" stroke="#c8c8c8" stroke-width="0.8"/>
<rect x="796.8" y="286.6" width="192.4" height="133.9" fill="#f0f0f0" stroke="#a8a8a8" stroke-width="1" />
<rect x="797.3" y="287.1" width="191.4" height="17.1" fill="#ffffff" stroke="none" stroke-width="1" />
<polygon points="802,296.5 807.5,293 812,295.5 806.5,299" fill="#4a5a8a" stroke="none" stroke-width="1" />
<text x="814" y="299" font-family="Liberation Sans" font-size="8" font-weight="normal" fill="#9a9a9a" text-anchor="start" textLength="145.3" lengthAdjust="spacingAndGlyphs" >Измеритель нелинейных искажений-XDA1</text>
<line x1="975.4" y1="292.2" x2="982.6" y2="299.40000000000003" stroke="#999" stroke-width="1" />
<line x1="975.4" y1="299.40000000000003" x2="982.6" y2="292.2" stroke="#999" stroke-width="1" />
<text x="892" y="312.7" font-family="Liberation Sans" font-size="7.3" font-weight="normal" fill="#3a3a3a" text-anchor="middle" textLength="114" lengthAdjust="spacingAndGlyphs" >Общие нелинейные искажения(THD)</text>
<rect x="798.7" y="317" width="187" height="17.2" fill="#000" stroke="#888" stroke-width="0.8" />
<text x="898.8" y="329" font-family="Liberation Sans" font-size="10.5" font-weight="normal" fill="#fff" text-anchor="middle" textLength="34.4" lengthAdjust="spacingAndGlyphs" >1.593 %</text>
<line x1="797.3" y1="336.5" x2="988.7" y2="336.5" stroke="#d8d8d8" stroke-width="1" />
<rect x="801.2" y="348.8" width="24.09999999999991" height="13.099999999999966" fill="#cce4f7" stroke="#4a8cc4" stroke-width="1" />
<text x="813.25" y="357.87" font-family="Liberation Sans" font-size="7" font-weight="normal" fill="#2a2a2a" text-anchor="middle" >Старт</text>
<rect x="801.2" y="368.5" width="24.09999999999991" height="13.899999999999977" fill="#e1e1e1" stroke="#cacaca" stroke-width="1" />
<text x="813.25" y="377.96999999999997" font-family="Liberation Sans" font-size="7" font-weight="normal" fill="#2a2a2a" text-anchor="middle" >Стоп</text>
<rect x="831.2" y="339.4" width="156.8" height="52.2" fill="#f5f5f5" stroke="#e0e0e0" stroke-width="0.8" />
<text x="895.2" y="354.8" font-family="Liberation Sans" font-size="7" font-weight="normal" fill="#3a3a3a" text-anchor="end" >Основная частота.</text>
<rect x="901.5" y="347.5" width="52" height="10.199999999999989" fill="#f4f4f4" stroke="#d6d6d6" stroke-width="1" />
<text x="928" y="355.5" font-family="Liberation Sans" font-size="7" font-weight="normal" fill="#9a9a9a" text-anchor="middle" >1</text>
<rect x="954.5" y="347.5" width="26.600000000000023" height="10.199999999999989" fill="#f4f4f4" stroke="#d6d6d6" stroke-width="1" />
<text x="959" y="355.12" font-family="Liberation Sans" font-size="7" font-weight="normal" fill="#9a9a9a" text-anchor="start" >kHz</text>
<text x="895.2" y="374.8" font-family="Liberation Sans" font-size="7" font-weight="normal" fill="#3a3a3a" text-anchor="end" >Разрешение.</text>
<rect x="901" y="364.8" width="80.6" height="14.1" fill="#cccccc" stroke="#c4c4c4" stroke-width="0.8" />
<text x="904.6" y="374" font-family="Liberation Sans" font-size="7" font-weight="normal" fill="#9a9a9a" text-anchor="start" >100 Hz</text>
<path d="M972 370.5 l2.6 2.6 l2.6 -2.6" stroke="#aaa" stroke-width="0.8" fill="none"/>
<rect x="901" y="379" width="80.6" height="11" fill="#fafafa" stroke="#e4e4e4" stroke-width="0.6" />
<text x="941" y="387" font-family="Liberation Sans" font-size="7" font-weight="normal" fill="#3a3a3a" text-anchor="middle" >100 Hz</text>
<text x="804.7" y="401.8" font-family="Liberation Sans" font-size="7" font-weight="normal" fill="#3a3a3a" text-anchor="start" textLength="36.9" lengthAdjust="spacingAndGlyphs" >Управление</text>
<text x="919.8" y="401.8" font-family="Liberation Sans" font-size="7" font-weight="normal" fill="#3a3a3a" text-anchor="start" textLength="19.5" lengthAdjust="spacingAndGlyphs" >Экран</text>
<rect x="804.7" y="405.2" width="33.09999999999991" height="9.300000000000011" fill="#cce4f7" stroke="#4a8cc4" stroke-width="1" />
<text x="821.25" y="412.37" font-family="Liberation Sans" font-size="7" font-weight="normal" fill="#2a2a2a" text-anchor="middle" >THD</text>
<rect x="842.1" y="405.2" width="32.60000000000002" height="9.300000000000011" fill="#e1e1e1" stroke="#cacaca" stroke-width="1" />
<text x="858.4000000000001" y="412.37" font-family="Liberation Sans" font-size="7" font-weight="normal" fill="#2a2a2a" text-anchor="middle" >SINAD</text>
<rect x="878.7" y="405.2" width="32.39999999999998" height="9.300000000000011" fill="#cccccc" stroke="#bfbfbf" stroke-width="1" />
<text x="894.9000000000001" y="412.37" font-family="Liberation Sans" font-size="7" font-weight="normal" fill="#8a8a8a" text-anchor="middle" >Уст...</text>
<rect x="917.5" y="405.2" width="14.299999999999955" height="9.300000000000011" fill="#cce4f7" stroke="#4a8cc4" stroke-width="1" />
<text x="924.65" y="412.37" font-family="Liberation Sans" font-size="7" font-weight="normal" fill="#2a2a2a" text-anchor="middle" >%</text>
<rect x="935.5" y="405.2" width="14.399999999999977" height="9.300000000000011" fill="#e1e1e1" stroke="#cacaca" stroke-width="1" />
<text x="942.7" y="412.37" font-family="Liberation Sans" font-size="7" font-weight="normal" fill="#2a2a2a" text-anchor="middle" >dB</text>
<text x="963.3" y="414.8" font-family="Liberation Sans" font-size="7" font-weight="normal" fill="#3a3a3a" text-anchor="start" >Вх</text>
<circle cx="976.2" cy="412.3" r="2.6" fill="#f4f4f4" stroke="#b8b8b8" stroke-width="0.8"/>
<rect x="0" y="0" width="1000" height="2" fill="#7a7a7a"/>
<rect x="0" y="0" width="1.2" height="468" fill="#8a8a8a"/>
</svg>
</body></html>
